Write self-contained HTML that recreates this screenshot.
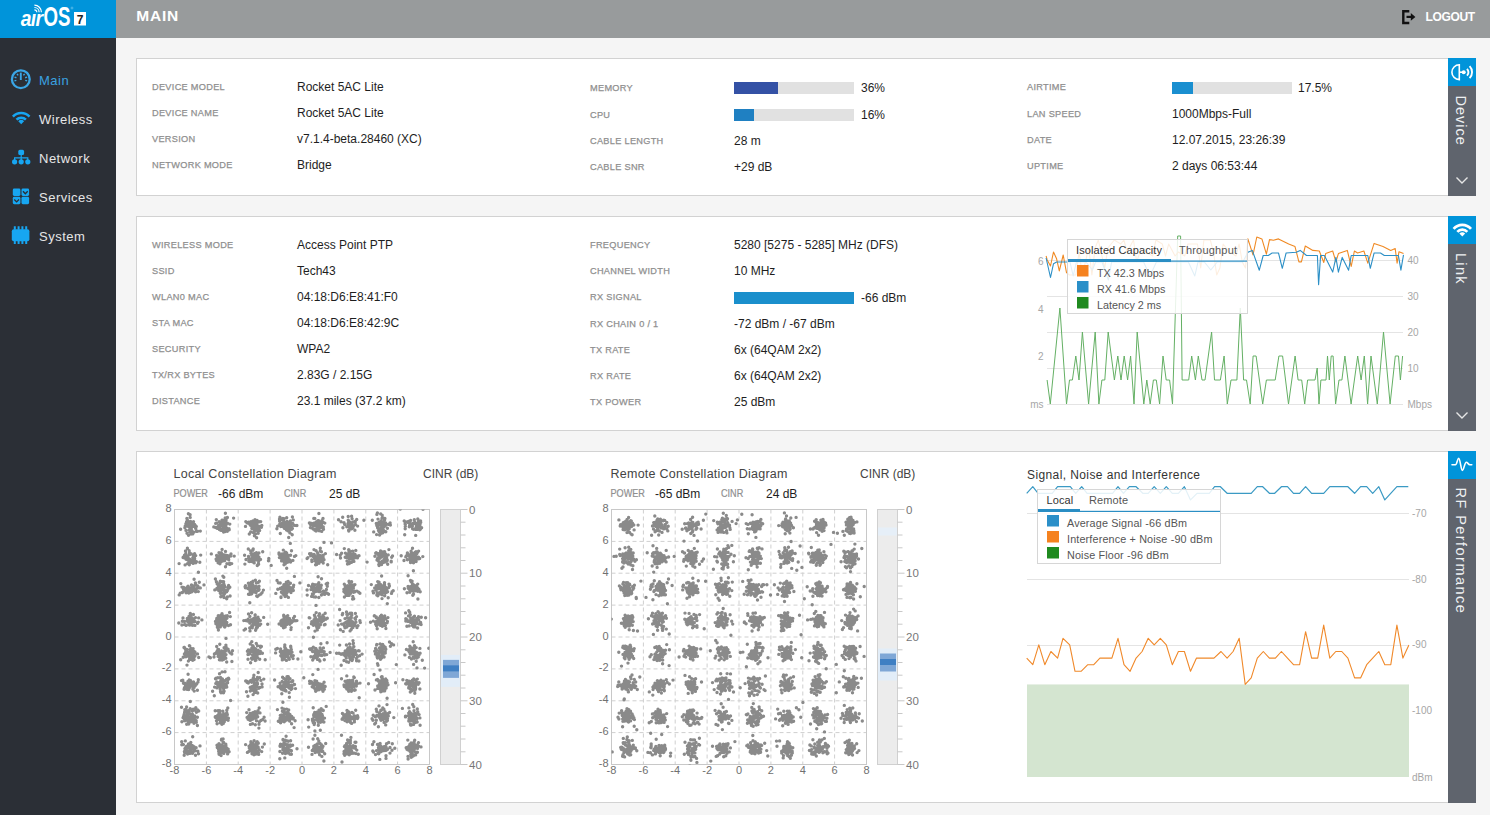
<!DOCTYPE html>
<html><head><meta charset="utf-8"><title>airOS 7 - Main</title>
<style>
html,body{margin:0;padding:0;width:1490px;height:815px;overflow:hidden;background:#f5f5f5;font-family:"Liberation Sans",sans-serif}
svg{position:absolute;left:0;top:0;font-family:"Liberation Sans",sans-serif}
</style></head><body>
<svg width="1490" height="815" viewBox="0 0 1490 815">
<rect x="136.5" y="58.5" width="1339" height="137" fill="#fff" stroke="#d2d2d2" stroke-width="1"/>
<rect x="1448" y="58" width="28" height="138" fill="#5f646d"/>
<rect x="1448" y="58" width="28" height="28" fill="#0094da"/>
<rect x="136.5" y="216.5" width="1339" height="214" fill="#fff" stroke="#d2d2d2" stroke-width="1"/>
<rect x="1448" y="216" width="28" height="215" fill="#5f646d"/>
<rect x="1448" y="216" width="28" height="28" fill="#0094da"/>
<rect x="136.5" y="451.5" width="1339" height="351" fill="#fff" stroke="#d2d2d2" stroke-width="1"/>
<rect x="1448" y="451" width="28" height="352" fill="#5f646d"/>
<rect x="1448" y="451" width="28" height="28" fill="#0094da"/>
<rect x="0" y="0" width="116" height="815" fill="#2b2f36"/>
<rect x="0" y="0" width="116" height="38" fill="#0094da"/>
<rect x="116" y="0" width="1374" height="38" fill="#989b9c"/>
<text x="136.3" y="20.8" font-size="15.5" fill="#fff" font-weight="bold" letter-spacing="0.8">MAIN</text>
<text x="1425.6" y="20.9" font-size="12" fill="#fff" font-weight="bold" letter-spacing="-0.35">LOGOUT</text>
<text x="39" y="85" font-size="13" fill="#3aa2e0" letter-spacing="0.5">Main</text>
<text x="39" y="124" font-size="13" fill="#e6e6e6" letter-spacing="0.5">Wireless</text>
<text x="39" y="163" font-size="13" fill="#e6e6e6" letter-spacing="0.5">Network</text>
<text x="39" y="202" font-size="13" fill="#e6e6e6" letter-spacing="0.5">Services</text>
<text x="39" y="241" font-size="13" fill="#e6e6e6" letter-spacing="0.5">System</text>
<text x="152" y="90" font-size="9.2" fill="#8f8f8f" letter-spacing="0.3" stroke="#8f8f8f" stroke-width="0.25">DEVICE MODEL</text>
<text x="297" y="91" font-size="12" fill="#1e1e1e">Rocket 5AC Lite</text>
<text x="152" y="116" font-size="9.2" fill="#8f8f8f" letter-spacing="0.3" stroke="#8f8f8f" stroke-width="0.25">DEVICE NAME</text>
<text x="297" y="117" font-size="12" fill="#1e1e1e">Rocket 5AC Lite</text>
<text x="152" y="142" font-size="9.2" fill="#8f8f8f" letter-spacing="0.3" stroke="#8f8f8f" stroke-width="0.25">VERSION</text>
<text x="297" y="143" font-size="12" fill="#1e1e1e">v7.1.4-beta.28460 (XC)</text>
<text x="152" y="168" font-size="9.2" fill="#8f8f8f" letter-spacing="0.3" stroke="#8f8f8f" stroke-width="0.25">NETWORK MODE</text>
<text x="297" y="169" font-size="12" fill="#1e1e1e">Bridge</text>
<text x="590" y="91" font-size="9.2" fill="#8f8f8f" letter-spacing="0.3" stroke="#8f8f8f" stroke-width="0.25">MEMORY</text>
<text x="590" y="118" font-size="9.2" fill="#8f8f8f" letter-spacing="0.3" stroke="#8f8f8f" stroke-width="0.25">CPU</text>
<text x="590" y="144" font-size="9.2" fill="#8f8f8f" letter-spacing="0.3" stroke="#8f8f8f" stroke-width="0.25">CABLE LENGTH</text>
<text x="590" y="170" font-size="9.2" fill="#8f8f8f" letter-spacing="0.3" stroke="#8f8f8f" stroke-width="0.25">CABLE SNR</text>
<rect x="734" y="82" width="120" height="12" fill="#e1e1e1"/>
<rect x="734" y="82" width="44" height="12" fill="#3451a5"/>
<text x="861" y="92" font-size="12" fill="#1e1e1e">36%</text>
<rect x="734" y="109" width="120" height="12" fill="#e1e1e1"/>
<rect x="734" y="109" width="20" height="12" fill="#1f80c2"/>
<text x="861" y="119" font-size="12" fill="#1e1e1e">16%</text>
<text x="734" y="145" font-size="12" fill="#1e1e1e">28 m</text>
<text x="734" y="171" font-size="12" fill="#1e1e1e">+29 dB</text>
<text x="1027" y="90" font-size="9.2" fill="#8f8f8f" letter-spacing="0.3" stroke="#8f8f8f" stroke-width="0.25">AIRTIME</text>
<text x="1027" y="117" font-size="9.2" fill="#8f8f8f" letter-spacing="0.3" stroke="#8f8f8f" stroke-width="0.25">LAN SPEED</text>
<text x="1027" y="143" font-size="9.2" fill="#8f8f8f" letter-spacing="0.3" stroke="#8f8f8f" stroke-width="0.25">DATE</text>
<text x="1027" y="169" font-size="9.2" fill="#8f8f8f" letter-spacing="0.3" stroke="#8f8f8f" stroke-width="0.25">UPTIME</text>
<rect x="1172" y="82" width="120" height="12" fill="#e1e1e1"/>
<rect x="1172" y="82" width="21" height="12" fill="#1a8fd0"/>
<text x="1298" y="92" font-size="12" fill="#1e1e1e">17.5%</text>
<text x="1172" y="118" font-size="12" fill="#1e1e1e">1000Mbps-Full</text>
<text x="1172" y="144" font-size="12" fill="#1e1e1e">12.07.2015, 23:26:39</text>
<text x="1172" y="170" font-size="12" fill="#1e1e1e">2 days 06:53:44</text>
<text x="152" y="248" font-size="9.2" fill="#8f8f8f" letter-spacing="0.3" stroke="#8f8f8f" stroke-width="0.25">WIRELESS MODE</text>
<text x="297" y="249" font-size="12" fill="#1e1e1e">Access Point PTP</text>
<text x="152" y="274" font-size="9.2" fill="#8f8f8f" letter-spacing="0.3" stroke="#8f8f8f" stroke-width="0.25">SSID</text>
<text x="297" y="275" font-size="12" fill="#1e1e1e">Tech43</text>
<text x="152" y="300" font-size="9.2" fill="#8f8f8f" letter-spacing="0.3" stroke="#8f8f8f" stroke-width="0.25">WLAN0 MAC</text>
<text x="297" y="301" font-size="12" fill="#1e1e1e">04:18:D6:E8:41:F0</text>
<text x="152" y="326" font-size="9.2" fill="#8f8f8f" letter-spacing="0.3" stroke="#8f8f8f" stroke-width="0.25">STA MAC</text>
<text x="297" y="327" font-size="12" fill="#1e1e1e">04:18:D6:E8:42:9C</text>
<text x="152" y="352" font-size="9.2" fill="#8f8f8f" letter-spacing="0.3" stroke="#8f8f8f" stroke-width="0.25">SECURITY</text>
<text x="297" y="353" font-size="12" fill="#1e1e1e">WPA2</text>
<text x="152" y="378" font-size="9.2" fill="#8f8f8f" letter-spacing="0.3" stroke="#8f8f8f" stroke-width="0.25">TX/RX BYTES</text>
<text x="297" y="379" font-size="12" fill="#1e1e1e">2.83G / 2.15G</text>
<text x="152" y="404" font-size="9.2" fill="#8f8f8f" letter-spacing="0.3" stroke="#8f8f8f" stroke-width="0.25">DISTANCE</text>
<text x="297" y="405" font-size="12" fill="#1e1e1e">23.1 miles (37.2 km)</text>
<text x="590" y="248" font-size="9.2" fill="#8f8f8f" letter-spacing="0.3" stroke="#8f8f8f" stroke-width="0.25">FREQUENCY</text>
<text x="734" y="249" font-size="12" fill="#1e1e1e">5280 [5275 - 5285] MHz (DFS)</text>
<text x="590" y="274" font-size="9.2" fill="#8f8f8f" letter-spacing="0.3" stroke="#8f8f8f" stroke-width="0.25">CHANNEL WIDTH</text>
<text x="734" y="275" font-size="12" fill="#1e1e1e">10 MHz</text>
<text x="590" y="300" font-size="9.2" fill="#8f8f8f" letter-spacing="0.3" stroke="#8f8f8f" stroke-width="0.25">RX SIGNAL</text>
<text x="590" y="327" font-size="9.2" fill="#8f8f8f" letter-spacing="0.3" stroke="#8f8f8f" stroke-width="0.25">RX CHAIN 0 / 1</text>
<text x="734" y="328" font-size="12" fill="#1e1e1e">-72 dBm / -67 dBm</text>
<text x="590" y="353" font-size="9.2" fill="#8f8f8f" letter-spacing="0.3" stroke="#8f8f8f" stroke-width="0.25">TX RATE</text>
<text x="734" y="354" font-size="12" fill="#1e1e1e">6x (64QAM 2x2)</text>
<text x="590" y="379" font-size="9.2" fill="#8f8f8f" letter-spacing="0.3" stroke="#8f8f8f" stroke-width="0.25">RX RATE</text>
<text x="734" y="380" font-size="12" fill="#1e1e1e">6x (64QAM 2x2)</text>
<text x="590" y="405" font-size="9.2" fill="#8f8f8f" letter-spacing="0.3" stroke="#8f8f8f" stroke-width="0.25">TX POWER</text>
<text x="734" y="406" font-size="12" fill="#1e1e1e">25 dBm</text>
<rect x="734" y="292" width="120" height="12" fill="#1a8fcc"/>
<text x="861" y="302" font-size="12" fill="#1e1e1e">-66 dBm</text>
<text transform="translate(1455.8,95.5) rotate(90)" font-size="14.5" fill="#eef0f2" letter-spacing="1.0">Device</text>
<text transform="translate(1455.8,253) rotate(90)" font-size="14.5" fill="#eef0f2" letter-spacing="1.3">Link</text>
<text transform="translate(1455.8,487.5) rotate(90)" font-size="14.5" fill="#eef0f2" letter-spacing="1.45">RF Performance</text>
<path d="M1456.5 177.5 L1462 183.0 L1467.5 177.5" fill="none" stroke="#e6e6e6" stroke-width="1.4"/>
<path d="M1456.5 412.5 L1462 418.0 L1467.5 412.5" fill="none" stroke="#e6e6e6" stroke-width="1.4"/>
<g fill="none" stroke="#fff" stroke-width="1.6"><path d="M1459.3 64.8 A7.4 7.4 0 0 0 1459.3 79.6 Z"/><path d="M1459.3 72.2 H1463"/><path d="M1467 68.8 A5.2 5.2 0 0 1 1467 75.6" stroke-width="1.9"/><path d="M1469.6 66.2 A8.6 8.6 0 0 1 1469.6 78.2" stroke-width="1.9"/></g><circle cx="1463.7" cy="72.2" r="2" fill="#fff"/>
<g fill="none" stroke="#fff" stroke-width="2.7"><path d="M1453.6 228.9 A11.4 11.4 0 0 1 1471 228.9"/><path d="M1457.3 231.9 A6.8 6.8 0 0 1 1467.3 231.9"/></g><path d="M1462.3 236.6 L1459.4 233.6 A4.1 4.1 0 0 1 1465.2 233.6 Z" fill="#fff"/>
<path d="M1452 464.7 H1455.5 C1456.9 464.7 1457.4 458.4 1458.7 458.4 C1460.2 458.4 1461 470.4 1462.4 470.4 C1463.7 470.4 1464.7 462.2 1466.3 462.2 C1467.6 462.2 1468.3 464.7 1469.8 464.7 H1471.8" fill="none" stroke="#fff" stroke-width="1.6" stroke-linecap="round"/>
<path d="M1047 260.5 H1403" stroke="#e4e4e4" stroke-width="1"/>
<path d="M1047 296.5 H1403" stroke="#e4e4e4" stroke-width="1"/>
<path d="M1047 332.5 H1403" stroke="#e4e4e4" stroke-width="1"/>
<path d="M1047 368.5 H1403" stroke="#e4e4e4" stroke-width="1"/>
<path d="M1047 404.5 H1403" stroke="#e4e4e4" stroke-width="1"/>
<text x="1407.5" y="264" font-size="10" fill="#a6a6a6">40</text>
<text x="1407.5" y="300" font-size="10" fill="#a6a6a6">30</text>
<text x="1407.5" y="336" font-size="10" fill="#a6a6a6">20</text>
<text x="1407.5" y="372" font-size="10" fill="#a6a6a6">10</text>
<text x="1407.5" y="407.5" font-size="10" fill="#a6a6a6">Mbps</text>
<text x="1043.5" y="264.5" font-size="10" fill="#a6a6a6" text-anchor="end">6</text>
<text x="1043.5" y="312.5" font-size="10" fill="#a6a6a6" text-anchor="end">4</text>
<text x="1043.5" y="360" font-size="10" fill="#a6a6a6" text-anchor="end">2</text>
<text x="1043.5" y="407.5" font-size="10" fill="#a6a6a6" text-anchor="end">ms</text>
<polyline points="1047.1,380.0 1050.3,404.0 1059.9,308.0 1066.5,404.0 1069.5,380.0 1072.4,380.0 1075.8,356.0 1079.0,380.0 1082.4,332.0 1088.6,404.0 1095.2,332.0 1098.9,404.0 1101.9,380.0 1104.8,380.0 1108.2,332.0 1114.4,380.0 1117.8,356.0 1121.0,380.0 1124.2,356.0 1127.6,380.0 1130.6,356.0 1134.0,404.0 1137.2,332.0 1143.8,404.0 1146.8,380.0 1150.2,404.0 1153.4,380.0 1156.3,380.0 1159.6,404.0 1163.0,356.0 1166.2,380.0 1169.6,380.0 1172.5,404.0 1177.7,236.0 1180.6,236.0 1182.1,380.0 1188.7,380.0 1191.7,356.0 1195.4,380.0 1198.3,356.0 1202.0,380.0 1205.0,380.0 1211.6,332.0 1214.5,380.0 1220.4,380.0 1224.1,356.0 1227.3,404.0 1231.0,380.0 1236.9,380.0 1240.3,308.0 1243.6,380.0 1246.5,380.0 1250.2,404.0 1253.1,356.0 1256.1,356.0 1262.7,404.0 1266.4,380.0 1275.2,380.0 1278.9,356.0 1282.6,356.0 1288.5,404.0 1295.1,356.0 1298.1,380.0 1301.7,380.0 1304.7,404.0 1307.6,380.0 1315.0,380.0 1317.2,368.0 1319.0,404.0 1320.9,380.0 1326.0,380.0 1327.5,356.0 1329.3,380.0 1331.2,356.0 1333.1,356.0 1335.6,404.0 1339.0,380.0 1341.9,380.0 1344.9,356.0 1351.1,404.0 1357.7,356.0 1361.1,380.0 1364.3,356.0 1367.6,404.0 1371.0,356.0 1377.3,404.0 1383.5,332.0 1390.1,404.0 1395.3,356.0 1398.5,356.0 1400.4,380.0 1402.6,356.0" fill="none" stroke="#64b064" stroke-width="1" stroke-linejoin="round"/>
<polyline points="1046.1,256.0 1047.2,259.9 1050.5,266.0 1053.5,252.0 1056.6,258.8 1059.3,270.9 1063.2,255.0 1066.5,272.6 1069.5,275.0 1075.9,275.0 1079.1,252.0 1082.3,275.0 1088.7,248.0 1091.9,275.0 1095.1,248.0 1098.3,240.0 1104.7,268.0 1107.9,248.0 1114.3,240.0 1120.7,244.0 1123.9,240.0 1127.1,252.0 1133.5,240.0 1136.7,262.0 1139.9,252.0 1146.3,252.0 1152.7,256.0 1155.9,240.0 1162.3,244.0 1165.5,256.0 1168.7,244.0 1175.1,256.0 1178.3,252.0 1184.7,256.0 1187.9,244.0 1194.3,244.0 1197.5,244.0 1200.7,268.0 1203.9,240.0 1210.3,240.0 1213.5,252.0 1216.7,275.0 1219.9,268.0 1223.1,244.0 1229.5,252.0 1235.9,256.0 1239.1,244.0 1242.3,262.0 1245.5,268.0 1247.9,238.9 1253.0,254.9 1256.8,237.0 1261.9,238.9 1266.4,254.2 1269.5,239.6 1273.4,240.2 1278.5,238.9 1283.6,241.5 1288.7,244.0 1295.0,246.6 1298.9,261.9 1301.4,261.9 1305.3,246.0 1312.9,250.4 1319.3,251.0 1323.8,262.5 1325.7,253.6 1332.7,251.0 1335.9,261.9 1338.4,253.6 1347.3,250.4 1351.2,266.4 1354.4,251.0 1357.6,253.0 1363.9,251.0 1367.8,263.2 1374.1,243.4 1383.0,246.6 1390.7,250.4 1395.2,248.5 1397.1,263.2 1399.0,251.7 1403.5,253.6" fill="none" stroke="#f08a24" stroke-width="1.1" stroke-linejoin="round"/>
<polyline points="1046.1,258.0 1050.5,277.5 1053.5,263.7 1056.6,262.0 1067.0,262.0 1070.0,262.0 1073.2,276.0 1076.4,262.0 1079.6,262.0 1086.0,262.0 1092.4,270.0 1095.6,262.0 1102.0,262.0 1108.4,280.0 1111.6,262.0 1118.0,262.0 1121.2,262.0 1127.6,262.0 1130.8,262.0 1137.2,262.0 1140.4,262.0 1143.6,262.0 1150.0,276.0 1156.4,262.0 1159.6,262.0 1162.8,262.0 1169.2,262.0 1175.6,262.0 1182.0,262.0 1185.2,262.0 1188.4,262.0 1194.8,276.0 1198.0,262.0 1204.4,262.0 1210.8,270.0 1217.2,262.0 1223.6,262.0 1230.0,262.0 1236.4,262.0 1242.8,262.0 1247.9,252.3 1252.3,250.4 1259.3,270.2 1263.2,255.5 1268.3,255.5 1272.1,253.0 1278.5,253.0 1282.3,268.3 1286.1,253.0 1296.3,252.3 1300.2,250.4 1306.5,255.5 1317.4,255.5 1318.6,284.8 1320.6,255.5 1324.4,255.5 1332.7,272.1 1335.9,257.4 1338.4,272.1 1342.2,257.4 1348.6,270.2 1351.2,255.5 1367.8,255.5 1370.3,268.3 1374.1,253.0 1380.5,253.0 1384.3,255.5 1398.4,255.5 1400.9,270.2 1403.5,254.9" fill="none" stroke="#2b8fc6" stroke-width="1.1" stroke-linejoin="round"/>
<rect x="1067.5" y="239.5" width="180" height="74" fill="#fff" fill-opacity="0.86" stroke="#d6d6d6"/>
<text x="1076" y="254" font-size="11" fill="#333" letter-spacing="0.1">Isolated Capacity</text>
<text x="1179" y="254" font-size="11" fill="#555" letter-spacing="0.2">Throughput</text>
<rect x="1068" y="259" width="103" height="3" fill="#2a8ec4"/>
<rect x="1068" y="260.5" width="179" height="1.2" fill="#2a8ec4"/>
<rect x="1077" y="265" width="11.5" height="11.5" fill="#f5821f"/>
<text x="1097" y="277" font-size="10.8" fill="#555">TX 42.3 Mbps</text>
<rect x="1077" y="281" width="11.5" height="11.5" fill="#2a8fc8"/>
<text x="1097" y="293" font-size="10.8" fill="#555">RX 41.6 Mbps</text>
<rect x="1077" y="297" width="11.5" height="11.5" fill="#1f8a1f"/>
<text x="1097" y="309" font-size="10.8" fill="#555">Latency 2 ms</text>
<text x="1027" y="479" font-size="12" fill="#333" letter-spacing="0.4">Signal, Noise and Interference</text>
<path d="M1027 513.5 H1409" stroke="#e4e4e4" stroke-width="1"/>
<text x="1412" y="516.6" font-size="10" fill="#a6a6a6">-70</text>
<path d="M1027 579.5 H1409" stroke="#e4e4e4" stroke-width="1"/>
<text x="1412" y="582.5" font-size="10" fill="#a6a6a6">-80</text>
<path d="M1027 645.5 H1409" stroke="#e4e4e4" stroke-width="1"/>
<text x="1412" y="648.4000000000001" font-size="10" fill="#a6a6a6">-90</text>
<path d="M1027 711.5 H1409" stroke="#e4e4e4" stroke-width="1"/>
<text x="1412" y="714.3" font-size="10" fill="#a6a6a6">-100</text>
<text x="1412" y="780.5" font-size="10" fill="#a6a6a6">dBm</text>
<rect x="1027" y="684.44" width="382" height="92.55999999999995" fill="#d4e5d0"/>
<polyline points="1026.7,493.3 1032.8,486.7 1038.1,493.3 1052.2,493.3 1057.6,486.7 1070.3,486.7 1075.7,493.3 1081.7,486.7 1087.1,493.3 1112.6,493.3 1118.0,486.7 1123.4,493.3 1129.4,486.7 1136.1,486.7 1142.8,493.3 1148.2,493.3 1154.2,486.7 1160.3,493.3 1166.3,486.7 1172.3,493.3 1178.4,493.3 1184.4,486.7 1190.5,499.9 1197.0,493.3 1209.3,493.3 1214.6,486.7 1220.4,486.7 1227.1,493.3 1251.2,493.3 1257.3,486.7 1262.7,486.7 1269.4,493.3 1274.7,493.3 1281.4,486.7 1287.5,486.7 1293.5,493.3 1299.6,493.3 1305.6,486.7 1311.6,493.3 1323.7,493.3 1329.8,486.7 1347.9,486.7 1354.6,493.3 1360.6,486.7 1366.7,486.7 1372.7,493.3 1378.8,486.7 1384.8,499.9 1396.9,486.7 1408.3,486.7" fill="none" stroke="#3b9ac4" stroke-width="1.2" stroke-linejoin="round"/>
<polyline points="1026.7,658.1 1032.8,664.7 1038.8,644.9 1044.8,664.7 1050.9,651.5 1057.6,658.1 1063.0,638.3 1069.7,644.9 1075.0,671.3 1081.1,671.3 1087.8,664.7 1093.8,664.7 1099.9,658.1 1111.9,658.1 1118.0,638.3 1124.0,664.7 1130.1,671.3 1136.1,658.1 1142.1,651.5 1148.2,638.3 1154.2,644.9 1160.3,638.3 1166.3,644.9 1172.3,664.7 1178.4,651.5 1184.4,651.5 1190.5,671.3 1196.5,658.1 1214.0,658.1 1221.0,651.5 1227.1,658.1 1233.1,651.5 1239.2,638.3 1245.2,684.4 1251.2,677.9 1257.3,658.1 1263.3,651.5 1269.4,658.1 1275.4,658.1 1281.4,651.5 1287.5,658.1 1293.5,664.7 1299.6,664.7 1305.6,631.7 1311.6,658.1 1317.7,658.1 1323.7,625.1 1329.8,658.1 1335.8,651.5 1341.8,651.5 1347.9,658.1 1354.6,677.9 1360.6,677.9 1366.7,664.7 1372.7,658.1 1378.8,651.5 1384.8,664.7 1390.8,664.7 1396.9,625.1 1402.9,658.1 1408.9,644.9" fill="none" stroke="#f0892a" stroke-width="1.1" stroke-linejoin="round"/>
<rect x="1037.5" y="489.5" width="183" height="74" fill="#fff" fill-opacity="0.86" stroke="#d6d6d6"/>
<text x="1046.5" y="504" font-size="11" fill="#333" letter-spacing="0.1">Local</text>
<text x="1089" y="504" font-size="11" fill="#555" letter-spacing="0.1">Remote</text>
<rect x="1038" y="509" width="42" height="3" fill="#2a8ec4"/>
<rect x="1038" y="510.8" width="182" height="1.2" fill="#2a8ec4"/>
<rect x="1047" y="515" width="12" height="11.5" fill="#2b8fc8"/>
<text x="1067" y="526.5" font-size="10.8" fill="#555" letter-spacing="0.15">Average Signal -66 dBm</text>
<rect x="1047" y="531" width="12" height="11.5" fill="#f5821f"/>
<text x="1067" y="542.5" font-size="10.8" fill="#555" letter-spacing="0.15">Interference + Noise -90 dBm</text>
<rect x="1047" y="547" width="12" height="11.5" fill="#1f8a1f"/>
<text x="1067" y="558.5" font-size="10.8" fill="#555" letter-spacing="0.15">Noise Floor -96 dBm</text>
<text x="173.5" y="478.3" font-size="12.5" fill="#444" letter-spacing="0.25">Local Constellation Diagram</text>
<text x="423.0" y="478.3" font-size="12" fill="#444">CINR (dB)</text>
<text transform="translate(173.5,497) scale(0.91,1)" font-size="10" fill="#8f8f8f" stroke="#8f8f8f" stroke-width="0.2">POWER</text>
<text x="218.0" y="497.5" font-size="12" fill="#1e1e1e">-66 dBm</text>
<text transform="translate(284.0,497) scale(0.91,1)" font-size="10" fill="#8f8f8f" stroke="#8f8f8f" stroke-width="0.2">CINR</text>
<text x="329.0" y="497.5" font-size="12" fill="#1e1e1e">25 dB</text>
<path d="M206.4 509.5 V764.5" stroke="#cfcfcf" stroke-dasharray="4,3"/>
<path d="M174.5 732.6 H429.5" stroke="#cfcfcf" stroke-dasharray="4,3"/>
<path d="M238.2 509.5 V764.5" stroke="#cfcfcf" stroke-dasharray="4,3"/>
<path d="M174.5 700.8 H429.5" stroke="#cfcfcf" stroke-dasharray="4,3"/>
<path d="M270.1 509.5 V764.5" stroke="#cfcfcf" stroke-dasharray="4,3"/>
<path d="M174.5 668.9 H429.5" stroke="#cfcfcf" stroke-dasharray="4,3"/>
<path d="M302.0 509.5 V764.5" stroke="#cfcfcf" stroke-dasharray="4,3"/>
<path d="M174.5 637.0 H429.5" stroke="#cfcfcf" stroke-dasharray="4,3"/>
<path d="M333.9 509.5 V764.5" stroke="#cfcfcf" stroke-dasharray="4,3"/>
<path d="M174.5 605.1 H429.5" stroke="#cfcfcf" stroke-dasharray="4,3"/>
<path d="M365.8 509.5 V764.5" stroke="#cfcfcf" stroke-dasharray="4,3"/>
<path d="M174.5 573.2 H429.5" stroke="#cfcfcf" stroke-dasharray="4,3"/>
<path d="M397.6 509.5 V764.5" stroke="#cfcfcf" stroke-dasharray="4,3"/>
<path d="M174.5 541.4 H429.5" stroke="#cfcfcf" stroke-dasharray="4,3"/>
<rect x="174.5" y="509.5" width="255.0" height="255.0" fill="none" stroke="#c8c8c8"/>
<text x="171.5" y="767.0" font-size="11" fill="#707070" text-anchor="end">-8</text>
<text x="174.5" y="774" font-size="11" fill="#707070" text-anchor="middle">-8</text>
<text x="171.5" y="735.125" font-size="11" fill="#707070" text-anchor="end">-6</text>
<text x="206.375" y="774" font-size="11" fill="#707070" text-anchor="middle">-6</text>
<text x="171.5" y="703.25" font-size="11" fill="#707070" text-anchor="end">-4</text>
<text x="238.25" y="774" font-size="11" fill="#707070" text-anchor="middle">-4</text>
<text x="171.5" y="671.375" font-size="11" fill="#707070" text-anchor="end">-2</text>
<text x="270.125" y="774" font-size="11" fill="#707070" text-anchor="middle">-2</text>
<text x="171.5" y="639.5" font-size="11" fill="#707070" text-anchor="end">0</text>
<text x="302.0" y="774" font-size="11" fill="#707070" text-anchor="middle">0</text>
<text x="171.5" y="607.625" font-size="11" fill="#707070" text-anchor="end">2</text>
<text x="333.875" y="774" font-size="11" fill="#707070" text-anchor="middle">2</text>
<text x="171.5" y="575.75" font-size="11" fill="#707070" text-anchor="end">4</text>
<text x="365.75" y="774" font-size="11" fill="#707070" text-anchor="middle">4</text>
<text x="171.5" y="543.875" font-size="11" fill="#707070" text-anchor="end">6</text>
<text x="397.625" y="774" font-size="11" fill="#707070" text-anchor="middle">6</text>
<text x="171.5" y="512.0" font-size="11" fill="#707070" text-anchor="end">8</text>
<text x="429.5" y="774" font-size="11" fill="#707070" text-anchor="middle">8</text>
<clipPath id="clip3"><rect x="174.5" y="509.5" width="255.0" height="255.0"/></clipPath>
<path clip-path="url(#clip3)" d="M185.5 749.2h0M194.0 746.6h0M192.6 753.3h0M186.8 747.6h0M190.7 750.4h0M189.9 748.9h0M195.5 755.3h0M192.7 736.7h0M183.4 744.6h0M191.4 745.3h0M181.8 744.8h0M189.8 749.2h0M190.2 753.3h0M192.9 745.9h0M186.3 746.8h0M190.8 751.4h0M193.4 749.0h0M188.5 743.9h0M185.7 747.5h0M185.3 740.9h0M190.2 750.2h0M187.6 745.8h0M197.8 751.3h0M184.4 751.5h0M181.7 741.8h0M186.4 746.5h0M189.9 750.8h0M193.5 748.7h0M200.0 745.9h0M190.0 753.4h0M188.5 751.1h0M192.8 746.2h0M184.7 752.7h0M198.5 753.7h0M189.7 753.0h0M194.2 747.2h0M189.3 751.3h0M193.7 748.3h0M188.7 747.7h0M188.7 751.1h0M188.1 746.9h0M182.5 744.4h0M184.2 755.3h0M188.5 747.4h0M190.8 742.5h0M190.8 747.1h0M196.1 747.7h0M184.9 748.6h0M187.8 752.8h0M194.6 751.0h0M189.2 746.5h0M191.9 748.2h0M191.4 752.6h0M190.7 747.8h0M187.6 754.1h0M192.7 746.4h0M194.9 750.8h0M186.4 750.4h0M185.2 749.6h0M189.5 748.2h0M191.8 752.0h0M187.2 745.9h0M190.2 708.7h0M187.0 716.3h0M190.7 718.3h0M188.7 724.1h0M198.7 711.0h0M197.7 711.2h0M197.4 717.3h0M188.5 722.6h0M181.9 721.8h0M188.7 719.4h0M183.1 717.7h0M192.1 721.6h0M194.0 723.2h0M193.2 709.3h0M181.5 707.3h0M189.7 721.8h0M186.2 718.9h0M191.9 716.7h0M191.6 717.8h0M191.5 715.3h0M189.0 720.0h0M187.0 712.2h0M191.8 720.2h0M184.1 714.4h0M192.8 718.0h0M184.6 712.2h0M192.3 711.1h0M187.0 720.2h0M184.7 719.8h0M190.6 721.9h0M194.4 718.6h0M197.7 709.9h0M196.4 712.2h0M188.3 717.2h0M185.8 709.2h0M187.0 710.7h0M194.9 720.1h0M197.4 725.5h0M192.9 718.3h0M190.8 717.5h0M196.3 722.3h0M195.8 707.8h0M190.8 715.6h0M183.7 716.2h0M190.3 701.5h0M186.7 724.2h0M190.6 719.3h0M185.1 712.0h0M187.6 719.8h0M188.9 717.5h0M194.7 716.0h0M193.9 722.1h0M188.1 712.2h0M184.8 709.7h0M196.2 720.6h0M185.9 716.2h0M191.7 719.7h0M187.3 714.8h0M186.6 707.0h0M189.2 712.5h0M187.6 715.0h0M195.2 717.4h0M192.3 720.2h0M190.8 714.4h0M184.8 717.4h0M194.4 710.0h0M183.7 717.5h0M184.9 720.7h0M187.4 717.3h0M189.2 710.5h0M192.4 714.2h0M190.3 719.4h0M188.7 688.0h0M192.0 685.6h0M189.4 687.8h0M190.2 684.5h0M186.0 686.3h0M181.5 680.6h0M188.4 684.4h0M189.4 683.4h0M192.0 684.0h0M185.4 688.9h0M188.7 689.6h0M191.6 682.4h0M196.5 683.6h0M194.1 687.4h0M189.2 679.9h0M192.9 689.2h0M194.2 691.1h0M197.4 690.2h0M187.2 689.4h0M184.8 683.2h0M189.4 686.7h0M188.1 674.2h0M190.2 681.7h0M184.1 689.3h0M185.5 684.7h0M188.2 687.2h0M183.5 683.3h0M191.6 683.5h0M192.1 685.8h0M190.1 682.7h0M184.5 687.6h0M190.4 680.4h0M188.2 686.1h0M187.9 683.9h0M190.6 684.0h0M198.3 679.7h0M185.2 683.4h0M196.7 684.1h0M193.5 681.9h0M190.4 684.6h0M187.9 681.5h0M187.8 685.3h0M195.2 685.7h0M185.4 686.3h0M192.2 683.7h0M189.5 684.1h0M190.6 686.1h0M193.8 683.6h0M189.7 683.1h0M182.8 680.3h0M190.2 681.8h0M198.0 682.1h0M190.6 681.0h0M193.0 685.5h0M193.0 688.1h0M186.2 684.0h0M188.7 654.3h0M189.8 649.6h0M185.9 652.0h0M192.8 653.0h0M192.8 656.1h0M191.0 655.1h0M190.8 653.7h0M194.1 659.5h0M197.5 653.9h0M190.1 651.8h0M189.8 653.4h0M190.7 654.5h0M192.9 657.3h0M191.2 653.8h0M189.5 659.2h0M193.1 651.7h0M189.8 659.5h0M189.6 654.3h0M194.9 652.0h0M193.2 653.5h0M191.5 653.2h0M192.3 651.5h0M184.4 653.9h0M191.3 652.6h0M184.0 647.5h0M187.0 665.1h0M185.9 656.7h0M192.3 652.0h0M189.8 646.1h0M193.3 651.4h0M191.2 659.2h0M190.2 655.1h0M186.2 649.4h0M188.5 653.1h0M194.2 653.5h0M189.8 651.5h0M193.1 648.6h0M193.0 650.1h0M190.1 649.7h0M193.5 654.5h0M193.9 655.8h0M198.7 657.5h0M192.3 653.6h0M190.0 652.7h0M192.8 652.4h0M185.3 656.0h0M191.4 648.6h0M191.0 654.3h0M191.0 653.5h0M192.7 660.2h0M185.9 653.9h0M186.8 649.5h0M192.6 650.5h0M188.9 653.5h0M185.3 649.2h0M186.8 652.0h0M193.2 654.5h0M194.3 654.9h0M186.1 655.4h0M191.1 656.2h0M188.6 656.2h0M191.2 656.8h0M189.4 645.7h0M184.4 647.5h0M183.2 657.2h0M194.2 651.6h0M180.7 659.8h0M188.4 661.1h0M194.9 656.2h0M185.6 652.3h0M194.0 621.9h0M190.8 619.3h0M193.4 619.1h0M184.5 621.5h0M186.3 625.2h0M193.7 619.8h0M178.8 623.0h0M193.0 620.3h0M186.1 625.4h0M190.3 613.5h0M195.0 621.5h0M198.3 622.1h0M201.9 619.9h0M193.5 620.4h0M188.0 621.2h0M195.5 617.6h0M191.8 617.7h0M188.6 617.7h0M190.0 621.7h0M194.3 621.0h0M183.0 617.9h0M192.3 618.2h0M189.5 622.6h0M197.6 623.2h0M193.4 614.5h0M190.6 614.6h0M187.3 620.8h0M190.1 622.3h0M191.2 619.7h0M188.0 622.0h0M189.6 625.0h0M191.0 621.8h0M190.9 624.7h0M190.0 623.9h0M191.7 622.2h0M190.5 618.5h0M191.2 621.5h0M190.5 614.9h0M189.3 623.9h0M193.5 619.9h0M190.8 622.8h0M187.3 618.4h0M184.6 624.4h0M182.3 621.3h0M189.9 619.5h0M194.9 625.4h0M198.7 617.9h0M181.9 625.0h0M189.4 625.1h0M188.5 621.2h0M189.1 616.3h0M190.1 621.3h0M192.4 625.2h0M189.4 619.7h0M188.6 620.8h0M191.1 617.6h0M191.8 590.6h0M191.9 588.5h0M204.0 584.9h0M190.5 592.3h0M183.8 589.7h0M194.3 589.6h0M191.5 584.9h0M185.9 588.3h0M191.9 587.2h0M198.0 586.5h0M198.4 587.7h0M190.2 591.4h0M197.0 588.3h0M191.0 589.6h0M194.1 579.2h0M183.2 588.3h0M183.6 587.4h0M187.4 587.4h0M187.8 591.3h0M180.8 583.6h0M195.7 584.3h0M193.8 588.8h0M183.5 589.2h0M188.3 587.0h0M185.8 590.3h0M199.3 582.2h0M184.9 590.9h0M179.2 594.9h0M198.3 591.6h0M194.5 588.8h0M182.0 587.1h0M195.0 585.3h0M188.8 593.0h0M186.1 592.7h0M188.4 588.2h0M186.4 592.6h0M193.7 590.6h0M195.7 590.0h0M183.6 588.0h0M195.4 582.9h0M189.5 587.6h0M186.9 591.8h0M189.8 591.3h0M189.0 588.4h0M190.0 589.8h0M191.8 591.7h0M185.9 588.9h0M188.0 586.1h0M200.3 587.9h0M180.3 593.1h0M191.0 589.4h0M182.4 592.5h0M188.2 592.2h0M192.6 587.7h0M195.6 591.7h0M197.7 586.0h0M193.1 590.4h0M193.8 585.9h0M196.7 588.6h0M191.5 591.9h0M187.5 563.6h0M189.6 553.1h0M189.1 550.6h0M183.1 557.6h0M193.7 559.6h0M183.2 557.3h0M190.5 554.2h0M194.6 553.7h0M190.7 560.6h0M189.7 560.4h0M200.7 555.1h0M189.7 559.3h0M187.9 557.6h0M188.6 559.2h0M185.5 556.4h0M191.8 560.0h0M194.5 559.4h0M192.8 557.6h0M186.6 559.3h0M186.1 557.3h0M185.8 553.3h0M179.1 563.6h0M188.9 560.2h0M188.9 562.0h0M193.6 555.7h0M185.1 564.9h0M187.4 548.3h0M185.6 554.7h0M188.7 560.5h0M185.5 550.9h0M184.5 555.2h0M188.8 558.9h0M193.1 563.4h0M189.4 559.2h0M185.8 557.7h0M194.4 554.9h0M189.6 552.6h0M193.2 561.8h0M187.4 556.3h0M187.4 556.3h0M184.8 558.0h0M190.3 559.7h0M187.9 560.0h0M189.2 554.8h0M195.7 555.6h0M190.3 560.5h0M196.4 561.7h0M199.8 562.3h0M195.7 561.6h0M194.6 558.4h0M195.8 562.8h0M186.1 559.3h0M194.4 556.8h0M189.3 564.7h0M194.4 558.0h0M191.3 554.0h0M192.0 562.5h0M190.2 562.2h0M193.9 556.6h0M185.2 526.1h0M185.9 523.7h0M191.4 527.4h0M191.7 523.9h0M200.3 531.1h0M180.6 529.2h0M190.0 532.1h0M188.5 535.3h0M194.2 526.5h0M191.9 525.1h0M186.0 530.4h0M189.0 522.1h0M184.9 527.7h0M190.9 529.8h0M187.0 533.2h0M188.3 523.4h0M196.3 526.4h0M188.2 524.0h0M186.6 521.7h0M187.1 524.8h0M195.7 528.4h0M196.4 531.2h0M188.0 522.2h0M192.4 525.4h0M192.1 525.4h0M188.0 525.8h0M190.0 525.8h0M195.5 525.6h0M191.3 524.7h0M189.2 530.0h0M189.9 527.6h0M197.5 531.3h0M194.6 524.5h0M190.2 517.4h0M185.9 525.1h0M186.9 518.5h0M191.6 525.5h0M193.4 523.4h0M187.5 523.9h0M189.8 524.8h0M190.3 522.1h0M190.3 529.5h0M190.1 514.7h0M191.3 529.1h0M191.0 534.0h0M190.5 528.1h0M193.8 532.3h0M193.5 521.8h0M189.6 526.0h0M190.5 521.4h0M190.1 528.4h0M191.9 530.9h0M190.2 523.5h0M187.3 526.0h0M188.5 526.6h0M187.4 520.1h0M192.7 533.9h0M188.4 513.8h0M225.9 751.3h0M220.6 748.0h0M224.4 748.5h0M219.4 745.5h0M221.5 748.5h0M219.6 746.7h0M222.7 750.4h0M223.2 752.1h0M224.5 746.2h0M226.1 751.1h0M223.5 746.4h0M227.4 748.6h0M222.4 750.6h0M217.0 745.2h0M221.5 751.8h0M223.8 753.4h0M219.7 749.4h0M218.7 751.5h0M218.5 747.9h0M221.4 749.8h0M223.1 742.8h0M222.8 745.9h0M220.9 747.4h0M220.3 753.1h0M228.2 750.4h0M229.1 751.8h0M226.1 749.1h0M224.4 748.5h0M223.6 742.5h0M221.1 755.6h0M218.5 749.6h0M221.4 740.1h0M218.3 746.8h0M227.3 751.1h0M217.3 747.5h0M221.6 739.2h0M222.1 748.8h0M222.0 749.1h0M224.4 748.3h0M219.1 748.5h0M226.2 748.8h0M219.0 743.6h0M223.1 739.0h0M223.5 749.5h0M222.7 747.5h0M227.6 753.9h0M220.6 752.1h0M221.3 751.6h0M225.8 744.2h0M228.2 749.1h0M221.3 745.3h0M219.0 750.8h0M224.9 747.0h0M227.5 751.5h0M219.1 754.3h0M226.0 746.1h0M219.0 753.6h0M220.7 750.2h0M221.0 752.4h0M217.1 723.8h0M227.2 715.1h0M219.7 712.9h0M218.0 716.8h0M223.4 714.8h0M220.2 722.8h0M215.3 717.3h0M223.1 719.1h0M218.0 715.1h0M224.2 720.6h0M217.9 717.9h0M218.8 711.6h0M226.1 716.7h0M228.4 718.3h0M221.0 721.1h0M215.3 716.8h0M221.6 717.7h0M219.4 719.8h0M223.3 716.7h0M228.1 720.3h0M222.7 721.8h0M227.8 718.8h0M224.3 716.7h0M222.4 723.2h0M220.5 715.8h0M221.9 715.6h0M226.8 710.3h0M215.2 710.7h0M221.7 718.3h0M222.8 715.3h0M216.5 720.8h0M219.7 710.8h0M221.7 722.9h0M218.8 710.8h0M227.3 714.5h0M216.4 716.4h0M220.0 718.9h0M223.3 723.4h0M217.9 710.7h0M218.7 715.1h0M225.9 713.8h0M223.9 715.4h0M227.8 708.0h0M220.4 718.1h0M223.8 722.0h0M223.8 713.9h0M226.6 714.0h0M218.8 715.4h0M219.4 716.4h0M226.8 713.0h0M224.3 721.7h0M220.9 714.8h0M218.9 716.2h0M217.4 718.2h0M224.0 716.5h0M227.2 715.1h0M222.9 716.0h0M218.9 713.6h0M221.0 715.5h0M221.9 724.3h0M216.4 717.6h0M220.2 716.4h0M222.8 711.2h0M222.7 715.8h0M221.1 716.8h0M226.1 713.7h0M223.6 713.9h0M221.2 717.5h0M224.8 717.8h0M225.7 719.4h0M219.5 715.1h0M212.6 691.3h0M224.8 684.8h0M223.0 682.4h0M222.5 682.5h0M214.6 687.1h0M224.1 691.3h0M222.5 686.0h0M219.4 683.6h0M223.6 688.7h0M214.3 695.7h0M223.9 687.1h0M221.0 692.7h0M228.5 678.2h0M221.4 686.0h0M221.7 684.2h0M225.0 671.8h0M224.8 680.7h0M220.8 680.2h0M223.9 685.1h0M220.5 685.3h0M216.8 681.9h0M223.5 692.7h0M222.1 686.8h0M227.5 680.5h0M220.8 683.7h0M216.9 687.9h0M223.8 684.1h0M222.9 691.8h0M226.4 683.6h0M220.5 691.8h0M228.8 679.0h0M227.6 682.8h0M222.2 686.3h0M219.5 673.8h0M226.6 679.2h0M220.2 686.7h0M219.9 684.1h0M220.2 689.3h0M220.8 683.2h0M221.3 682.4h0M225.9 684.0h0M215.5 678.8h0M222.4 679.0h0M217.4 684.2h0M217.9 677.8h0M223.1 682.8h0M216.1 678.3h0M230.6 700.5h0M220.9 679.9h0M217.8 686.7h0M215.8 683.4h0M221.1 679.8h0M223.4 683.7h0M220.1 682.9h0M224.5 686.4h0M220.5 677.4h0M225.2 687.2h0M221.5 681.7h0M219.6 683.2h0M226.8 687.1h0M226.4 686.0h0M219.5 682.4h0M228.8 651.3h0M226.7 662.0h0M218.1 656.4h0M216.7 646.5h0M218.4 649.7h0M218.6 649.4h0M215.6 653.2h0M219.8 644.3h0M222.1 671.9h0M225.9 645.1h0M221.8 652.4h0M219.4 659.8h0M225.0 655.4h0M222.4 651.5h0M231.9 661.5h0M220.4 656.1h0M214.0 657.0h0M214.4 653.9h0M225.8 658.3h0M228.1 649.2h0M221.4 654.2h0M218.9 654.0h0M223.5 659.4h0M217.0 651.4h0M218.3 652.9h0M226.0 646.8h0M222.2 660.0h0M225.0 656.9h0M220.6 652.3h0M224.4 655.4h0M224.1 647.8h0M226.2 647.7h0M226.0 638.4h0M208.9 656.9h0M220.0 658.2h0M230.2 652.9h0M221.6 650.9h0M218.2 651.2h0M221.4 654.9h0M221.0 654.1h0M216.3 652.6h0M224.5 655.3h0M221.0 659.9h0M224.3 651.7h0M223.9 654.3h0M219.0 655.9h0M221.0 655.6h0M226.0 654.6h0M219.5 651.9h0M224.0 654.0h0M210.4 657.7h0M220.7 658.5h0M231.8 654.0h0M218.7 652.3h0M224.9 650.1h0M217.9 649.5h0M222.7 659.2h0M221.4 657.6h0M225.4 651.3h0M224.2 653.7h0M225.4 650.7h0M232.5 650.8h0M222.5 655.8h0M222.1 655.9h0M222.7 658.3h0M218.0 654.2h0M222.0 652.3h0M218.7 653.6h0M215.9 623.8h0M226.6 623.7h0M222.7 616.8h0M224.3 617.7h0M221.9 623.2h0M230.3 616.6h0M224.0 623.2h0M218.4 624.6h0M215.5 621.5h0M224.2 618.0h0M221.7 624.8h0M226.8 622.4h0M223.5 623.5h0M220.8 622.9h0M218.3 620.6h0M221.1 623.2h0M220.9 620.2h0M218.4 630.0h0M226.5 625.0h0M228.5 625.6h0M223.6 616.3h0M216.7 619.3h0M227.3 615.8h0M223.6 625.3h0M217.5 626.5h0M220.4 617.1h0M224.8 627.0h0M226.9 618.3h0M224.3 625.4h0M221.7 619.6h0M218.4 622.7h0M218.9 618.7h0M221.3 621.2h0M223.2 619.5h0M225.9 615.9h0M216.9 618.2h0M222.3 620.9h0M220.3 625.6h0M222.3 617.7h0M219.1 627.0h0M224.3 626.6h0M222.5 623.3h0M224.4 620.6h0M225.1 619.9h0M220.3 626.9h0M220.3 621.4h0M221.3 618.3h0M226.6 623.8h0M222.0 613.7h0M224.9 623.6h0M229.6 612.5h0M220.7 615.4h0M221.4 621.4h0M225.5 621.3h0M221.8 623.6h0M217.4 627.2h0M223.7 620.6h0M230.5 624.8h0M218.3 615.8h0M227.1 617.7h0M216.9 624.3h0M221.8 623.6h0M220.1 621.6h0M218.8 619.7h0M225.5 616.9h0M221.6 589.0h0M222.9 576.1h0M218.1 588.9h0M198.4 572.2h0M217.2 584.0h0M220.8 591.6h0M228.6 585.5h0M222.1 581.6h0M222.4 585.1h0M227.8 589.2h0M223.5 589.6h0M223.7 595.7h0M218.6 586.5h0M224.5 585.7h0M220.6 585.6h0M227.7 587.2h0M217.6 589.3h0M226.1 591.5h0M230.1 596.0h0M228.1 589.1h0M224.0 597.6h0M223.8 584.0h0M223.6 581.7h0M220.8 596.7h0M221.9 588.9h0M220.2 585.7h0M219.0 584.2h0M217.0 588.2h0M224.5 587.3h0M223.8 589.0h0M226.7 598.8h0M220.6 581.7h0M227.3 590.8h0M220.3 581.3h0M217.2 583.8h0M224.5 591.3h0M220.3 593.2h0M219.9 582.5h0M221.0 589.1h0M224.6 593.5h0M226.6 591.8h0M221.2 590.2h0M227.3 596.9h0M224.1 585.3h0M223.8 586.4h0M215.4 579.0h0M225.9 590.6h0M224.3 586.1h0M221.6 596.1h0M224.4 587.1h0M221.4 586.3h0M220.5 586.8h0M216.4 581.7h0M224.2 593.5h0M214.8 589.9h0M218.5 588.9h0M218.7 590.5h0M223.8 577.2h0M223.0 593.1h0M223.6 590.1h0M229.8 587.3h0M220.4 555.9h0M223.1 558.4h0M226.8 556.4h0M225.0 557.1h0M227.7 555.7h0M218.1 562.8h0M221.5 557.9h0M228.5 558.0h0M223.0 556.1h0M224.8 559.7h0M226.1 555.8h0M224.3 557.2h0M225.1 557.9h0M216.1 559.1h0M221.3 556.7h0M219.0 552.8h0M222.6 555.3h0M223.5 559.2h0M216.3 559.6h0M218.8 556.8h0M222.4 555.0h0M231.0 553.9h0M220.0 556.2h0M220.6 559.7h0M225.5 566.8h0M217.2 557.0h0M217.7 559.2h0M222.9 560.9h0M218.2 561.3h0M225.7 558.2h0M226.4 555.5h0M231.7 563.6h0M219.7 555.2h0M221.3 552.7h0M223.1 555.2h0M220.8 558.6h0M224.1 554.9h0M222.1 549.4h0M221.1 555.2h0M229.7 563.1h0M216.6 555.4h0M220.1 554.2h0M219.4 559.5h0M226.9 558.2h0M225.4 555.2h0M226.9 563.8h0M220.8 553.3h0M228.7 559.8h0M221.7 559.1h0M221.4 559.3h0M221.1 561.8h0M223.8 557.1h0M225.5 551.4h0M223.9 555.0h0M234.2 556.1h0M219.9 563.8h0M229.0 555.9h0M224.8 560.5h0M216.5 560.4h0M229.7 564.4h0M219.1 561.3h0M230.8 556.0h0M221.1 557.1h0M221.1 561.0h0M211.3 553.9h0M220.1 556.9h0M221.3 557.7h0M221.1 554.8h0M227.3 531.2h0M215.7 523.4h0M219.4 529.6h0M222.2 520.2h0M219.1 521.7h0M221.5 523.2h0M223.6 527.6h0M223.8 526.6h0M224.5 523.1h0M223.6 529.8h0M222.0 524.3h0M218.0 528.3h0M224.0 526.2h0M217.2 527.2h0M225.0 525.4h0M220.5 524.6h0M222.3 526.3h0M225.8 522.5h0M229.8 524.1h0M225.8 522.8h0M222.4 530.6h0M223.5 520.4h0M225.5 527.6h0M222.0 520.3h0M225.9 525.2h0M223.8 520.5h0M222.3 521.2h0M213.8 526.9h0M216.3 519.6h0M220.8 530.3h0M223.7 527.1h0M227.4 523.2h0M219.5 526.7h0M224.4 525.8h0M220.9 524.2h0M224.7 529.6h0M225.4 513.3h0M226.1 520.1h0M224.1 523.7h0M233.6 518.1h0M220.7 524.3h0M227.4 517.5h0M225.2 517.9h0M224.6 527.0h0M219.6 525.3h0M218.8 525.1h0M218.7 528.4h0M223.6 532.1h0M229.0 528.7h0M220.8 525.4h0M226.6 528.2h0M226.0 527.2h0M225.2 531.5h0M221.9 524.1h0M226.1 527.7h0M219.5 524.8h0M217.0 528.2h0M223.1 527.3h0M221.3 523.9h0M216.5 523.1h0M215.4 527.4h0M221.1 529.5h0M222.2 522.6h0M229.2 529.8h0M254.0 754.8h0M253.6 749.0h0M254.1 750.2h0M256.1 747.0h0M257.0 745.8h0M254.6 749.3h0M254.9 746.5h0M256.0 754.1h0M253.0 744.4h0M245.6 744.6h0M259.2 749.7h0M257.4 748.0h0M253.6 745.8h0M256.1 745.2h0M253.9 746.6h0M250.3 748.0h0M253.7 752.5h0M258.4 752.3h0M251.3 747.2h0M251.4 749.5h0M256.9 747.5h0M254.0 748.3h0M249.0 746.1h0M261.7 751.6h0M247.4 752.4h0M252.8 750.6h0M253.0 750.0h0M249.3 748.1h0M250.9 741.8h0M256.6 747.8h0M257.3 747.1h0M251.6 750.9h0M253.4 747.9h0M251.5 747.9h0M256.5 743.3h0M252.9 750.2h0M257.2 741.7h0M254.1 752.9h0M254.0 748.9h0M264.3 744.0h0M253.5 747.9h0M250.5 744.9h0M249.1 751.2h0M255.5 749.4h0M254.0 749.8h0M256.4 751.3h0M254.5 752.3h0M258.3 743.3h0M262.4 747.1h0M255.7 748.4h0M255.4 748.8h0M251.1 745.6h0M258.0 752.2h0M258.2 747.2h0M258.7 754.4h0M255.0 752.1h0M252.7 752.2h0M254.2 750.3h0M253.1 743.4h0M251.0 742.9h0M254.5 749.5h0M253.6 745.8h0M250.5 746.1h0M252.7 745.5h0M252.0 753.7h0M253.9 749.9h0M254.3 745.2h0M258.0 742.8h0M254.1 740.8h0M248.2 716.8h0M253.0 715.7h0M256.5 720.8h0M258.0 710.6h0M265.1 721.0h0M257.0 714.0h0M249.2 715.5h0M252.0 715.6h0M260.9 720.5h0M250.5 720.2h0M260.0 712.9h0M248.1 719.2h0M251.7 714.3h0M246.7 712.6h0M255.1 714.4h0M255.3 724.7h0M252.5 723.8h0M253.1 715.2h0M253.8 714.8h0M254.2 716.6h0M258.9 728.1h0M249.5 718.6h0M256.8 717.3h0M252.8 715.2h0M252.8 716.1h0M262.6 719.6h0M259.0 724.2h0M250.8 715.2h0M250.7 715.3h0M247.1 717.4h0M252.8 712.6h0M250.0 719.3h0M255.4 712.8h0M254.6 713.8h0M254.4 713.3h0M252.6 716.4h0M257.3 716.5h0M257.7 716.8h0M250.4 724.4h0M253.5 718.5h0M255.6 712.6h0M264.1 717.3h0M250.5 717.4h0M251.2 719.3h0M251.0 718.3h0M249.0 709.7h0M255.0 711.7h0M259.4 721.7h0M255.5 717.7h0M254.0 716.8h0M249.5 716.2h0M257.9 712.3h0M252.9 719.1h0M250.2 713.4h0M256.1 714.1h0M251.1 719.7h0M249.9 720.3h0M259.2 708.0h0M250.6 687.9h0M255.8 687.1h0M254.9 688.9h0M252.4 681.6h0M257.7 693.0h0M258.2 672.5h0M250.3 691.1h0M254.5 683.1h0M251.8 682.0h0M255.6 683.2h0M254.7 684.3h0M252.8 689.2h0M250.8 688.8h0M253.5 680.5h0M254.6 692.1h0M250.5 680.8h0M251.7 682.2h0M255.3 690.4h0M259.6 677.6h0M254.2 687.9h0M255.6 685.3h0M255.4 688.7h0M247.7 681.7h0M246.5 691.8h0M252.0 679.9h0M246.6 681.3h0M251.6 688.9h0M256.9 684.9h0M256.1 679.4h0M255.6 691.6h0M256.2 685.3h0M253.3 687.1h0M251.4 687.5h0M253.4 677.8h0M256.1 689.9h0M253.4 680.5h0M259.9 687.5h0M256.5 685.3h0M258.8 688.3h0M253.7 686.0h0M251.1 690.4h0M253.8 681.5h0M257.4 677.5h0M250.8 681.6h0M257.5 683.7h0M257.3 692.8h0M245.7 681.0h0M253.1 694.6h0M253.2 688.1h0M253.5 689.7h0M248.3 683.0h0M252.4 686.4h0M253.9 691.1h0M260.9 680.4h0M262.1 686.9h0M247.2 682.4h0M250.2 687.4h0M251.5 682.0h0M254.7 692.5h0M257.0 686.4h0M253.9 675.3h0M257.2 682.5h0M254.0 680.8h0M257.4 679.5h0M257.5 684.1h0M262.0 683.9h0M247.9 696.2h0M250.6 687.1h0M263.8 679.1h0M254.4 682.4h0M258.8 653.1h0M256.3 643.4h0M248.9 651.1h0M255.4 648.6h0M256.5 651.8h0M256.2 658.5h0M251.7 649.8h0M248.0 659.2h0M248.3 650.0h0M260.3 651.2h0M253.5 648.7h0M251.9 648.0h0M251.1 650.5h0M257.7 654.2h0M261.4 646.4h0M252.5 654.7h0M251.3 651.4h0M253.3 646.5h0M255.8 656.3h0M251.8 641.7h0M252.9 648.7h0M257.1 652.7h0M257.4 657.4h0M250.6 662.7h0M254.0 658.2h0M250.3 649.9h0M256.2 654.1h0M251.5 658.3h0M256.0 660.0h0M257.1 653.8h0M252.0 659.2h0M255.3 660.6h0M252.7 645.7h0M260.0 653.5h0M247.4 651.3h0M265.2 659.8h0M255.4 653.8h0M253.7 650.4h0M262.4 653.2h0M255.7 649.5h0M259.7 659.3h0M253.4 651.8h0M255.1 650.9h0M249.5 654.0h0M258.2 651.7h0M250.2 644.0h0M260.2 646.1h0M255.1 653.1h0M248.0 654.5h0M253.2 656.3h0M260.5 647.3h0M253.0 651.6h0M250.1 652.1h0M257.4 645.7h0M255.3 656.9h0M258.0 650.2h0M249.9 616.4h0M255.1 619.0h0M252.0 620.6h0M258.7 619.2h0M247.6 621.0h0M255.6 630.3h0M255.2 614.9h0M250.0 630.9h0M257.4 627.3h0M260.7 624.1h0M252.9 621.9h0M248.1 619.3h0M258.0 617.2h0M256.4 620.0h0M251.2 619.6h0M256.1 623.1h0M249.8 623.1h0M254.1 623.7h0M256.4 628.2h0M257.4 625.9h0M252.7 625.8h0M263.7 617.4h0M245.5 629.0h0M249.8 620.8h0M267.7 624.3h0M250.1 622.8h0M255.3 620.0h0M258.4 621.2h0M251.0 621.6h0M251.6 612.8h0M252.3 626.8h0M256.0 621.1h0M253.7 620.2h0M254.2 619.8h0M256.0 625.3h0M251.1 621.3h0M248.5 613.9h0M260.3 620.6h0M249.7 628.0h0M252.3 627.7h0M257.8 622.6h0M248.1 619.5h0M255.0 617.9h0M257.6 623.5h0M244.1 630.1h0M258.5 620.8h0M256.2 625.0h0M250.6 627.7h0M254.9 618.6h0M255.2 622.2h0M255.1 614.9h0M253.7 618.4h0M253.6 623.8h0M256.0 629.0h0M251.8 625.8h0M254.4 620.5h0M257.8 618.0h0M256.1 620.8h0M243.8 620.6h0M250.6 621.5h0M255.1 620.0h0M259.6 625.3h0M255.1 617.7h0M245.8 620.5h0M250.2 620.7h0M258.7 587.0h0M253.7 591.1h0M259.1 595.1h0M248.5 594.2h0M251.0 584.8h0M249.1 588.5h0M247.9 588.5h0M252.3 583.0h0M253.4 591.8h0M254.6 592.0h0M262.1 592.6h0M256.4 583.0h0M251.7 586.6h0M259.4 581.2h0M253.0 581.2h0M259.0 586.3h0M249.4 594.4h0M254.6 586.8h0M256.0 590.7h0M250.3 589.7h0M252.2 585.9h0M252.8 586.1h0M249.0 586.2h0M252.5 592.2h0M257.3 587.3h0M248.7 588.8h0M245.1 586.8h0M255.5 587.4h0M249.8 602.7h0M257.8 595.9h0M259.1 589.5h0M255.4 580.3h0M252.9 589.6h0M251.1 582.4h0M263.4 590.1h0M245.5 585.7h0M249.8 590.0h0M257.4 587.6h0M255.8 586.4h0M254.1 591.0h0M257.6 590.4h0M251.8 591.4h0M251.9 583.1h0M245.4 587.7h0M253.0 585.3h0M255.1 590.8h0M257.4 596.6h0M251.3 594.0h0M261.0 594.0h0M250.2 591.5h0M254.0 589.3h0M258.2 582.4h0M248.4 583.3h0M258.4 590.4h0M255.6 587.3h0M252.2 588.7h0M250.7 593.0h0M254.2 587.4h0M255.6 590.6h0M256.1 592.5h0M250.6 587.9h0M251.7 593.7h0M256.7 595.9h0M253.8 556.7h0M256.7 556.5h0M256.5 557.7h0M253.2 549.0h0M256.4 552.7h0M252.6 557.8h0M251.4 559.8h0M259.0 557.1h0M258.9 553.0h0M246.0 559.5h0M257.7 555.5h0M256.0 556.0h0M248.9 561.2h0M249.3 561.5h0M256.0 557.3h0M252.3 554.0h0M253.1 557.5h0M254.2 562.9h0M255.3 556.2h0M257.3 565.5h0M250.9 553.3h0M252.6 556.5h0M253.6 559.9h0M250.7 550.9h0M248.8 558.0h0M252.9 560.1h0M250.3 561.4h0M253.1 559.7h0M256.1 559.9h0M248.3 549.0h0M253.3 559.5h0M258.7 561.3h0M258.2 558.3h0M255.2 559.8h0M259.0 557.3h0M257.3 557.9h0M250.8 558.9h0M258.4 563.5h0M252.9 550.2h0M254.0 553.9h0M257.4 553.3h0M251.7 555.4h0M256.2 555.9h0M256.8 557.4h0M254.8 559.1h0M258.6 564.3h0M268.8 558.5h0M254.2 554.6h0M268.5 560.8h0M249.4 559.0h0M249.6 561.3h0M244.6 555.2h0M255.3 557.0h0M244.9 564.1h0M254.0 562.7h0M248.5 556.4h0M260.5 559.4h0M254.4 553.8h0M256.4 555.0h0M262.7 551.7h0M255.9 557.1h0M251.9 556.1h0M252.0 561.6h0M249.5 559.3h0M257.8 559.1h0M255.5 533.9h0M255.0 519.7h0M248.6 522.2h0M257.1 520.4h0M259.1 529.7h0M257.2 522.2h0M261.8 525.5h0M256.4 525.8h0M254.4 535.7h0M254.1 529.6h0M257.6 529.0h0M250.9 521.6h0M252.0 524.6h0M247.4 523.1h0M256.7 525.3h0M249.3 534.0h0M254.2 526.8h0M247.0 522.8h0M245.5 526.4h0M245.8 521.6h0M255.1 527.8h0M257.1 524.0h0M258.2 533.2h0M253.3 522.2h0M254.8 526.9h0M255.5 529.5h0M259.4 526.4h0M254.5 531.1h0M258.6 527.4h0M250.9 525.1h0M255.6 524.9h0M258.0 530.8h0M258.1 527.6h0M252.2 521.4h0M255.0 529.9h0M251.8 523.4h0M256.6 537.7h0M254.1 531.5h0M253.4 523.9h0M255.5 522.7h0M255.2 526.1h0M249.6 524.1h0M254.6 531.0h0M259.6 530.5h0M255.4 527.0h0M256.6 525.8h0M257.6 530.9h0M253.3 532.5h0M250.7 532.0h0M254.5 528.1h0M252.9 528.6h0M252.9 521.0h0M260.7 521.6h0M256.2 524.8h0M250.0 523.7h0M251.6 526.3h0M255.5 528.5h0M250.5 525.3h0M261.4 527.3h0M251.9 528.5h0M259.5 521.7h0M250.3 522.0h0M283.8 749.3h0M283.1 740.1h0M283.0 739.4h0M287.7 747.1h0M287.8 750.3h0M297.0 748.8h0M282.6 753.3h0M287.4 746.6h0M288.7 745.3h0M290.6 740.7h0M283.7 750.2h0M280.0 746.0h0M283.6 747.5h0M289.9 750.1h0M280.5 744.3h0M284.8 757.9h0M287.4 752.9h0M285.8 751.4h0M280.2 746.4h0M288.5 753.1h0M286.6 750.4h0M285.7 744.4h0M288.2 741.2h0M282.9 749.8h0M285.4 751.3h0M290.4 746.3h0M291.4 750.8h0M285.3 751.6h0M290.7 745.2h0M281.0 745.6h0M290.1 750.3h0M284.1 752.5h0M285.4 753.6h0M286.2 741.0h0M286.9 747.4h0M285.4 740.3h0M283.9 743.1h0M286.1 736.2h0M284.6 752.3h0M288.1 747.9h0M286.8 749.5h0M292.6 745.3h0M282.7 744.7h0M286.9 747.2h0M291.4 754.2h0M284.7 749.1h0M287.3 740.9h0M284.1 744.7h0M290.1 754.2h0M279.9 751.5h0M279.8 758.7h0M290.3 745.0h0M283.0 748.7h0M285.2 744.1h0M288.7 745.4h0M287.7 744.7h0M283.2 747.7h0M286.6 750.9h0M289.3 718.1h0M280.3 715.4h0M282.6 718.3h0M292.2 718.7h0M282.0 718.9h0M284.0 710.6h0M283.8 714.6h0M294.1 727.6h0M283.4 719.0h0M287.2 719.4h0M284.7 717.0h0M293.3 717.9h0M289.0 714.2h0M287.2 712.4h0M289.6 721.0h0M284.2 721.7h0M288.8 718.7h0M283.8 718.4h0M285.1 713.9h0M282.9 702.3h0M282.0 708.1h0M289.3 719.5h0M284.0 715.7h0M285.2 714.0h0M282.7 721.1h0M290.4 715.7h0M295.1 720.8h0M286.7 709.1h0M279.6 720.4h0M282.2 718.7h0M280.1 718.3h0M285.6 718.5h0M287.2 718.8h0M280.6 722.8h0M285.3 720.7h0M292.9 718.8h0M291.7 716.4h0M288.0 716.5h0M287.5 718.3h0M287.9 715.5h0M288.2 719.1h0M282.5 720.6h0M288.6 716.5h0M277.4 709.6h0M282.4 711.2h0M284.2 711.4h0M288.1 712.4h0M287.0 718.9h0M287.6 715.1h0M287.3 717.3h0M282.1 715.4h0M282.4 717.7h0M287.5 716.1h0M287.7 719.7h0M291.6 723.7h0M278.3 721.2h0M289.4 718.9h0M288.7 709.9h0M286.9 713.1h0M284.3 709.3h0M284.0 711.7h0M288.3 715.1h0M281.8 715.0h0M289.9 714.5h0M289.4 697.3h0M291.1 689.6h0M287.8 682.6h0M288.7 679.5h0M286.6 678.6h0M281.8 693.8h0M278.1 686.8h0M283.7 687.5h0M280.1 683.2h0M289.2 692.6h0M283.9 684.8h0M288.0 682.3h0M283.8 678.4h0M281.2 689.0h0M291.6 686.8h0M288.5 682.2h0M286.6 684.0h0M285.5 685.9h0M288.1 687.1h0M283.8 683.8h0M287.2 686.4h0M293.8 684.8h0M291.3 685.4h0M289.2 688.0h0M290.1 687.2h0M283.6 688.8h0M282.2 681.4h0M283.2 685.6h0M292.6 681.4h0M285.4 681.4h0M288.3 684.0h0M294.5 684.5h0M290.0 678.6h0M286.0 691.1h0M285.8 681.9h0M288.3 676.6h0M284.5 687.6h0M289.8 685.2h0M295.5 688.6h0M291.5 681.8h0M283.4 687.6h0M284.2 683.8h0M283.6 684.9h0M284.8 690.5h0M285.7 679.3h0M280.5 687.9h0M274.6 680.0h0M280.3 685.5h0M283.7 689.9h0M284.1 682.9h0M283.0 689.9h0M282.6 677.3h0M286.2 685.7h0M280.9 687.5h0M287.0 676.7h0M288.4 684.6h0M292.0 688.5h0M285.5 690.2h0M286.4 681.6h0M292.7 680.6h0M284.8 684.0h0M286.4 683.7h0M285.4 684.5h0M281.3 651.8h0M283.4 651.8h0M284.5 654.8h0M284.8 654.2h0M287.5 655.2h0M280.6 649.0h0M292.0 652.2h0M286.0 651.8h0M286.0 652.5h0M289.2 651.3h0M287.8 654.1h0M288.3 657.6h0M282.3 659.9h0M281.9 652.0h0M293.3 655.6h0M290.8 647.2h0M283.0 656.0h0M284.5 654.1h0M286.3 653.7h0M300.8 651.7h0M293.1 658.6h0M286.4 660.4h0M291.3 649.5h0M290.2 653.7h0M285.3 647.9h0M289.3 659.3h0M290.7 646.3h0M285.6 649.0h0M281.7 653.8h0M284.9 649.7h0M280.8 655.7h0M275.8 649.3h0M280.3 651.8h0M284.8 653.0h0M291.2 656.3h0M281.9 657.2h0M284.1 653.9h0M287.4 652.9h0M297.9 659.0h0M284.3 659.0h0M287.6 655.6h0M290.9 653.7h0M283.6 656.8h0M287.5 652.5h0M287.2 650.1h0M284.8 645.0h0M285.8 649.6h0M280.6 651.0h0M290.7 652.8h0M284.7 647.0h0M285.2 649.5h0M277.4 648.5h0M282.3 651.5h0M275.6 652.9h0M282.6 653.8h0M288.4 650.8h0M283.6 656.5h0M283.9 653.8h0M285.5 656.7h0M287.6 654.1h0M284.8 622.5h0M289.1 622.3h0M283.1 622.7h0M283.7 621.0h0M285.6 621.6h0M288.6 619.7h0M283.0 623.5h0M281.6 622.4h0M290.1 622.5h0M280.9 621.2h0M283.5 627.8h0M287.0 616.9h0M291.5 622.5h0M283.2 625.2h0M287.6 620.2h0M283.8 621.3h0M283.8 616.5h0M283.7 615.3h0M283.7 619.3h0M287.7 615.6h0M286.7 624.5h0M284.4 619.9h0M283.9 620.5h0M281.8 620.2h0M291.3 620.6h0M281.1 623.0h0M289.4 618.4h0M279.1 624.0h0M296.9 620.6h0M285.5 623.4h0M285.2 616.8h0M282.9 623.2h0M281.6 624.4h0M287.2 620.6h0M284.7 624.7h0M285.1 620.5h0M293.4 618.1h0M289.8 624.3h0M287.4 617.8h0M285.7 621.8h0M289.7 620.9h0M291.2 627.6h0M284.8 621.5h0M292.9 621.2h0M285.6 621.5h0M289.2 618.7h0M287.5 623.6h0M290.9 629.6h0M291.9 621.1h0M281.5 625.6h0M285.2 627.1h0M287.1 620.8h0M295.1 620.7h0M287.0 618.6h0M284.5 627.1h0M294.5 616.4h0M288.9 623.7h0M283.4 621.8h0M285.2 594.5h0M286.7 584.8h0M285.4 588.9h0M288.8 587.6h0M283.8 592.6h0M286.1 586.6h0M292.6 588.7h0M289.1 586.8h0M288.7 588.4h0M283.9 584.8h0M283.8 594.7h0M284.4 587.3h0M288.3 584.7h0M282.9 589.5h0M293.3 590.5h0M288.2 591.2h0M281.4 592.3h0M286.1 587.0h0M290.2 589.9h0M291.0 592.6h0M285.1 590.9h0M288.1 591.3h0M287.0 592.5h0M278.3 582.7h0M282.3 593.0h0M290.4 583.2h0M286.7 590.8h0M286.9 585.6h0M278.3 582.6h0M286.5 593.0h0M283.4 589.8h0M291.2 589.6h0M286.7 587.4h0M281.0 597.6h0M290.9 589.7h0M275.8 593.4h0M286.0 590.1h0M282.1 588.3h0M287.2 588.3h0M286.5 595.8h0M285.1 596.5h0M293.1 590.1h0M293.7 585.1h0M293.4 586.8h0M288.9 589.4h0M284.4 592.5h0M299.9 582.9h0M288.1 588.4h0M286.6 586.8h0M285.3 584.8h0M277.8 589.3h0M288.4 597.4h0M280.4 588.1h0M286.3 582.2h0M280.2 583.0h0M281.0 597.0h0M291.3 587.9h0M285.5 590.1h0M290.2 587.6h0M283.9 588.3h0M277.0 580.4h0M291.1 591.3h0M286.6 588.3h0M286.9 588.9h0M288.1 581.5h0M280.4 588.7h0M282.4 587.1h0M294.4 576.4h0M283.1 589.3h0M283.4 560.7h0M285.0 559.7h0M288.0 562.1h0M285.6 552.1h0M286.5 561.1h0M290.3 543.4h0M283.0 557.2h0M286.6 553.0h0M288.3 558.5h0M288.1 555.2h0M285.2 558.9h0M284.7 554.1h0M281.3 556.5h0M283.3 550.1h0M279.0 554.1h0M284.6 557.0h0M279.0 553.0h0M286.7 568.3h0M284.8 554.9h0M279.6 554.9h0M283.9 553.6h0M290.3 561.6h0M282.1 553.9h0M285.1 555.6h0M286.7 554.7h0M288.2 559.0h0M279.9 557.6h0M286.2 554.1h0M289.8 559.9h0M282.7 555.8h0M286.3 553.5h0M285.0 555.1h0M288.4 559.3h0M282.5 557.4h0M285.2 563.9h0M286.8 560.2h0M281.7 555.2h0M287.3 559.2h0M284.3 562.0h0M290.6 562.1h0M285.7 558.9h0M285.1 563.5h0M288.0 557.2h0M286.9 562.4h0M289.2 560.6h0M281.6 560.9h0M284.0 564.7h0M283.7 557.9h0M291.5 550.8h0M285.6 557.6h0M292.9 560.4h0M281.8 559.9h0M295.8 555.6h0M290.6 555.3h0M286.3 556.3h0M287.1 556.2h0M294.5 556.4h0M287.5 556.9h0M286.7 556.4h0M288.9 561.2h0M279.4 557.6h0M271.2 565.4h0M286.1 559.5h0M287.7 556.6h0M290.5 524.6h0M279.8 524.0h0M284.8 525.2h0M286.3 524.6h0M291.1 525.6h0M283.3 524.3h0M282.4 518.9h0M290.4 521.0h0M276.9 528.8h0M289.7 521.9h0M286.7 523.4h0M289.6 523.6h0M287.8 530.7h0M286.7 517.7h0M284.0 518.8h0M289.4 524.6h0M287.1 522.5h0M281.6 523.9h0M280.3 533.5h0M290.2 524.6h0M282.9 518.5h0M292.7 523.4h0M291.8 526.5h0M279.9 517.3h0M289.9 532.9h0M287.1 521.5h0M284.2 522.7h0M285.9 525.9h0M280.8 526.6h0M289.5 528.5h0M284.3 528.3h0M292.4 528.4h0M282.8 522.9h0M288.7 537.5h0M286.3 525.3h0M287.6 524.8h0M283.4 526.7h0M289.2 527.6h0M289.4 524.0h0M288.0 527.0h0M281.3 519.7h0M286.5 529.9h0M287.4 526.1h0M289.2 531.3h0M284.2 524.9h0M292.2 534.7h0M279.6 520.9h0M279.5 519.1h0M284.2 524.8h0M281.3 523.9h0M283.9 521.3h0M291.6 529.2h0M292.4 516.9h0M286.7 528.7h0M285.9 522.4h0M289.9 524.3h0M284.0 525.6h0M294.7 525.4h0M296.9 525.5h0M277.7 526.1h0M290.4 523.8h0M286.8 523.4h0M293.3 519.9h0M318.5 747.3h0M315.3 746.3h0M317.7 749.5h0M314.7 750.7h0M323.0 746.3h0M316.9 749.8h0M320.1 751.0h0M313.6 749.1h0M313.8 746.2h0M321.0 748.2h0M320.6 747.8h0M318.0 751.5h0M325.7 743.5h0M315.6 750.6h0M317.8 749.8h0M314.2 749.7h0M314.6 747.2h0M315.1 748.1h0M321.5 750.9h0M315.9 748.4h0M315.1 752.5h0M321.4 751.2h0M317.3 744.0h0M316.9 747.9h0M314.2 746.7h0M320.5 749.4h0M321.9 756.4h0M315.6 748.4h0M324.7 753.8h0M317.8 752.0h0M322.8 751.5h0M317.7 749.6h0M312.0 754.4h0M312.3 750.5h0M322.2 747.9h0M321.8 749.6h0M321.4 744.8h0M321.9 747.0h0M317.0 746.4h0M319.6 754.7h0M316.7 746.7h0M308.5 747.2h0M317.7 738.7h0M315.1 745.6h0M316.7 751.3h0M322.6 746.8h0M316.3 750.9h0M313.5 748.7h0M318.8 741.0h0M314.9 735.2h0M320.1 743.5h0M320.0 749.2h0M315.1 750.9h0M315.9 750.0h0M321.1 746.9h0M316.7 745.9h0M314.1 748.5h0M318.8 751.9h0M317.4 751.9h0M315.5 745.1h0M313.1 739.0h0M323.9 761.0h0M318.3 747.4h0M316.0 747.3h0M315.6 748.2h0M320.7 749.1h0M319.4 747.2h0M320.4 750.3h0M319.8 750.9h0M314.8 748.4h0M314.6 749.5h0M314.2 724.6h0M323.1 710.1h0M312.5 720.5h0M317.4 714.2h0M315.3 715.7h0M321.2 708.8h0M320.2 722.3h0M314.5 722.9h0M319.1 715.3h0M319.8 711.7h0M323.3 710.6h0M319.6 716.4h0M318.2 717.9h0M314.0 720.4h0M319.3 721.6h0M316.6 719.0h0M319.4 716.4h0M324.5 718.1h0M320.5 718.3h0M318.3 725.3h0M318.5 714.7h0M319.9 718.4h0M313.8 714.5h0M320.3 730.3h0M317.4 714.0h0M313.2 707.8h0M318.4 722.3h0M316.9 712.3h0M313.9 717.1h0M314.7 712.5h0M317.6 716.5h0M308.1 719.8h0M318.3 714.5h0M317.1 717.2h0M322.6 720.8h0M321.6 721.7h0M314.4 714.7h0M312.4 719.1h0M321.9 714.3h0M320.5 713.2h0M318.7 712.8h0M314.9 730.9h0M317.3 720.2h0M319.0 710.2h0M315.5 713.9h0M314.3 715.6h0M322.1 718.0h0M319.5 718.2h0M320.7 719.5h0M320.8 722.1h0M323.9 722.0h0M316.1 717.4h0M313.2 722.6h0M326.2 706.4h0M322.4 715.8h0M322.6 710.3h0M313.7 715.2h0M308.7 727.1h0M318.9 688.1h0M319.5 684.8h0M322.5 684.5h0M320.7 685.5h0M315.7 691.3h0M324.3 689.2h0M325.2 686.5h0M321.0 686.8h0M318.9 689.7h0M316.7 682.8h0M316.4 683.4h0M324.1 682.3h0M316.7 684.6h0M312.8 674.6h0M317.1 683.4h0M321.1 686.7h0M319.5 687.5h0M321.1 689.1h0M323.0 691.2h0M322.8 685.0h0M309.6 681.3h0M311.9 682.4h0M315.7 682.8h0M320.2 685.5h0M322.3 687.6h0M314.9 680.7h0M319.9 683.9h0M317.2 686.7h0M320.4 684.5h0M323.4 686.1h0M309.8 683.4h0M316.1 682.9h0M321.3 684.5h0M318.4 685.7h0M317.0 687.0h0M318.5 688.0h0M318.6 689.4h0M316.3 684.7h0M320.0 686.9h0M316.6 681.1h0M303.8 677.8h0M313.7 683.4h0M319.2 684.4h0M319.4 684.2h0M314.3 683.4h0M319.9 684.4h0M320.9 686.0h0M315.0 689.0h0M324.8 686.2h0M313.6 687.4h0M319.3 685.2h0M318.1 669.4h0M312.2 686.7h0M319.2 685.5h0M312.9 684.2h0M317.5 687.3h0M313.6 685.8h0M317.8 683.3h0M319.2 688.3h0M319.2 684.9h0M314.4 684.8h0M311.4 681.7h0M316.7 690.2h0M313.4 637.2h0M319.7 655.0h0M312.7 651.4h0M317.6 650.7h0M319.9 661.0h0M323.4 651.6h0M317.7 653.9h0M312.6 651.5h0M315.5 652.8h0M320.1 651.4h0M315.0 657.5h0M315.4 650.5h0M315.1 655.4h0M316.5 650.1h0M321.6 651.7h0M318.1 652.6h0M320.7 650.7h0M311.1 648.7h0M315.6 655.5h0M309.6 648.9h0M313.3 647.2h0M320.7 655.2h0M321.7 650.4h0M323.4 647.9h0M324.3 659.7h0M320.1 647.9h0M315.7 650.6h0M324.2 651.6h0M313.5 656.6h0M310.9 656.7h0M324.2 653.6h0M318.7 652.8h0M320.9 643.7h0M318.3 651.1h0M315.3 653.9h0M327.1 642.8h0M312.7 660.1h0M319.1 659.8h0M320.6 650.1h0M317.6 656.5h0M317.4 659.4h0M321.9 655.5h0M313.6 658.3h0M318.9 654.3h0M316.6 651.5h0M326.7 654.6h0M314.0 657.1h0M324.7 655.0h0M320.1 651.0h0M310.4 649.6h0M312.8 650.8h0M315.7 648.5h0M316.0 648.8h0M330.1 652.4h0M322.3 651.6h0M323.4 620.6h0M315.1 616.7h0M320.6 617.8h0M318.0 621.7h0M311.8 621.7h0M311.4 623.8h0M315.2 617.5h0M321.0 620.2h0M321.5 619.2h0M315.2 621.1h0M315.5 623.7h0M320.5 621.2h0M315.0 621.1h0M318.8 627.4h0M314.2 619.9h0M317.1 620.2h0M321.7 616.9h0M316.8 627.5h0M313.4 625.2h0M319.0 625.1h0M318.7 615.6h0M319.5 613.8h0M316.8 623.7h0M314.7 623.4h0M309.8 617.9h0M317.3 629.9h0M320.0 616.6h0M315.0 631.1h0M320.4 624.7h0M318.9 619.8h0M309.2 617.7h0M316.0 605.4h0M318.3 624.3h0M314.1 619.6h0M316.4 621.2h0M323.9 617.3h0M314.4 615.1h0M315.6 624.5h0M314.8 616.4h0M325.2 613.3h0M317.1 619.7h0M321.5 622.0h0M315.7 618.5h0M319.7 617.4h0M321.7 617.2h0M312.2 623.2h0M318.7 625.5h0M317.8 621.5h0M318.0 620.1h0M314.9 623.0h0M327.3 618.2h0M319.6 617.6h0M321.3 620.4h0M316.4 625.8h0M323.0 615.1h0M317.4 620.3h0M324.3 624.9h0M325.1 624.4h0M319.5 625.3h0M313.8 621.8h0M319.6 620.1h0M325.8 619.3h0M323.5 620.1h0M308.5 627.8h0M318.7 624.8h0M316.2 612.6h0M318.7 590.2h0M317.8 584.2h0M318.8 587.7h0M324.6 594.4h0M314.3 587.2h0M327.3 586.2h0M327.5 593.4h0M314.9 591.8h0M316.1 591.4h0M313.7 596.7h0M311.5 586.8h0M326.4 589.4h0M317.4 587.0h0M318.4 588.5h0M318.7 587.1h0M326.2 584.0h0M311.0 589.5h0M318.7 591.6h0M312.7 584.3h0M327.1 584.8h0M316.3 588.5h0M318.1 576.8h0M313.3 593.9h0M311.6 596.4h0M327.6 583.2h0M318.9 590.3h0M317.8 587.2h0M319.0 588.3h0M318.8 582.8h0M320.8 586.8h0M317.2 588.7h0M313.8 588.9h0M322.6 594.1h0M307.1 590.0h0M323.6 591.1h0M312.5 585.0h0M321.3 585.3h0M319.8 586.1h0M319.7 586.2h0M328.6 594.2h0M308.5 585.5h0M314.0 589.0h0M312.4 594.0h0M326.0 592.7h0M318.8 597.5h0M307.2 595.1h0M317.9 586.9h0M321.4 595.1h0M320.1 588.8h0M323.3 591.3h0M315.6 597.0h0M323.3 593.9h0M319.5 585.4h0M313.6 591.0h0M314.9 584.6h0M316.2 587.9h0M319.2 586.5h0M317.5 590.3h0M320.3 591.8h0M324.2 593.2h0M321.5 578.8h0M318.0 585.3h0M320.9 588.3h0M319.2 586.3h0M315.4 559.7h0M318.1 559.3h0M320.3 548.3h0M317.9 559.2h0M310.7 555.7h0M316.5 563.7h0M325.4 553.6h0M319.5 560.8h0M315.3 557.3h0M317.7 552.9h0M320.6 558.4h0M307.9 557.6h0M318.5 556.5h0M322.9 559.0h0M316.2 559.3h0M319.0 563.2h0M314.8 555.8h0M316.1 550.7h0M319.9 555.4h0M323.2 563.0h0M331.5 542.9h0M313.5 555.5h0M316.9 561.9h0M323.1 557.8h0M314.6 558.3h0M322.7 556.6h0M318.0 556.7h0M322.8 556.8h0M309.6 553.8h0M316.6 564.6h0M315.8 559.7h0M327.7 564.8h0M314.0 549.6h0M323.1 555.9h0M307.1 558.5h0M315.6 564.8h0M315.3 560.3h0M315.1 561.1h0M320.5 560.5h0M316.4 557.7h0M319.2 558.0h0M316.3 559.1h0M320.4 557.5h0M321.4 556.8h0M317.1 556.5h0M320.3 550.9h0M313.2 556.6h0M321.4 551.8h0M311.9 561.6h0M322.7 555.5h0M317.8 553.9h0M319.9 556.6h0M314.1 554.5h0M317.1 558.1h0M323.2 555.2h0M311.2 553.8h0M312.7 555.3h0M319.0 558.8h0M317.2 560.2h0M318.3 556.3h0M315.4 557.2h0M321.5 561.4h0M311.8 560.0h0M324.0 559.7h0M315.8 559.7h0M318.7 558.5h0M318.1 556.8h0M321.7 556.4h0M316.4 530.5h0M319.1 521.5h0M316.2 530.9h0M323.3 526.9h0M316.9 523.2h0M313.8 518.4h0M316.5 523.4h0M316.8 524.0h0M318.6 520.7h0M318.0 523.3h0M311.7 523.7h0M310.8 523.2h0M317.3 526.4h0M309.4 523.0h0M323.0 518.4h0M323.1 522.2h0M314.5 524.6h0M313.2 529.1h0M320.3 522.4h0M316.9 527.8h0M313.8 523.3h0M314.8 518.4h0M310.7 524.7h0M316.0 529.1h0M320.9 522.7h0M314.9 530.2h0M323.5 529.2h0M320.2 527.9h0M321.4 525.5h0M313.6 525.7h0M314.6 529.3h0M316.1 531.1h0M318.4 527.4h0M320.1 523.3h0M317.8 527.9h0M319.7 521.9h0M319.2 530.7h0M321.0 525.6h0M321.9 520.6h0M311.5 527.9h0M317.7 527.3h0M319.1 524.6h0M314.7 525.4h0M316.1 522.0h0M324.8 523.1h0M315.6 522.7h0M310.3 524.0h0M322.1 527.4h0M324.0 542.4h0M317.4 524.5h0M313.4 523.7h0M321.7 531.4h0M318.9 513.5h0M316.1 522.5h0M321.0 524.0h0M321.5 524.9h0M317.9 520.8h0M318.3 526.1h0M322.9 518.8h0M310.4 527.6h0M347.6 739.9h0M354.2 746.7h0M350.7 746.8h0M347.4 746.1h0M348.6 750.5h0M344.0 753.8h0M348.1 747.8h0M349.4 748.2h0M347.5 749.1h0M355.3 748.3h0M348.1 741.6h0M358.3 754.3h0M351.1 747.3h0M347.4 751.8h0M349.3 751.3h0M349.8 743.0h0M352.2 746.8h0M350.4 740.1h0M344.1 751.5h0M350.4 743.3h0M345.9 748.4h0M356.8 750.1h0M346.6 743.5h0M352.9 753.2h0M351.6 751.2h0M355.4 746.5h0M349.5 747.4h0M348.1 752.3h0M349.2 754.8h0M346.9 749.8h0M344.4 746.6h0M347.6 753.9h0M355.0 742.3h0M356.0 753.6h0M350.9 737.4h0M350.3 741.8h0M345.5 747.0h0M353.6 747.7h0M344.5 751.3h0M349.5 750.4h0M346.2 753.3h0M349.9 753.3h0M351.0 747.2h0M345.0 745.6h0M348.6 749.3h0M351.1 750.3h0M354.2 753.1h0M348.4 747.2h0M348.0 748.8h0M347.8 748.9h0M350.9 753.5h0M355.9 742.3h0M344.7 755.3h0M353.2 745.7h0M342.0 762.0h0M349.0 745.9h0M350.0 750.4h0M348.2 746.7h0M341.5 735.2h0M353.0 718.2h0M355.3 717.2h0M345.5 714.7h0M354.6 716.0h0M344.9 717.5h0M350.2 720.6h0M352.0 712.4h0M352.2 718.2h0M342.4 713.5h0M357.4 718.5h0M347.2 716.2h0M354.2 716.3h0M349.8 721.2h0M350.6 722.5h0M349.4 715.5h0M346.4 720.6h0M347.4 715.4h0M354.5 719.3h0M353.1 713.1h0M343.7 715.2h0M357.7 718.0h0M347.4 711.9h0M348.8 712.0h0M347.0 717.7h0M349.3 716.8h0M351.1 717.3h0M349.8 720.8h0M347.7 717.8h0M357.5 715.6h0M345.7 715.4h0M350.1 717.3h0M346.8 714.8h0M351.6 723.4h0M351.5 716.9h0M348.5 714.3h0M344.9 720.5h0M342.1 719.2h0M348.4 719.1h0M349.1 715.1h0M347.0 710.4h0M349.3 714.4h0M350.0 718.7h0M354.4 721.9h0M347.6 714.6h0M350.5 718.2h0M355.7 710.3h0M342.8 713.6h0M342.9 718.0h0M348.2 720.5h0M352.6 718.0h0M350.2 719.0h0M357.9 717.3h0M346.8 715.9h0M347.1 721.8h0M354.3 720.7h0M347.1 715.3h0M344.3 686.6h0M347.4 682.8h0M346.8 675.9h0M352.6 680.1h0M351.4 687.3h0M352.0 683.6h0M359.2 697.8h0M351.0 682.6h0M350.1 682.2h0M346.4 685.1h0M348.2 685.4h0M351.5 681.9h0M347.5 680.6h0M344.0 684.9h0M353.9 686.7h0M353.8 676.9h0M356.3 686.0h0M353.6 686.0h0M351.3 681.7h0M345.1 681.3h0M346.8 689.1h0M353.2 683.8h0M341.5 678.8h0M350.6 686.5h0M349.6 686.8h0M345.3 687.0h0M348.4 686.7h0M348.9 683.1h0M351.4 691.2h0M351.4 683.0h0M346.9 682.4h0M357.4 683.6h0M354.4 690.2h0M352.7 681.9h0M350.3 682.9h0M353.0 683.7h0M360.0 683.1h0M351.3 685.9h0M350.9 684.2h0M349.5 683.5h0M346.8 683.2h0M352.4 681.6h0M346.4 686.3h0M354.5 684.3h0M347.2 686.0h0M352.8 681.0h0M350.8 686.5h0M354.3 677.6h0M347.1 682.4h0M355.2 690.0h0M347.8 688.6h0M347.6 688.2h0M352.2 687.1h0M349.4 680.4h0M350.6 684.0h0M356.4 682.8h0M348.9 689.9h0M351.7 689.3h0M354.3 685.4h0M347.5 681.6h0M346.0 686.3h0M348.7 691.3h0M352.0 685.5h0M351.5 680.8h0M356.5 681.2h0M345.0 653.6h0M352.5 659.5h0M358.5 650.6h0M346.0 653.7h0M345.3 656.1h0M353.5 650.3h0M351.6 657.2h0M350.5 659.5h0M354.6 654.5h0M352.1 652.1h0M349.0 654.3h0M347.5 649.5h0M352.0 660.6h0M339.0 653.2h0M345.2 651.0h0M346.3 658.1h0M353.7 646.9h0M345.4 652.2h0M344.0 654.9h0M342.7 653.6h0M352.3 653.7h0M362.1 654.1h0M355.2 650.4h0M351.5 653.7h0M352.2 648.9h0M350.1 647.1h0M346.9 651.9h0M355.3 652.7h0M352.3 652.1h0M353.4 656.8h0M346.4 645.0h0M353.4 643.2h0M348.0 655.2h0M351.5 658.3h0M356.6 660.8h0M350.5 656.7h0M348.2 647.9h0M357.3 656.9h0M359.2 650.9h0M341.2 653.9h0M344.0 660.5h0M349.9 650.1h0M348.1 648.2h0M353.1 643.9h0M349.7 658.0h0M359.6 655.8h0M358.9 661.0h0M344.6 652.9h0M348.8 648.6h0M352.5 657.6h0M336.6 653.2h0M353.9 646.6h0M349.5 644.0h0M341.2 665.2h0M339.7 645.1h0M356.3 658.4h0M356.3 654.6h0M345.9 655.0h0M349.5 656.2h0M345.7 653.9h0M350.8 650.8h0M349.5 652.6h0M348.4 650.7h0M346.6 661.8h0M349.2 648.0h0M349.8 651.8h0M348.6 662.2h0M351.7 649.5h0M341.1 654.2h0M348.8 652.8h0M355.8 652.1h0M347.6 625.8h0M350.1 630.9h0M339.6 609.5h0M345.8 622.4h0M351.4 621.0h0M351.2 629.5h0M355.5 619.3h0M347.0 617.9h0M352.9 627.5h0M347.9 614.4h0M350.4 624.8h0M351.8 614.9h0M353.6 623.1h0M352.2 625.0h0M349.0 625.4h0M356.5 616.6h0M354.9 618.2h0M342.3 614.8h0M344.4 626.0h0M345.0 627.7h0M354.7 623.0h0M340.4 629.7h0M338.2 625.0h0M341.6 624.1h0M346.9 614.4h0M349.2 620.1h0M350.0 613.2h0M351.6 625.7h0M358.0 625.6h0M360.3 622.6h0M346.1 622.3h0M340.1 620.6h0M353.4 622.7h0M346.5 612.0h0M352.7 622.0h0M351.6 613.1h0M355.9 622.3h0M350.7 625.8h0M346.9 627.1h0M351.2 616.8h0M344.6 623.2h0M350.4 624.2h0M359.9 620.8h0M347.8 621.1h0M350.5 624.2h0M353.0 640.6h0M348.7 618.1h0M355.4 613.4h0M353.9 623.8h0M349.9 613.4h0M357.0 627.5h0M345.0 618.6h0M342.5 624.1h0M350.0 624.2h0M343.2 631.4h0M347.9 625.1h0M347.5 624.2h0M347.3 615.0h0M347.4 623.0h0M354.9 625.2h0M349.6 619.1h0M348.7 622.5h0M348.4 622.0h0M342.7 613.4h0M351.3 617.8h0M354.8 625.1h0M350.1 618.2h0M352.8 587.8h0M352.2 591.8h0M349.1 595.4h0M350.3 585.8h0M349.4 586.4h0M349.1 593.9h0M347.9 591.9h0M346.6 588.2h0M350.9 590.9h0M349.3 582.5h0M350.6 585.6h0M345.7 591.0h0M347.2 593.1h0M352.8 596.5h0M346.6 594.7h0M351.1 587.0h0M350.2 589.5h0M352.5 591.6h0M353.2 584.9h0M354.9 584.6h0M349.2 588.8h0M343.9 591.5h0M358.7 592.2h0M352.6 599.1h0M345.6 593.0h0M350.4 593.6h0M344.3 584.3h0M351.6 581.7h0M351.4 585.0h0M352.1 588.7h0M351.8 589.2h0M345.3 586.2h0M348.7 589.1h0M348.4 590.9h0M348.5 590.9h0M353.7 598.8h0M349.2 587.1h0M347.0 590.1h0M346.2 593.3h0M348.9 593.1h0M350.8 590.8h0M345.2 593.1h0M349.9 587.9h0M353.4 588.1h0M349.4 592.2h0M346.0 589.6h0M348.6 587.6h0M348.9 585.6h0M347.9 585.7h0M349.2 594.0h0M348.0 587.5h0M349.5 593.7h0M343.9 589.2h0M353.9 585.5h0M344.4 597.0h0M354.6 591.9h0M348.3 590.7h0M353.7 592.3h0M359.9 593.2h0M349.0 581.2h0M349.1 589.0h0M354.6 591.3h0M345.9 589.0h0M346.4 594.7h0M346.0 586.0h0M356.9 591.1h0M351.7 591.0h0M346.6 595.4h0M352.1 591.1h0M349.5 591.6h0M348.6 556.8h0M348.7 549.7h0M340.5 558.0h0M350.3 556.4h0M349.0 562.2h0M355.0 557.2h0M353.9 561.4h0M346.8 556.7h0M347.5 564.1h0M350.0 558.2h0M345.2 557.2h0M347.2 554.6h0M350.6 551.6h0M356.5 555.9h0M351.0 562.3h0M351.6 556.3h0M350.2 554.5h0M351.8 557.1h0M353.4 555.1h0M349.3 563.6h0M357.4 557.9h0M351.7 557.2h0M353.0 556.1h0M348.9 550.0h0M352.0 558.8h0M348.8 552.3h0M349.4 552.1h0M347.0 561.0h0M349.1 555.7h0M348.6 562.7h0M354.5 558.0h0M353.4 557.3h0M349.6 559.1h0M354.9 554.3h0M347.1 557.5h0M346.9 554.4h0M350.4 557.4h0M347.8 555.1h0M355.8 550.4h0M352.8 559.5h0M341.6 553.2h0M351.0 556.9h0M336.6 554.5h0M353.7 553.6h0M354.1 555.8h0M347.1 555.3h0M359.0 555.8h0M348.7 557.4h0M351.5 556.8h0M351.6 562.3h0M340.2 555.2h0M349.2 550.4h0M344.3 548.6h0M352.7 551.1h0M350.9 554.1h0M348.5 555.1h0M345.4 553.1h0M348.6 522.3h0M351.7 528.7h0M351.4 526.5h0M351.8 524.0h0M348.2 516.5h0M350.3 522.1h0M351.8 524.6h0M357.6 526.1h0M352.9 527.7h0M348.3 526.0h0M353.4 526.1h0M352.1 518.7h0M347.5 526.6h0M351.2 527.1h0M344.7 524.5h0M355.3 521.2h0M350.2 527.6h0M355.1 522.4h0M341.0 521.7h0M350.3 528.9h0M342.7 517.3h0M363.9 520.3h0M351.6 516.2h0M351.6 526.5h0M349.6 527.4h0M348.8 524.8h0M351.9 523.3h0M348.0 523.6h0M348.9 526.9h0M348.1 524.1h0M348.2 520.1h0M348.8 531.0h0M344.0 522.8h0M350.2 523.2h0M350.5 524.1h0M350.7 522.6h0M348.7 521.5h0M353.3 525.7h0M350.1 527.4h0M350.1 524.1h0M352.2 525.2h0M348.6 530.2h0M348.7 525.7h0M342.9 527.8h0M356.7 519.5h0M338.5 519.8h0M350.6 528.9h0M350.8 523.0h0M353.5 521.9h0M355.4 524.5h0M351.2 522.7h0M354.9 530.2h0M351.2 527.7h0M346.8 526.7h0M351.7 522.9h0M378.7 749.6h0M385.1 746.5h0M384.0 746.7h0M373.4 752.0h0M380.7 751.7h0M383.9 747.5h0M390.0 747.5h0M385.4 748.4h0M378.7 753.7h0M382.1 750.4h0M372.8 750.9h0M380.3 751.1h0M387.6 749.3h0M378.1 753.4h0M382.7 749.8h0M378.7 745.6h0M379.0 747.5h0M385.7 748.0h0M386.0 755.7h0M379.8 749.3h0M386.0 746.9h0M382.8 750.8h0M380.8 745.9h0M384.7 767.2h0M379.7 748.4h0M385.4 748.6h0M373.9 741.7h0M380.0 750.7h0M383.5 747.9h0M392.3 743.7h0M386.2 750.3h0M372.5 744.5h0M385.9 747.7h0M382.0 750.6h0M386.9 749.6h0M378.1 744.5h0M386.0 758.4h0M392.0 750.2h0M379.8 759.4h0M380.1 743.5h0M386.5 743.8h0M376.5 750.6h0M388.7 742.5h0M384.9 750.5h0M384.5 747.2h0M379.6 750.8h0M382.5 749.3h0M384.5 747.7h0M378.5 747.8h0M390.0 753.1h0M380.4 751.2h0M383.9 748.1h0M375.5 754.6h0M377.5 744.4h0M382.5 747.6h0M386.1 749.1h0M383.6 748.7h0M385.6 749.7h0M381.9 749.3h0M376.8 715.4h0M386.6 713.9h0M376.8 711.4h0M383.6 714.1h0M381.8 716.5h0M385.0 711.8h0M381.6 717.9h0M382.0 714.4h0M383.0 716.5h0M383.2 717.0h0M385.1 714.1h0M381.0 720.3h0M387.5 718.6h0M386.5 721.3h0M379.6 717.6h0M372.9 720.3h0M380.5 719.3h0M385.7 724.9h0M378.4 726.8h0M382.2 716.6h0M380.8 710.3h0M382.8 718.5h0M393.8 717.6h0M387.0 704.6h0M376.6 716.0h0M375.6 723.1h0M383.7 716.1h0M389.6 712.4h0M375.3 716.7h0M387.4 720.4h0M383.4 719.5h0M376.7 715.9h0M383.9 709.3h0M377.9 716.0h0M372.1 718.7h0M383.8 715.9h0M384.1 722.4h0M379.4 713.0h0M388.3 713.5h0M373.2 715.3h0M385.3 714.0h0M385.2 713.8h0M381.7 717.3h0M376.3 720.2h0M378.7 715.6h0M380.6 717.0h0M384.0 718.2h0M374.7 724.0h0M381.9 716.4h0M383.5 713.7h0M376.3 720.1h0M385.5 716.0h0M382.7 714.0h0M383.6 715.8h0M377.0 715.1h0M381.3 710.3h0M380.2 717.7h0M376.3 709.2h0M379.6 717.4h0M379.5 715.0h0M386.2 718.6h0M379.0 705.9h0M382.8 708.0h0M380.8 719.1h0M388.3 716.1h0M375.0 690.0h0M383.2 680.5h0M383.4 681.9h0M382.0 688.7h0M386.5 684.1h0M378.9 680.7h0M380.2 683.5h0M380.9 680.6h0M382.7 681.7h0M376.4 679.9h0M384.6 690.9h0M382.7 685.6h0M382.1 676.8h0M385.7 679.0h0M385.4 681.3h0M384.7 686.7h0M382.4 680.3h0M382.7 682.3h0M380.1 689.0h0M374.1 674.5h0M378.3 681.0h0M384.4 685.0h0M379.4 686.7h0M380.8 691.8h0M384.2 687.4h0M381.8 690.6h0M380.0 687.5h0M379.3 684.5h0M382.5 678.7h0M377.7 686.0h0M385.9 682.6h0M381.2 686.5h0M377.5 679.4h0M383.4 685.3h0M379.9 682.3h0M380.4 684.7h0M395.6 682.7h0M386.2 686.2h0M382.0 687.4h0M382.2 691.0h0M382.1 689.8h0M380.0 670.1h0M380.9 685.3h0M381.4 676.9h0M386.5 685.2h0M379.7 683.8h0M380.8 682.9h0M386.8 680.4h0M384.3 687.4h0M383.3 683.9h0M384.8 689.9h0M386.2 688.1h0M387.2 682.6h0M383.5 680.9h0M383.8 685.8h0M383.9 679.9h0M377.8 688.4h0M384.6 681.2h0M382.2 683.2h0M380.3 684.0h0M382.4 680.3h0M380.8 690.5h0M388.0 684.8h0M381.8 677.8h0M368.5 683.7h0M384.5 681.9h0M384.2 687.8h0M386.8 682.9h0M379.7 682.0h0M387.1 698.2h0M380.6 682.3h0M393.6 644.9h0M375.8 651.3h0M377.5 663.6h0M376.2 649.4h0M379.0 650.7h0M374.8 651.2h0M382.7 644.4h0M383.2 646.8h0M380.9 652.1h0M384.1 657.0h0M382.1 651.5h0M389.5 642.0h0M376.8 644.5h0M385.3 653.1h0M378.8 654.4h0M378.6 654.6h0M382.5 649.6h0M381.9 655.8h0M377.0 653.4h0M384.5 647.7h0M379.8 650.6h0M379.0 654.6h0M376.6 645.1h0M383.0 647.3h0M382.4 653.8h0M379.7 647.9h0M378.9 654.3h0M385.8 649.2h0M383.8 653.4h0M381.4 649.4h0M382.9 648.8h0M380.7 657.3h0M377.1 656.8h0M381.5 648.2h0M382.0 650.3h0M378.0 665.2h0M380.0 656.3h0M377.5 658.1h0M378.9 655.2h0M381.8 655.9h0M381.8 645.5h0M375.6 648.4h0M383.6 646.0h0M383.2 653.0h0M379.2 656.9h0M377.3 655.2h0M375.4 654.1h0M377.9 655.0h0M378.9 653.4h0M381.6 657.9h0M383.3 652.9h0M382.1 657.0h0M391.6 643.7h0M383.3 653.5h0M382.6 655.3h0M390.4 646.3h0M385.2 651.4h0M379.5 647.9h0M375.8 651.6h0M380.5 659.2h0M382.7 657.0h0M377.3 653.6h0M379.8 652.2h0M383.5 653.9h0M376.0 648.9h0M382.2 652.7h0M381.2 647.4h0M382.8 651.8h0M380.1 644.0h0M385.2 647.2h0M380.2 650.0h0M383.3 619.1h0M376.8 624.3h0M382.2 616.8h0M382.7 623.2h0M383.4 621.3h0M382.1 623.4h0M376.6 623.9h0M384.7 623.4h0M385.9 628.5h0M380.5 622.0h0M381.5 620.1h0M374.3 615.9h0M380.3 618.2h0M381.3 616.9h0M383.2 617.3h0M379.8 621.0h0M376.4 621.5h0M381.0 623.6h0M382.2 623.4h0M380.0 624.1h0M382.3 626.2h0M384.7 616.0h0M383.4 624.8h0M385.4 625.6h0M384.1 616.5h0M387.4 621.4h0M383.2 618.1h0M380.1 620.3h0M379.3 618.9h0M380.2 625.3h0M379.8 619.9h0M380.3 620.3h0M380.2 619.2h0M382.8 620.8h0M380.8 616.4h0M381.4 621.2h0M381.4 615.2h0M379.5 618.0h0M375.7 622.4h0M383.9 625.3h0M379.4 624.2h0M376.3 617.0h0M378.7 618.8h0M380.3 616.5h0M379.7 624.9h0M376.5 625.8h0M381.4 623.8h0M374.4 615.6h0M373.3 621.1h0M375.7 624.2h0M376.3 617.8h0M382.1 623.9h0M381.2 624.2h0M385.7 618.7h0M378.3 620.2h0M377.6 623.6h0M380.8 624.8h0M383.8 617.4h0M370.5 622.3h0M380.3 622.4h0M377.2 628.8h0M380.8 621.6h0M387.9 617.6h0M383.8 619.4h0M377.2 622.2h0M383.3 623.4h0M379.6 619.2h0M383.6 620.4h0M387.1 622.8h0M380.9 584.8h0M384.2 587.1h0M377.7 581.6h0M377.8 587.9h0M373.0 591.3h0M382.7 591.4h0M382.0 598.6h0M378.8 592.9h0M382.1 589.5h0M382.0 586.2h0M382.2 593.3h0M376.8 595.1h0M386.7 592.2h0M389.0 584.1h0M373.5 592.9h0M384.2 592.3h0M379.4 592.6h0M389.4 585.9h0M384.5 584.2h0M385.3 593.1h0M387.6 591.7h0M392.1 591.6h0M376.1 590.3h0M384.3 592.5h0M383.6 589.9h0M380.3 584.6h0M388.2 597.7h0M381.3 590.0h0M382.9 586.0h0M381.9 588.6h0M382.6 586.6h0M388.7 587.5h0M384.1 591.8h0M379.6 593.8h0M375.9 589.8h0M393.2 590.8h0M378.3 588.7h0M385.5 587.3h0M379.7 586.9h0M383.4 587.9h0M382.1 594.8h0M377.1 592.7h0M380.4 589.1h0M381.2 594.2h0M371.3 584.6h0M381.6 576.0h0M382.1 590.3h0M377.4 595.2h0M384.4 585.8h0M378.3 584.8h0M385.8 590.8h0M391.5 593.4h0M377.6 588.9h0M379.5 588.5h0M376.2 585.8h0M385.3 587.2h0M379.1 585.4h0M384.5 582.6h0M382.2 592.2h0M377.8 595.7h0M379.1 582.2h0M386.7 589.4h0M387.3 603.6h0M380.1 592.8h0M384.7 595.7h0M386.1 589.0h0M385.4 589.7h0M381.3 592.0h0M374.7 587.9h0M379.7 593.6h0M387.3 560.1h0M384.4 552.1h0M386.6 557.6h0M384.7 556.2h0M388.2 554.9h0M382.3 561.1h0M375.7 553.1h0M381.2 556.3h0M379.3 558.4h0M384.2 559.4h0M387.7 564.3h0M382.0 556.8h0M385.9 558.7h0M379.1 564.4h0M380.6 551.0h0M385.3 556.5h0M383.5 562.4h0M367.1 562.1h0M384.5 560.7h0M377.0 560.1h0M383.9 554.9h0M388.9 549.6h0M379.7 555.9h0M385.5 554.0h0M379.1 565.5h0M382.1 562.8h0M385.2 557.1h0M386.9 555.5h0M391.7 557.2h0M381.4 556.1h0M379.4 561.9h0M392.5 555.9h0M380.2 556.3h0M381.9 552.7h0M378.8 564.5h0M374.9 556.3h0M387.0 560.9h0M382.2 551.9h0M379.9 558.3h0M378.5 554.6h0M380.3 552.9h0M378.3 561.0h0M383.3 551.9h0M383.0 555.5h0M386.0 558.8h0M377.5 558.7h0M377.9 554.0h0M391.2 561.9h0M380.3 555.1h0M378.1 557.6h0M376.2 552.8h0M385.3 561.9h0M381.6 564.6h0M387.2 559.7h0M381.9 555.9h0M378.8 553.7h0M386.5 560.7h0M377.0 560.1h0M380.4 557.1h0M380.7 551.9h0M380.4 555.6h0M377.9 554.4h0M384.6 551.7h0M391.2 561.3h0M381.3 562.7h0M379.6 553.9h0M382.9 562.1h0M380.5 557.5h0M379.2 555.5h0M385.6 525.3h0M377.5 525.9h0M373.7 531.9h0M378.0 519.1h0M379.6 535.0h0M382.0 518.3h0M386.0 523.9h0M372.3 520.3h0M389.2 524.3h0M376.8 525.6h0M378.5 530.6h0M383.5 523.4h0M379.3 531.9h0M381.8 529.5h0M380.4 522.7h0M376.6 534.6h0M384.9 518.4h0M383.4 526.0h0M382.9 529.2h0M383.8 530.4h0M376.3 523.5h0M388.7 524.1h0M381.9 525.4h0M390.1 523.0h0M381.1 526.1h0M383.0 518.0h0M380.9 527.6h0M383.8 526.4h0M383.2 525.2h0M379.0 522.5h0M381.2 533.3h0M390.4 525.1h0M377.9 523.3h0M377.4 513.0h0M381.6 525.0h0M376.9 514.4h0M388.5 524.4h0M385.6 523.0h0M384.2 526.7h0M382.8 532.8h0M381.6 526.4h0M382.3 526.4h0M379.5 530.4h0M381.0 521.0h0M385.8 531.8h0M377.8 526.1h0M379.8 529.0h0M384.6 520.0h0M381.5 524.0h0M380.7 529.8h0M377.4 526.4h0M382.5 525.6h0M377.7 527.9h0M379.0 523.5h0M380.7 525.4h0M381.8 526.7h0M383.0 521.6h0M387.4 528.3h0M382.2 515.2h0M382.8 528.6h0M381.7 532.7h0M380.7 513.9h0M380.7 528.6h0M384.0 521.7h0M381.0 527.5h0M381.3 523.8h0M383.5 525.8h0M380.5 523.1h0M414.8 744.4h0M416.0 752.5h0M415.9 753.3h0M394.8 748.2h0M415.3 752.0h0M413.1 749.8h0M421.0 746.9h0M413.4 755.8h0M417.5 747.8h0M411.5 756.0h0M413.5 750.5h0M418.5 742.6h0M414.1 742.0h0M408.1 759.1h0M412.7 747.4h0M417.1 747.9h0M412.3 753.8h0M409.8 750.9h0M413.5 743.9h0M417.4 752.3h0M411.1 742.9h0M412.0 752.3h0M413.2 749.9h0M411.5 748.9h0M410.2 749.9h0M415.0 745.0h0M410.8 754.5h0M410.8 748.2h0M413.4 747.6h0M407.7 749.7h0M414.6 747.0h0M411.8 748.1h0M414.1 745.9h0M414.9 747.0h0M407.7 747.3h0M410.6 747.2h0M406.2 747.7h0M413.9 749.6h0M410.5 751.1h0M415.8 744.9h0M416.8 747.3h0M417.1 745.6h0M413.1 748.2h0M415.3 745.4h0M413.5 745.9h0M417.5 748.4h0M414.4 748.9h0M413.8 749.6h0M409.8 746.4h0M412.5 744.0h0M413.1 744.5h0M418.4 742.7h0M412.0 756.7h0M407.8 740.1h0M411.9 744.4h0M412.4 749.6h0M409.0 746.2h0M413.1 749.8h0M414.7 740.2h0M407.0 749.3h0M415.6 754.9h0M411.2 757.2h0M409.8 744.5h0M412.1 751.0h0M410.2 751.5h0M415.9 745.7h0M409.6 747.2h0M418.6 746.2h0M408.0 756.4h0M417.2 713.7h0M414.1 722.7h0M410.8 714.2h0M411.6 719.9h0M410.0 716.2h0M414.0 722.6h0M416.1 714.2h0M410.6 725.1h0M416.7 718.0h0M414.2 718.2h0M417.7 711.8h0M413.3 714.2h0M410.8 719.6h0M414.0 717.8h0M413.7 717.7h0M417.3 708.9h0M419.1 714.6h0M414.9 717.7h0M412.1 720.2h0M414.0 710.7h0M408.7 713.1h0M411.2 720.6h0M408.9 707.9h0M409.1 718.4h0M415.9 715.4h0M412.0 718.4h0M409.4 716.7h0M415.4 722.4h0M411.4 716.9h0M418.0 713.5h0M408.1 715.6h0M412.5 720.8h0M414.6 713.6h0M411.8 715.0h0M411.6 717.1h0M405.5 716.9h0M410.4 717.8h0M415.2 718.4h0M413.8 706.8h0M414.0 717.6h0M413.3 714.5h0M411.3 725.0h0M412.1 719.5h0M408.8 721.0h0M410.8 716.4h0M409.6 711.8h0M409.8 717.1h0M417.2 722.1h0M413.6 724.4h0M412.7 704.5h0M409.1 718.9h0M411.4 718.1h0M411.0 713.2h0M410.6 717.0h0M412.6 720.8h0M416.8 719.3h0M410.4 723.9h0M411.1 716.0h0M402.4 708.4h0M405.5 716.2h0M414.5 720.2h0M414.7 713.2h0M420.1 725.3h0M419.9 717.9h0M408.7 687.9h0M415.4 688.4h0M407.7 683.8h0M415.0 687.1h0M414.3 684.3h0M412.1 685.3h0M410.1 682.3h0M411.1 682.9h0M413.6 680.4h0M406.8 680.4h0M415.6 685.2h0M411.6 690.9h0M407.5 682.9h0M412.4 680.2h0M408.9 687.1h0M409.8 688.6h0M417.3 679.1h0M414.8 693.3h0M411.1 689.5h0M409.4 683.4h0M419.1 682.8h0M415.7 683.5h0M418.1 683.8h0M416.0 680.2h0M411.6 684.3h0M417.9 682.6h0M415.1 684.3h0M414.6 686.3h0M410.3 692.0h0M410.2 683.8h0M410.1 685.9h0M413.3 686.7h0M415.6 688.8h0M414.6 686.7h0M406.2 684.0h0M409.2 683.7h0M408.9 681.3h0M413.7 679.0h0M419.9 689.0h0M412.3 684.8h0M416.5 682.6h0M410.3 683.0h0M405.7 683.7h0M409.6 685.6h0M412.4 689.8h0M402.9 679.8h0M418.2 684.2h0M413.6 686.5h0M410.3 685.7h0M414.0 687.1h0M416.0 683.6h0M415.1 689.3h0M415.1 690.3h0M413.2 682.3h0M409.9 681.4h0M396.3 664.6h0M413.4 690.1h0M411.4 686.1h0M414.3 679.5h0M415.6 687.0h0M409.3 652.1h0M417.1 657.9h0M410.8 653.7h0M412.7 652.6h0M414.0 651.0h0M411.1 653.3h0M428.8 648.2h0M417.9 653.3h0M414.3 650.1h0M414.7 646.3h0M408.1 650.3h0M410.3 654.1h0M411.9 651.5h0M409.8 650.5h0M419.9 648.4h0M404.9 654.9h0M414.5 645.7h0M420.1 653.2h0M416.4 655.5h0M422.3 660.2h0M415.6 655.0h0M412.4 651.7h0M412.0 653.7h0M415.0 655.4h0M411.0 652.0h0M409.8 646.1h0M409.4 657.4h0M413.2 641.7h0M416.0 657.0h0M413.8 654.1h0M418.3 656.9h0M424.6 668.1h0M416.3 652.1h0M417.0 667.9h0M413.6 664.4h0M414.0 653.4h0M410.5 652.0h0M406.4 649.4h0M413.1 657.8h0M409.8 651.2h0M413.0 648.7h0M415.6 654.7h0M417.4 655.2h0M416.6 656.8h0M411.2 649.7h0M413.9 648.3h0M418.1 656.7h0M413.2 657.1h0M415.9 654.6h0M414.7 653.9h0M412.8 650.2h0M410.0 648.5h0M414.1 658.2h0M416.2 647.6h0M419.0 654.9h0M411.8 651.5h0M416.2 661.2h0M414.7 654.3h0M411.4 659.1h0M411.8 648.0h0M421.1 624.5h0M412.0 618.4h0M409.2 625.9h0M419.0 623.9h0M410.8 619.8h0M406.0 620.1h0M418.7 617.4h0M420.6 622.4h0M412.6 625.0h0M414.6 623.9h0M411.5 620.7h0M410.9 619.9h0M407.0 619.8h0M413.3 621.7h0M414.5 616.2h0M417.2 623.3h0M418.5 616.7h0M415.7 622.5h0M411.5 618.8h0M411.5 619.5h0M413.1 620.1h0M407.8 621.4h0M405.6 612.9h0M415.7 624.0h0M410.4 622.2h0M408.5 615.9h0M412.4 621.8h0M405.8 621.1h0M417.0 618.4h0M414.8 620.2h0M415.5 620.8h0M417.6 628.0h0M414.2 620.1h0M412.5 625.5h0M415.7 619.7h0M413.1 620.0h0M412.6 622.1h0M413.5 626.8h0M408.8 610.6h0M415.2 621.6h0M412.1 623.1h0M413.7 617.0h0M410.3 614.7h0M414.2 620.1h0M409.7 612.2h0M418.7 620.1h0M421.3 617.3h0M425.6 617.8h0M416.3 622.9h0M406.9 626.3h0M413.8 623.9h0M405.8 618.7h0M410.1 620.6h0M414.0 620.7h0M416.5 621.2h0M412.9 621.0h0M409.1 621.2h0M415.0 626.9h0M410.7 618.0h0M417.8 588.0h0M410.2 590.9h0M415.1 590.8h0M412.1 581.1h0M410.7 588.4h0M410.3 586.7h0M416.5 590.7h0M413.4 570.8h0M418.9 590.2h0M407.0 592.7h0M413.5 589.3h0M404.4 588.7h0M409.8 590.3h0M408.1 586.5h0M416.3 588.8h0M413.7 585.4h0M413.5 594.2h0M411.6 586.8h0M414.7 590.7h0M419.0 589.5h0M408.2 588.2h0M415.1 590.1h0M412.4 583.8h0M416.3 585.9h0M412.3 590.4h0M416.1 587.4h0M409.4 588.8h0M412.1 586.2h0M413.4 585.2h0M413.9 590.7h0M412.8 595.2h0M416.2 587.4h0M414.6 587.2h0M410.5 580.4h0M409.5 589.2h0M412.4 584.0h0M410.0 588.2h0M416.0 587.5h0M415.9 585.7h0M412.1 588.0h0M409.9 587.4h0M409.9 592.3h0M411.2 581.8h0M412.3 589.6h0M417.8 591.2h0M416.6 586.7h0M413.4 584.8h0M416.2 590.3h0M415.1 587.2h0M414.0 588.4h0M415.2 587.4h0M410.8 588.9h0M412.7 590.1h0M417.7 584.1h0M417.9 599.0h0M413.3 591.3h0M416.6 587.8h0M420.2 591.7h0M409.5 588.1h0M414.5 560.6h0M407.4 552.9h0M414.8 555.2h0M413.1 562.3h0M416.3 553.6h0M417.4 552.4h0M411.2 553.0h0M413.7 558.1h0M416.2 557.2h0M410.1 557.0h0M412.8 554.7h0M422.8 556.6h0M410.0 558.6h0M415.3 552.4h0M411.2 555.6h0M416.1 561.6h0M415.6 560.5h0M410.6 561.6h0M415.0 552.4h0M409.0 556.3h0M414.6 561.2h0M415.1 555.4h0M412.4 554.1h0M418.1 558.9h0M411.1 551.3h0M408.5 554.8h0M416.0 551.7h0M406.2 556.1h0M413.5 562.7h0M415.4 558.9h0M411.3 553.0h0M414.7 557.5h0M410.3 558.7h0M416.5 557.7h0M408.1 575.7h0M405.8 556.9h0M419.7 558.5h0M410.4 560.1h0M412.8 555.6h0M412.4 557.7h0M410.5 558.5h0M410.5 562.6h0M418.5 557.3h0M407.3 554.4h0M401.2 555.7h0M414.9 555.0h0M416.7 554.1h0M411.7 556.6h0M412.1 553.3h0M404.0 560.5h0M413.6 559.1h0M413.0 560.0h0M419.0 558.5h0M407.4 559.7h0M418.6 551.1h0M415.9 557.1h0M415.1 560.5h0M411.4 559.9h0M412.5 548.3h0M412.4 525.9h0M413.0 523.6h0M420.6 520.9h0M404.7 534.7h0M411.0 524.5h0M409.7 526.3h0M420.5 529.1h0M417.0 525.6h0M410.1 521.0h0M418.6 525.7h0M417.2 525.6h0M405.3 524.5h0M417.2 528.7h0M409.3 526.8h0M415.6 529.4h0M416.9 523.4h0M417.6 529.3h0M416.6 529.3h0M416.1 524.3h0M416.4 526.6h0M417.8 526.5h0M412.7 523.5h0M413.4 529.2h0M423.0 509.3h0M409.4 522.0h0M418.3 525.8h0M415.7 535.4h0M405.3 526.4h0M420.7 522.4h0M419.6 526.8h0M409.6 525.7h0M420.0 524.8h0M414.3 519.8h0M404.2 521.0h0M409.9 524.7h0M415.3 528.8h0M418.6 523.9h0M414.3 523.3h0M417.2 524.1h0M417.8 518.9h0M406.1 522.0h0M408.4 521.4h0M414.7 522.0h0M412.0 526.3h0M410.6 520.4h0M405.1 523.9h0M412.6 528.8h0M419.7 529.8h0M418.5 520.8h0M405.2 528.8h0M420.5 528.5h0M409.2 523.1h0M413.1 523.9h0M400.3 509.0h0M421.6 527.7h0M408.2 522.6h0" stroke="#8a8a8a" stroke-width="3.4" stroke-linecap="round"/>
<rect x="440.5" y="509.5" width="20" height="255.0" fill="#ececec" stroke="#d0d0d0"/>
<rect x="441.0" y="654.875" width="19" height="32" fill="#e2edf8"/>
<rect x="443.0" y="659.875" width="16" height="18" fill="#7fa7d6"/>
<rect x="443.0" y="665.375" width="16" height="6" fill="#3f7fc3"/>
<path d="M460.5 509.5h7M460.5 522.2h5M460.5 535.0h5M460.5 547.8h5M460.5 560.5h5M460.5 573.2h7M460.5 586.0h5M460.5 598.8h5M460.5 611.5h5M460.5 624.2h5M460.5 637.0h7M460.5 649.8h5M460.5 662.5h5M460.5 675.2h5M460.5 688.0h5M460.5 700.8h7M460.5 713.5h5M460.5 726.2h5M460.5 739.0h5M460.5 751.8h5M460.5 764.5h7" stroke="#c8c8c8"/>
<text x="469.0" y="513.5" font-size="11.5" fill="#777">0</text>
<text x="469.0" y="577.25" font-size="11.5" fill="#777">10</text>
<text x="469.0" y="641.0" font-size="11.5" fill="#777">20</text>
<text x="469.0" y="704.75" font-size="11.5" fill="#777">30</text>
<text x="469.0" y="768.5" font-size="11.5" fill="#777">40</text>
<text x="610.5" y="478.3" font-size="12.5" fill="#444" letter-spacing="0.25">Remote Constellation Diagram</text>
<text x="860.0" y="478.3" font-size="12" fill="#444">CINR (dB)</text>
<text transform="translate(610.5,497) scale(0.91,1)" font-size="10" fill="#8f8f8f" stroke="#8f8f8f" stroke-width="0.2">POWER</text>
<text x="655.0" y="497.5" font-size="12" fill="#1e1e1e">-65 dBm</text>
<text transform="translate(721.0,497) scale(0.91,1)" font-size="10" fill="#8f8f8f" stroke="#8f8f8f" stroke-width="0.2">CINR</text>
<text x="766.0" y="497.5" font-size="12" fill="#1e1e1e">24 dB</text>
<path d="M643.4 509.5 V764.5" stroke="#cfcfcf" stroke-dasharray="4,3"/>
<path d="M611.5 732.6 H866.5" stroke="#cfcfcf" stroke-dasharray="4,3"/>
<path d="M675.2 509.5 V764.5" stroke="#cfcfcf" stroke-dasharray="4,3"/>
<path d="M611.5 700.8 H866.5" stroke="#cfcfcf" stroke-dasharray="4,3"/>
<path d="M707.1 509.5 V764.5" stroke="#cfcfcf" stroke-dasharray="4,3"/>
<path d="M611.5 668.9 H866.5" stroke="#cfcfcf" stroke-dasharray="4,3"/>
<path d="M739.0 509.5 V764.5" stroke="#cfcfcf" stroke-dasharray="4,3"/>
<path d="M611.5 637.0 H866.5" stroke="#cfcfcf" stroke-dasharray="4,3"/>
<path d="M770.9 509.5 V764.5" stroke="#cfcfcf" stroke-dasharray="4,3"/>
<path d="M611.5 605.1 H866.5" stroke="#cfcfcf" stroke-dasharray="4,3"/>
<path d="M802.8 509.5 V764.5" stroke="#cfcfcf" stroke-dasharray="4,3"/>
<path d="M611.5 573.2 H866.5" stroke="#cfcfcf" stroke-dasharray="4,3"/>
<path d="M834.6 509.5 V764.5" stroke="#cfcfcf" stroke-dasharray="4,3"/>
<path d="M611.5 541.4 H866.5" stroke="#cfcfcf" stroke-dasharray="4,3"/>
<rect x="611.5" y="509.5" width="255.0" height="255.0" fill="none" stroke="#c8c8c8"/>
<text x="608.5" y="767.0" font-size="11" fill="#707070" text-anchor="end">-8</text>
<text x="611.5" y="774" font-size="11" fill="#707070" text-anchor="middle">-8</text>
<text x="608.5" y="735.125" font-size="11" fill="#707070" text-anchor="end">-6</text>
<text x="643.375" y="774" font-size="11" fill="#707070" text-anchor="middle">-6</text>
<text x="608.5" y="703.25" font-size="11" fill="#707070" text-anchor="end">-4</text>
<text x="675.25" y="774" font-size="11" fill="#707070" text-anchor="middle">-4</text>
<text x="608.5" y="671.375" font-size="11" fill="#707070" text-anchor="end">-2</text>
<text x="707.125" y="774" font-size="11" fill="#707070" text-anchor="middle">-2</text>
<text x="608.5" y="639.5" font-size="11" fill="#707070" text-anchor="end">0</text>
<text x="739.0" y="774" font-size="11" fill="#707070" text-anchor="middle">0</text>
<text x="608.5" y="607.625" font-size="11" fill="#707070" text-anchor="end">2</text>
<text x="770.875" y="774" font-size="11" fill="#707070" text-anchor="middle">2</text>
<text x="608.5" y="575.75" font-size="11" fill="#707070" text-anchor="end">4</text>
<text x="802.75" y="774" font-size="11" fill="#707070" text-anchor="middle">4</text>
<text x="608.5" y="543.875" font-size="11" fill="#707070" text-anchor="end">6</text>
<text x="834.625" y="774" font-size="11" fill="#707070" text-anchor="middle">6</text>
<text x="608.5" y="512.0" font-size="11" fill="#707070" text-anchor="end">8</text>
<text x="866.5" y="774" font-size="11" fill="#707070" text-anchor="middle">8</text>
<clipPath id="clip5"><rect x="611.5" y="509.5" width="255.0" height="255.0"/></clipPath>
<path clip-path="url(#clip5)" d="M626.9 739.5h0M612.2 751.9h0M629.0 747.4h0M627.5 753.6h0M630.2 748.8h0M633.3 745.1h0M628.1 746.5h0M627.6 748.7h0M628.1 751.3h0M629.7 746.2h0M621.7 747.1h0M633.1 746.3h0M630.1 746.5h0M628.6 750.5h0M624.6 756.9h0M624.9 743.3h0M629.3 744.4h0M621.3 749.3h0M628.8 748.3h0M627.9 747.9h0M624.0 752.5h0M631.4 749.8h0M629.6 755.0h0M630.8 747.2h0M620.7 747.5h0M627.3 737.0h0M636.8 750.8h0M622.6 756.1h0M622.6 756.3h0M626.1 751.8h0M629.4 749.6h0M629.8 748.5h0M635.4 747.9h0M627.9 754.0h0M623.4 749.7h0M628.9 747.7h0M628.5 746.7h0M632.8 746.8h0M630.8 751.2h0M629.3 745.8h0M635.2 748.5h0M623.0 749.9h0M624.2 749.0h0M629.8 751.7h0M632.8 747.1h0M626.5 750.0h0M629.0 740.6h0M629.0 741.8h0M624.0 742.7h0M626.5 745.4h0M628.2 742.4h0M632.8 746.6h0M632.4 748.9h0M625.3 744.6h0M623.2 742.8h0M623.4 743.4h0M623.0 754.8h0M623.3 738.4h0M622.6 748.0h0M632.3 740.4h0M625.2 742.6h0M630.7 754.8h0M625.3 744.9h0M629.8 717.1h0M625.8 714.5h0M626.6 715.9h0M627.6 718.0h0M626.4 718.9h0M631.8 717.6h0M623.4 713.4h0M627.6 716.6h0M626.7 720.6h0M630.5 711.2h0M625.2 714.8h0M624.6 721.0h0M629.2 713.1h0M625.0 713.8h0M623.2 713.9h0M632.8 715.6h0M627.6 716.6h0M619.2 713.1h0M621.6 710.8h0M624.8 717.8h0M631.3 716.0h0M632.1 714.0h0M632.1 716.2h0M622.6 726.7h0M626.4 720.9h0M624.3 713.8h0M628.9 709.7h0M622.3 715.6h0M628.0 713.9h0M634.2 726.2h0M623.9 714.0h0M622.2 712.9h0M627.8 711.2h0M625.7 719.4h0M623.7 717.5h0M626.5 716.1h0M618.9 719.0h0M626.8 716.5h0M622.7 718.9h0M624.3 713.4h0M624.4 719.2h0M628.5 719.7h0M634.4 719.6h0M624.4 718.0h0M629.3 715.6h0M623.0 715.3h0M630.5 720.9h0M630.1 717.8h0M629.0 711.2h0M624.3 698.9h0M627.1 715.5h0M628.5 722.1h0M626.9 714.7h0M629.4 715.6h0M625.4 717.9h0M629.3 717.2h0M628.7 717.3h0M627.0 708.8h0M624.3 718.1h0M618.0 717.3h0M633.3 718.7h0M624.2 713.3h0M622.2 714.9h0M624.5 715.8h0M625.3 716.5h0M622.9 721.2h0M626.1 711.3h0M626.0 714.2h0M625.0 715.1h0M623.9 717.1h0M633.8 717.8h0M636.8 729.7h0M624.7 684.9h0M622.1 689.0h0M633.1 682.8h0M622.8 688.3h0M625.8 689.0h0M626.7 685.5h0M628.0 686.7h0M631.5 685.8h0M618.1 685.3h0M625.0 687.5h0M635.7 682.0h0M624.9 685.3h0M634.7 687.5h0M622.5 685.6h0M632.0 675.0h0M635.7 686.2h0M627.5 682.1h0M634.6 685.8h0M631.3 689.3h0M624.6 685.5h0M633.6 685.8h0M624.4 681.2h0M625.8 680.3h0M626.5 685.7h0M620.7 685.9h0M627.7 685.7h0M627.0 682.4h0M621.7 686.2h0M634.8 686.0h0M618.8 681.9h0M628.0 690.4h0M617.7 686.6h0M620.5 684.9h0M631.0 678.7h0M634.3 679.4h0M625.5 680.6h0M628.4 691.9h0M637.3 689.5h0M633.2 687.1h0M624.0 685.9h0M628.0 681.1h0M634.1 685.2h0M639.8 677.0h0M630.4 687.5h0M627.1 688.0h0M623.1 684.0h0M630.6 677.0h0M626.7 688.4h0M625.4 679.5h0M628.6 684.0h0M622.5 688.5h0M624.0 699.9h0M629.6 685.1h0M627.6 684.2h0M624.7 686.2h0M624.2 683.8h0M630.5 687.6h0M632.3 685.6h0M629.4 685.1h0M629.4 681.9h0M628.1 684.6h0M629.3 686.3h0M627.2 651.3h0M629.7 658.1h0M632.4 650.4h0M621.5 666.1h0M624.5 654.6h0M630.9 651.1h0M626.3 651.9h0M626.6 653.5h0M631.3 653.9h0M629.7 650.4h0M627.1 655.4h0M624.3 657.8h0M626.1 655.2h0M630.6 646.8h0M626.1 654.2h0M626.6 653.0h0M631.3 656.4h0M629.1 659.3h0M625.0 646.1h0M628.3 649.5h0M618.8 652.3h0M625.4 655.0h0M625.0 658.8h0M626.6 649.3h0M630.2 645.1h0M625.6 648.8h0M624.8 656.8h0M625.0 652.5h0M632.6 656.1h0M627.7 647.0h0M629.6 651.6h0M632.0 655.7h0M633.6 650.8h0M630.0 647.7h0M628.4 657.3h0M628.0 663.1h0M627.3 653.1h0M629.4 657.9h0M631.0 650.2h0M631.0 656.6h0M626.8 649.4h0M628.0 656.1h0M622.8 647.4h0M624.0 648.2h0M631.0 654.8h0M631.0 648.7h0M624.1 655.0h0M626.6 655.8h0M629.3 652.4h0M633.7 658.5h0M628.2 655.2h0M624.6 648.4h0M630.7 654.6h0M630.0 652.1h0M623.2 646.1h0M625.5 646.1h0M629.0 654.4h0M628.9 654.1h0M631.5 656.8h0M629.6 646.7h0M634.2 648.6h0M628.8 652.6h0M631.5 654.7h0M623.0 654.4h0M630.1 654.9h0M626.4 654.3h0M624.6 625.2h0M632.1 619.3h0M636.3 598.5h0M628.4 623.7h0M631.2 618.7h0M628.7 621.8h0M628.5 620.7h0M629.2 629.7h0M627.1 619.4h0M624.2 620.0h0M630.9 616.2h0M625.8 621.5h0M628.9 617.8h0M631.5 621.6h0M628.3 620.2h0M629.4 626.1h0M611.3 619.1h0M629.3 618.2h0M633.4 630.5h0M632.2 615.6h0M624.3 618.4h0M623.0 623.3h0M628.9 618.2h0M633.2 621.6h0M626.0 623.2h0M628.1 620.0h0M625.8 622.3h0M627.3 621.2h0M628.1 616.0h0M626.8 619.4h0M630.1 624.6h0M624.7 621.2h0M626.2 621.3h0M627.0 620.7h0M628.9 621.9h0M626.3 622.9h0M632.8 617.2h0M627.1 622.5h0M625.2 627.2h0M621.4 623.2h0M627.8 621.5h0M623.8 624.2h0M628.0 621.2h0M628.0 625.8h0M625.4 626.1h0M625.1 615.2h0M624.2 619.9h0M637.5 631.0h0M626.8 625.0h0M625.0 622.9h0M623.4 618.6h0M629.5 621.8h0M630.5 623.2h0M625.2 623.3h0M627.7 621.2h0M626.6 620.7h0M632.3 625.3h0M624.3 625.7h0M628.4 622.3h0M629.8 621.4h0M628.6 616.5h0M632.4 616.4h0M624.0 618.9h0M626.4 622.3h0M625.9 617.2h0M627.0 620.5h0M625.7 587.4h0M628.3 590.1h0M628.4 590.0h0M623.5 582.5h0M631.5 591.6h0M631.3 593.7h0M627.4 589.4h0M620.7 588.3h0M628.7 591.5h0M629.5 588.3h0M625.8 591.3h0M624.1 585.2h0M629.8 592.7h0M623.5 590.9h0M629.0 591.6h0M620.8 587.3h0M625.7 585.7h0M628.8 586.4h0M627.1 595.3h0M627.0 594.7h0M628.9 588.7h0M626.7 590.8h0M629.8 584.9h0M633.7 588.1h0M627.0 586.2h0M626.8 590.7h0M626.1 582.6h0M629.9 590.5h0M632.7 586.8h0M626.0 589.1h0M627.5 590.1h0M627.1 591.0h0M634.4 585.3h0M631.7 593.2h0M624.8 588.6h0M624.2 588.1h0M619.4 585.9h0M628.4 593.8h0M624.1 593.0h0M624.8 595.6h0M628.1 590.2h0M624.1 590.1h0M624.1 587.1h0M627.3 586.2h0M627.7 583.8h0M628.9 595.0h0M636.2 597.4h0M628.1 590.7h0M622.9 583.9h0M627.0 587.4h0M627.4 592.9h0M626.8 585.9h0M625.3 593.7h0M621.0 589.8h0M626.9 592.7h0M629.6 592.2h0M629.1 588.9h0M627.7 582.8h0M632.7 587.2h0M625.7 585.7h0M626.1 586.0h0M622.5 589.0h0M628.0 587.0h0M633.0 589.2h0M627.9 588.2h0M625.9 589.5h0M633.5 588.0h0M629.6 584.2h0M629.5 556.0h0M634.9 561.2h0M625.2 555.9h0M619.7 554.4h0M628.7 550.8h0M627.2 557.3h0M625.2 557.9h0M630.9 564.9h0M624.6 558.0h0M628.7 547.3h0M622.6 558.6h0M633.2 552.9h0M625.2 553.7h0M632.8 556.1h0M620.2 555.5h0M626.7 558.0h0M632.5 569.5h0M627.7 555.3h0M628.2 559.3h0M632.9 565.7h0M625.1 556.9h0M628.9 554.6h0M628.2 564.1h0M630.8 549.4h0M630.1 551.3h0M628.8 562.5h0M628.2 556.4h0M629.5 556.9h0M626.5 553.1h0M625.9 555.4h0M625.1 547.7h0M626.2 552.9h0M632.0 553.4h0M624.1 557.6h0M626.9 553.4h0M627.0 562.7h0M623.0 566.9h0M623.9 560.6h0M631.5 557.8h0M616.2 556.3h0M631.9 560.3h0M630.2 559.1h0M623.9 563.0h0M619.7 549.1h0M632.1 552.9h0M626.8 555.7h0M629.2 555.3h0M623.1 559.9h0M631.6 556.4h0M629.8 552.5h0M622.6 562.0h0M624.8 554.2h0M629.7 554.5h0M621.9 568.2h0M636.4 559.7h0M631.8 555.0h0M626.0 561.6h0M623.2 556.5h0M614.0 556.4h0M629.3 563.6h0M628.3 558.4h0M633.5 559.0h0M629.0 556.6h0M630.9 561.7h0M622.8 553.9h0M632.2 554.8h0M625.1 558.6h0M625.9 521.8h0M630.2 521.7h0M629.2 528.7h0M626.2 524.3h0M623.1 529.5h0M630.8 524.3h0M629.3 525.4h0M626.9 521.9h0M629.2 528.4h0M625.2 526.9h0M622.9 527.1h0M627.2 526.3h0M626.0 523.4h0M623.7 523.6h0M628.0 522.7h0M625.8 524.2h0M631.5 526.5h0M626.4 525.3h0M633.8 525.0h0M626.5 525.7h0M631.1 534.1h0M627.5 526.6h0M638.1 525.1h0M630.7 520.6h0M628.8 527.7h0M632.1 534.7h0M630.5 525.6h0M630.9 521.3h0M631.3 523.3h0M624.8 524.3h0M627.0 532.6h0M629.8 526.6h0M631.4 524.4h0M627.3 521.1h0M625.0 527.2h0M631.3 521.0h0M627.7 525.8h0M627.5 525.8h0M627.8 527.6h0M624.9 524.1h0M629.6 532.4h0M618.9 519.9h0M620.2 526.0h0M626.9 524.2h0M623.0 526.3h0M627.1 519.4h0M620.6 524.6h0M622.9 523.8h0M626.3 527.8h0M623.3 522.7h0M623.1 526.8h0M634.1 529.9h0M622.0 525.5h0M627.0 529.3h0M628.7 524.7h0M625.7 521.2h0M628.1 530.7h0M624.8 526.3h0M625.4 525.6h0M626.7 521.8h0M628.6 517.5h0M631.5 526.5h0M624.8 529.7h0M623.7 522.5h0M632.5 523.2h0M626.7 523.2h0M626.5 524.7h0M628.0 529.1h0M654.6 749.0h0M659.5 750.9h0M659.7 750.4h0M655.0 749.8h0M665.5 748.9h0M656.2 739.3h0M660.3 749.2h0M661.7 745.6h0M659.9 749.0h0M647.9 752.4h0M659.4 745.6h0M661.8 751.9h0M662.2 746.8h0M658.8 748.3h0M660.8 752.5h0M662.2 748.2h0M657.9 749.0h0M661.9 747.4h0M660.2 751.9h0M660.1 746.3h0M660.2 755.7h0M661.2 748.5h0M659.2 752.5h0M665.2 749.9h0M662.1 750.2h0M661.9 747.6h0M661.1 751.7h0M657.8 749.6h0M655.3 748.0h0M664.0 751.8h0M663.5 752.5h0M652.4 754.9h0M658.5 752.0h0M664.0 748.7h0M661.2 748.5h0M670.7 753.1h0M651.2 743.9h0M657.3 749.9h0M654.4 749.2h0M659.1 747.9h0M650.4 752.8h0M651.2 746.0h0M659.2 750.9h0M659.2 751.1h0M664.4 747.7h0M653.7 750.5h0M661.7 749.2h0M651.1 747.8h0M655.6 752.5h0M656.7 749.6h0M665.1 747.6h0M662.2 745.9h0M658.0 749.8h0M663.4 750.1h0M655.7 752.0h0M659.5 752.4h0M656.9 750.6h0M659.1 745.5h0M661.7 746.0h0M655.9 746.5h0M659.8 750.6h0M662.6 747.1h0M661.7 734.5h0M650.8 747.5h0M670.4 756.1h0M655.1 751.1h0M658.1 750.7h0M655.4 753.9h0M657.9 750.6h0M664.7 745.2h0M663.4 750.5h0M657.6 711.5h0M660.3 719.7h0M658.7 721.2h0M664.8 717.6h0M663.4 720.0h0M658.2 712.7h0M660.1 710.5h0M652.4 713.9h0M660.5 715.7h0M656.7 712.1h0M662.0 716.4h0M660.2 719.8h0M656.5 714.4h0M656.6 718.8h0M659.0 717.5h0M655.9 719.3h0M659.8 722.3h0M660.6 717.4h0M658.4 715.5h0M663.6 721.6h0M654.7 713.3h0M659.0 722.9h0M660.4 712.3h0M663.9 715.0h0M660.3 716.0h0M656.4 713.6h0M660.7 717.2h0M665.3 720.0h0M663.9 719.1h0M654.9 716.1h0M657.3 713.0h0M655.7 716.6h0M664.1 722.4h0M655.8 711.7h0M667.6 726.6h0M659.9 717.3h0M651.3 721.5h0M655.9 717.6h0M660.1 722.5h0M666.7 713.6h0M658.0 709.2h0M659.1 716.1h0M658.7 713.3h0M656.2 722.7h0M661.5 717.9h0M661.5 717.9h0M658.1 716.6h0M662.2 715.1h0M656.2 719.6h0M660.6 716.7h0M662.0 716.3h0M649.2 722.8h0M661.2 714.7h0M658.9 716.4h0M661.3 722.5h0M660.1 713.0h0M658.1 717.1h0M661.9 721.8h0M661.1 715.1h0M650.7 733.3h0M652.7 717.8h0M657.1 716.1h0M661.6 717.1h0M660.8 717.1h0M663.0 683.3h0M669.3 684.0h0M661.2 689.9h0M653.9 685.6h0M657.3 683.5h0M655.7 683.8h0M664.3 690.7h0M658.4 686.1h0M662.7 684.4h0M664.8 684.0h0M657.3 685.7h0M658.2 686.6h0M656.3 684.4h0M660.4 686.1h0M663.2 686.7h0M659.7 682.2h0M667.1 682.2h0M663.0 683.2h0M654.9 685.7h0M659.5 681.6h0M658.3 681.4h0M658.5 691.5h0M659.0 684.6h0M666.3 679.6h0M657.4 680.6h0M660.3 681.2h0M663.6 683.2h0M657.4 689.4h0M673.0 680.1h0M660.3 684.5h0M652.8 695.1h0M659.2 686.4h0M660.7 686.2h0M660.1 686.7h0M664.0 689.5h0M663.5 681.1h0M658.9 688.3h0M653.1 689.5h0M660.9 680.3h0M661.4 693.1h0M659.6 687.3h0M655.7 685.7h0M657.0 683.1h0M657.2 684.7h0M664.2 686.8h0M663.2 682.1h0M655.0 683.2h0M655.2 683.8h0M652.9 687.1h0M658.0 687.0h0M656.4 683.9h0M655.1 687.4h0M656.2 687.8h0M658.0 682.6h0M661.1 683.9h0M659.0 688.7h0M659.5 686.9h0M661.3 685.3h0M657.7 686.4h0M661.8 684.5h0M649.3 691.9h0M660.1 654.2h0M663.4 650.5h0M653.4 634.4h0M658.6 649.2h0M662.7 651.1h0M669.1 665.6h0M661.0 652.1h0M656.5 646.7h0M659.9 659.0h0M658.8 649.2h0M656.5 655.4h0M651.3 654.7h0M662.4 656.9h0M655.6 659.1h0M663.3 655.1h0M655.4 653.9h0M654.8 647.5h0M660.2 649.5h0M660.7 648.5h0M662.2 650.4h0M662.1 652.6h0M656.8 652.1h0M664.1 651.8h0M657.5 648.4h0M657.8 649.9h0M654.8 657.3h0M660.7 655.8h0M666.7 644.6h0M659.7 660.3h0M659.4 656.0h0M660.8 654.8h0M660.6 654.3h0M657.1 660.5h0M658.1 650.4h0M655.9 659.1h0M657.4 647.4h0M659.4 649.7h0M653.9 659.6h0M658.2 658.4h0M660.7 651.3h0M665.2 653.6h0M654.9 654.4h0M657.2 655.7h0M669.4 649.8h0M662.6 663.8h0M659.3 647.0h0M660.2 650.8h0M659.2 646.4h0M655.4 656.8h0M650.0 656.7h0M665.5 650.3h0M659.4 655.3h0M662.7 660.1h0M661.3 649.5h0M660.9 652.4h0M663.6 626.4h0M660.9 617.8h0M663.5 617.9h0M662.7 629.1h0M656.4 619.1h0M662.4 622.2h0M657.3 626.8h0M662.1 621.2h0M662.7 629.4h0M663.2 627.0h0M658.0 623.4h0M658.0 622.8h0M654.8 616.3h0M656.6 622.6h0M663.6 618.2h0M656.2 621.9h0M659.5 618.7h0M658.4 618.3h0M666.3 629.1h0M652.6 624.0h0M661.3 625.3h0M662.7 621.3h0M657.7 625.3h0M648.4 618.8h0M657.1 624.1h0M669.2 634.0h0M661.9 619.7h0M662.2 628.2h0M659.4 620.2h0M657.1 615.4h0M659.2 621.3h0M656.1 626.0h0M663.3 621.8h0M658.0 611.6h0M656.3 618.5h0M662.4 613.2h0M656.8 622.3h0M656.1 620.8h0M656.1 618.1h0M659.1 624.5h0M653.6 616.8h0M666.4 618.3h0M657.0 618.3h0M655.2 618.6h0M651.5 615.7h0M660.9 614.8h0M654.0 620.8h0M665.6 615.7h0M657.1 617.6h0M657.6 630.2h0M657.8 622.2h0M658.5 623.0h0M653.9 623.5h0M658.7 616.3h0M657.8 617.3h0M661.4 616.1h0M655.8 613.8h0M658.2 617.0h0M662.5 616.6h0M662.6 630.4h0M652.5 613.3h0M659.2 613.0h0M662.6 587.0h0M658.7 588.3h0M660.6 583.4h0M656.0 594.6h0M660.6 592.9h0M658.0 590.3h0M658.5 587.0h0M660.3 591.6h0M652.2 586.7h0M654.2 590.8h0M664.0 587.3h0M654.3 580.7h0M662.2 590.5h0M650.4 589.2h0M656.6 588.8h0M657.5 584.9h0M659.5 587.8h0M650.9 586.8h0M651.3 585.0h0M664.0 592.3h0M664.4 588.5h0M640.9 581.1h0M664.0 587.0h0M658.5 585.1h0M656.9 588.2h0M654.6 590.5h0M664.1 594.8h0M660.4 591.9h0M660.3 583.0h0M660.9 587.8h0M653.7 572.1h0M668.5 579.0h0M652.9 599.8h0M663.6 584.8h0M660.2 584.8h0M661.4 595.0h0M662.7 592.1h0M661.8 594.9h0M662.2 590.0h0M665.5 590.4h0M662.9 594.1h0M653.9 591.5h0M659.8 584.2h0M658.7 584.5h0M653.0 584.0h0M667.4 603.7h0M658.1 587.4h0M659.5 581.6h0M658.6 587.0h0M658.9 595.8h0M655.6 590.1h0M659.1 587.0h0M667.2 582.8h0M658.4 589.0h0M656.0 586.4h0M660.8 589.6h0M672.1 585.5h0M646.0 597.4h0M665.4 594.7h0M662.2 584.1h0M662.9 590.7h0M657.9 583.9h0M657.1 567.4h0M662.8 556.5h0M656.7 548.4h0M656.7 558.5h0M654.2 561.9h0M659.2 558.4h0M657.0 551.6h0M660.9 559.0h0M658.3 559.0h0M657.3 563.9h0M661.1 558.7h0M658.2 560.6h0M655.2 558.1h0M657.1 557.4h0M659.7 563.3h0M660.0 553.6h0M661.1 557.8h0M658.9 556.8h0M659.7 560.1h0M657.2 553.5h0M659.1 558.0h0M654.3 557.0h0M661.4 561.0h0M655.1 563.7h0M653.5 552.7h0M658.5 556.1h0M662.1 561.7h0M655.9 553.1h0M657.9 561.5h0M653.0 555.3h0M655.4 562.7h0M659.9 561.0h0M658.7 557.4h0M658.4 556.8h0M652.6 553.6h0M666.2 550.4h0M654.5 552.7h0M664.1 559.9h0M663.5 557.9h0M665.2 561.0h0M656.8 556.3h0M659.2 555.7h0M652.2 566.0h0M658.0 559.1h0M656.6 552.5h0M656.3 553.1h0M666.0 557.7h0M668.6 557.0h0M664.0 555.6h0M657.6 559.9h0M661.3 555.8h0M658.5 553.4h0M654.4 560.5h0M647.2 552.8h0M662.6 557.9h0M661.6 556.5h0M659.2 556.3h0M658.7 555.8h0M660.3 553.1h0M661.6 554.6h0M653.0 545.7h0M652.2 556.0h0M655.6 558.2h0M661.7 557.4h0M660.1 557.8h0M657.8 552.6h0M655.7 552.1h0M657.3 562.6h0M674.2 556.4h0M666.1 561.9h0M663.4 556.4h0M656.9 520.5h0M656.1 526.6h0M660.3 526.3h0M657.7 518.9h0M660.5 524.0h0M665.1 526.2h0M657.4 519.8h0M656.3 530.8h0M668.2 526.3h0M655.1 525.9h0M665.3 524.4h0M658.7 535.0h0M654.7 522.5h0M656.6 525.0h0M663.1 520.7h0M653.6 525.4h0M663.5 520.1h0M661.8 525.9h0M660.2 523.0h0M657.5 529.5h0M653.7 522.6h0M660.5 523.4h0M653.5 529.1h0M661.2 528.0h0M658.9 530.7h0M651.6 535.3h0M663.7 528.9h0M657.3 529.9h0M658.6 521.4h0M658.2 527.5h0M667.8 530.9h0M660.5 522.5h0M656.6 524.6h0M664.7 520.4h0M666.8 522.4h0M662.6 527.3h0M659.3 526.2h0M658.1 519.4h0M653.7 525.2h0M652.5 526.0h0M661.9 524.7h0M659.3 526.7h0M660.4 519.3h0M659.3 522.2h0M656.1 523.5h0M666.8 529.0h0M664.6 528.2h0M659.0 523.4h0M659.4 519.9h0M662.0 532.4h0M657.8 526.3h0M663.0 520.8h0M660.2 519.9h0M660.3 527.0h0M655.1 531.8h0M662.7 526.4h0M659.4 531.1h0M659.0 524.2h0M654.8 516.0h0M658.4 524.5h0M661.9 524.7h0M657.6 529.7h0M687.6 745.9h0M699.6 745.1h0M693.6 752.6h0M693.9 756.8h0M693.1 751.0h0M699.4 738.3h0M693.3 743.7h0M691.3 750.6h0M688.2 750.0h0M690.4 750.6h0M690.9 760.2h0M688.3 745.0h0M694.5 739.9h0M690.7 739.8h0M689.0 746.2h0M689.8 765.8h0M688.4 754.5h0M691.5 750.7h0M692.2 753.5h0M687.6 749.0h0M695.1 746.3h0M687.3 752.8h0M692.5 752.2h0M693.7 744.7h0M695.3 746.1h0M691.1 757.3h0M687.4 746.1h0M692.0 748.7h0M687.8 752.0h0M694.9 743.7h0M689.8 746.3h0M694.9 756.5h0M696.6 758.4h0M690.1 745.6h0M692.9 739.9h0M689.1 743.1h0M694.0 748.5h0M693.9 749.2h0M688.0 749.3h0M695.7 749.3h0M693.5 751.2h0M691.1 744.1h0M685.0 742.3h0M694.1 747.8h0M692.8 749.0h0M691.9 751.0h0M698.8 744.4h0M688.8 747.2h0M690.9 744.1h0M692.9 748.6h0M694.5 749.5h0M689.4 751.2h0M696.2 746.5h0M695.8 746.6h0M692.3 750.4h0M684.3 754.2h0M693.7 750.5h0M696.0 742.4h0M690.8 756.5h0M687.9 745.9h0M688.8 747.7h0M691.7 756.0h0M694.5 748.8h0M689.6 746.1h0M688.9 754.1h0M696.9 762.4h0M694.9 752.9h0M686.5 715.5h0M690.4 712.1h0M692.4 718.9h0M690.5 716.2h0M689.7 715.5h0M697.1 713.1h0M688.7 715.7h0M689.8 725.4h0M687.1 713.8h0M689.3 718.4h0M699.1 724.1h0M701.8 717.4h0M697.0 717.3h0M688.6 713.7h0M683.8 714.6h0M694.2 717.7h0M693.8 715.7h0M686.0 719.6h0M693.3 718.3h0M689.3 717.6h0M691.1 712.0h0M690.5 715.2h0M701.5 718.3h0M695.1 723.8h0M689.9 714.8h0M691.9 711.9h0M686.4 721.7h0M686.2 716.9h0M691.1 725.1h0M691.8 710.1h0M691.5 717.3h0M697.9 722.4h0M688.0 721.6h0M691.6 715.3h0M687.1 716.5h0M697.6 722.2h0M690.5 717.7h0M686.7 719.9h0M691.2 714.0h0M697.6 718.3h0M688.8 717.5h0M691.4 716.0h0M687.6 711.3h0M687.7 715.1h0M692.5 715.7h0M687.6 719.5h0M692.0 713.6h0M695.1 719.3h0M689.1 714.2h0M690.5 714.9h0M683.8 720.0h0M690.1 725.2h0M693.3 723.0h0M682.3 716.8h0M693.1 710.0h0M687.9 723.6h0M699.5 718.7h0M688.0 715.2h0M693.8 719.8h0M693.7 710.6h0M689.9 710.1h0M689.3 713.6h0M693.7 718.6h0M688.8 717.8h0M694.1 720.4h0M694.7 681.9h0M694.5 683.2h0M701.5 682.0h0M694.7 679.2h0M691.3 686.3h0M696.6 688.8h0M692.8 684.6h0M692.6 685.9h0M694.6 690.2h0M687.8 685.3h0M685.0 675.4h0M690.2 685.2h0M691.2 682.5h0M690.7 689.4h0M694.4 687.2h0M689.6 676.7h0M691.1 681.6h0M691.0 682.7h0M694.6 682.7h0M694.4 683.3h0M692.4 685.6h0M689.4 682.5h0M696.2 688.2h0M697.0 687.5h0M693.3 689.7h0M687.6 684.1h0M690.8 689.9h0M692.0 689.2h0M688.3 686.0h0M692.9 683.8h0M691.3 684.8h0M688.6 688.6h0M691.1 686.4h0M694.8 684.4h0M686.2 684.3h0M691.7 678.6h0M690.6 681.6h0M688.2 681.6h0M689.8 687.5h0M691.9 688.7h0M689.7 684.9h0M691.4 682.5h0M692.2 685.9h0M687.8 686.6h0M695.4 691.4h0M694.3 683.2h0M692.3 692.8h0M690.4 687.4h0M693.6 681.4h0M692.5 683.8h0M688.2 693.4h0M695.6 678.7h0M692.5 690.6h0M686.2 682.2h0M695.2 688.8h0M696.2 650.1h0M695.7 654.3h0M693.9 650.3h0M694.8 651.1h0M691.8 650.9h0M692.9 652.9h0M694.2 652.3h0M696.8 648.7h0M694.5 648.2h0M691.9 650.8h0M690.4 658.8h0M686.5 652.6h0M690.4 648.6h0M686.4 653.2h0M679.1 657.0h0M691.7 653.6h0M692.4 656.5h0M695.3 656.0h0M689.5 652.6h0M692.9 649.4h0M688.3 654.8h0M692.6 654.6h0M697.5 656.2h0M692.9 657.0h0M694.7 649.4h0M689.1 646.1h0M690.5 652.9h0M691.9 656.6h0M683.9 649.5h0M694.5 652.0h0M700.7 648.9h0M683.4 651.0h0M684.0 656.2h0M689.5 653.7h0M693.0 660.0h0M687.4 650.7h0M685.7 657.1h0M692.9 657.1h0M686.5 651.5h0M693.7 651.4h0M695.2 652.9h0M693.6 653.0h0M697.2 656.1h0M696.1 653.3h0M692.8 654.5h0M694.1 656.0h0M691.4 647.7h0M686.2 650.9h0M689.2 651.0h0M686.1 652.0h0M684.9 654.2h0M689.7 649.0h0M690.0 655.6h0M692.5 653.4h0M691.6 649.9h0M693.6 647.5h0M690.3 656.6h0M690.4 653.3h0M694.2 651.1h0M690.7 654.4h0M693.0 648.5h0M695.2 656.5h0M691.2 655.8h0M690.9 617.6h0M694.7 618.6h0M697.0 627.3h0M687.5 624.8h0M691.0 617.6h0M689.2 618.2h0M690.5 617.1h0M684.8 619.2h0M688.2 619.0h0M704.2 628.7h0M691.1 616.8h0M689.7 619.9h0M690.4 617.9h0M685.0 613.1h0M692.6 624.5h0M694.0 626.4h0M694.3 622.7h0M686.8 624.0h0M690.9 621.9h0M690.4 618.8h0M690.1 623.1h0M699.6 614.6h0M695.8 617.3h0M689.1 613.4h0M690.1 623.7h0M690.6 621.4h0M691.6 618.1h0M691.5 623.7h0M694.0 614.4h0M687.9 620.7h0M689.3 623.5h0M687.7 621.8h0M688.5 620.4h0M691.1 619.4h0M692.2 622.0h0M687.8 624.1h0M687.1 620.5h0M688.7 619.3h0M690.8 619.6h0M696.9 620.5h0M691.9 619.8h0M686.5 619.9h0M686.3 622.4h0M692.2 622.3h0M692.1 621.1h0M692.6 627.8h0M691.8 619.3h0M696.2 615.5h0M691.7 620.2h0M691.7 621.5h0M692.5 619.4h0M690.8 623.0h0M689.9 621.0h0M688.4 619.2h0M696.0 617.3h0M696.9 625.6h0M691.8 621.2h0M692.1 618.4h0M696.5 617.7h0M686.3 621.8h0M691.5 587.8h0M692.8 589.9h0M691.8 589.4h0M689.5 596.8h0M691.5 587.1h0M693.9 586.0h0M691.5 590.3h0M688.9 582.8h0M695.4 586.0h0M690.0 587.7h0M690.1 591.7h0M686.7 583.0h0M691.2 590.2h0M694.4 592.0h0M689.3 592.4h0M690.3 585.9h0M696.9 592.6h0M687.0 588.2h0M698.3 580.7h0M694.8 587.4h0M697.6 589.3h0M682.9 586.5h0M705.6 581.3h0M693.2 583.0h0M689.9 589.0h0M687.1 590.8h0M693.0 588.4h0M687.5 592.3h0M692.6 592.1h0M695.3 590.3h0M694.4 592.6h0M695.6 586.7h0M692.8 578.2h0M685.8 587.9h0M694.1 587.4h0M687.0 598.2h0M698.0 592.5h0M692.3 586.6h0M689.4 586.1h0M692.9 594.7h0M687.2 590.3h0M693.6 590.2h0M696.4 586.0h0M692.3 591.5h0M682.7 589.9h0M692.8 588.8h0M692.9 590.9h0M690.2 590.6h0M686.7 588.4h0M693.0 586.0h0M683.4 585.3h0M689.6 585.7h0M687.5 588.3h0M688.9 593.8h0M690.0 593.9h0M691.4 583.9h0M686.3 588.5h0M688.5 588.5h0M687.9 582.5h0M695.6 589.4h0M691.8 589.8h0M696.7 589.7h0M690.2 592.9h0M690.7 589.3h0M691.5 587.3h0M693.9 563.3h0M690.3 558.0h0M690.0 559.9h0M693.5 559.4h0M686.3 556.3h0M690.8 563.5h0M692.0 558.6h0M695.0 557.3h0M684.5 553.0h0M703.5 559.0h0M696.2 561.2h0M694.9 567.3h0M686.1 556.9h0M691.0 560.7h0M691.8 563.6h0M689.6 555.8h0M687.7 555.2h0M694.9 557.7h0M699.5 564.3h0M693.9 556.7h0M690.6 554.6h0M690.3 552.6h0M691.1 560.1h0M687.3 557.3h0M702.0 561.2h0M697.2 552.3h0M692.2 559.7h0M692.8 566.1h0M693.3 561.2h0M690.2 551.9h0M692.9 558.3h0M685.7 559.2h0M692.0 551.7h0M695.7 554.2h0M692.7 554.4h0M682.5 551.7h0M690.8 558.9h0M687.0 557.9h0M687.9 560.8h0M689.1 557.6h0M687.3 557.4h0M692.0 554.8h0M694.7 556.6h0M689.4 553.5h0M693.3 555.6h0M687.1 558.0h0M692.3 560.0h0M688.2 558.5h0M696.1 555.7h0M695.5 560.2h0M690.2 556.8h0M692.6 552.9h0M689.0 560.1h0M691.7 551.4h0M688.1 557.1h0M695.9 558.4h0M694.3 548.4h0M690.7 554.9h0M684.0 559.5h0M686.3 566.1h0M694.5 557.5h0M692.7 555.5h0M695.5 552.8h0M688.5 557.5h0M688.3 556.1h0M691.3 562.3h0M688.2 550.4h0M683.7 561.3h0M696.8 528.3h0M690.6 519.4h0M698.6 524.3h0M691.9 522.1h0M692.8 530.8h0M690.7 523.5h0M696.7 525.1h0M690.4 524.9h0M698.2 522.2h0M697.5 541.0h0M696.0 525.0h0M690.5 527.8h0M705.8 514.1h0M689.9 526.8h0M689.8 528.8h0M689.1 526.8h0M694.0 535.4h0M689.6 528.5h0M687.3 523.6h0M690.8 533.5h0M684.7 523.7h0M692.4 532.1h0M695.6 524.4h0M685.8 528.0h0M694.3 525.2h0M689.3 524.8h0M696.0 526.2h0M689.8 524.5h0M692.0 528.8h0M689.3 524.5h0M690.9 526.1h0M689.4 527.0h0M689.4 526.7h0M689.3 528.2h0M692.6 526.5h0M688.8 523.2h0M696.7 523.0h0M701.1 529.0h0M682.2 529.3h0M696.0 529.2h0M691.7 527.8h0M688.7 529.5h0M695.2 525.8h0M686.9 530.7h0M690.8 525.8h0M692.0 524.4h0M692.6 517.2h0M689.5 526.5h0M689.7 527.8h0M689.1 527.0h0M689.5 526.9h0M692.9 522.5h0M692.4 523.5h0M703.4 520.3h0M687.6 529.8h0M690.6 527.7h0M685.5 528.3h0M688.7 523.0h0M684.0 541.1h0M725.5 750.7h0M726.9 749.3h0M723.3 744.3h0M720.5 749.3h0M724.7 747.0h0M719.4 749.3h0M734.9 741.6h0M725.6 745.8h0M722.6 749.6h0M722.4 749.3h0M719.8 754.1h0M722.8 750.3h0M730.4 747.9h0M721.6 752.4h0M717.2 747.3h0M725.9 744.2h0M725.5 750.3h0M728.0 743.6h0M722.3 746.9h0M729.3 751.9h0M724.6 748.5h0M722.3 750.6h0M724.8 745.1h0M726.6 751.6h0M727.9 744.4h0M725.8 755.8h0M723.7 756.7h0M720.0 744.9h0M722.2 749.1h0M718.2 746.0h0M716.6 746.5h0M719.6 749.0h0M710.8 761.1h0M718.1 749.7h0M720.6 749.4h0M716.9 748.3h0M716.2 756.4h0M721.5 749.9h0M717.6 755.7h0M725.8 751.4h0M723.8 752.5h0M720.2 753.0h0M727.0 753.2h0M719.9 743.9h0M724.9 749.3h0M722.5 747.8h0M727.1 746.2h0M717.3 748.9h0M712.5 746.3h0M726.2 746.9h0M722.4 729.6h0M723.6 748.0h0M725.7 747.2h0M720.2 746.7h0M724.8 749.7h0M723.1 717.9h0M721.5 722.1h0M720.3 715.8h0M724.3 712.4h0M722.0 716.4h0M721.4 719.8h0M728.7 718.5h0M724.4 712.3h0M719.3 719.6h0M721.7 721.1h0M731.9 720.4h0M723.2 716.1h0M728.5 723.2h0M729.1 717.4h0M724.6 713.6h0M724.9 717.3h0M718.6 712.5h0M716.5 713.6h0M726.4 711.5h0M719.0 716.4h0M724.0 714.3h0M724.4 714.0h0M728.5 699.4h0M727.2 717.9h0M720.2 712.0h0M725.8 719.1h0M727.3 716.3h0M720.3 711.9h0M725.1 718.6h0M720.3 718.2h0M724.1 717.5h0M724.1 717.2h0M719.8 719.8h0M723.1 707.3h0M719.7 717.9h0M716.5 713.7h0M723.9 718.2h0M728.2 716.7h0M727.5 715.8h0M715.1 710.4h0M717.9 725.3h0M724.4 713.5h0M721.2 703.7h0M721.9 715.7h0M729.0 723.5h0M724.2 715.2h0M718.9 711.3h0M724.7 718.7h0M730.5 715.9h0M724.7 714.7h0M721.1 713.6h0M719.1 719.7h0M716.0 724.4h0M722.1 721.8h0M723.3 719.1h0M720.0 687.1h0M724.3 690.1h0M725.9 680.8h0M729.6 690.2h0M726.0 678.0h0M728.5 683.1h0M730.0 685.7h0M725.6 686.1h0M714.2 689.6h0M720.4 685.9h0M731.9 687.0h0M715.9 680.8h0M728.5 687.7h0M722.6 678.6h0M721.8 688.1h0M724.8 689.1h0M720.7 673.7h0M721.4 691.3h0M720.5 682.1h0M725.6 679.9h0M719.8 688.2h0M720.4 694.1h0M724.8 680.5h0M719.4 679.0h0M728.8 680.4h0M719.5 688.7h0M716.8 679.3h0M718.0 688.1h0M727.1 673.6h0M724.1 678.5h0M727.1 684.2h0M721.7 687.4h0M720.2 679.0h0M723.7 686.8h0M712.5 682.6h0M730.2 683.3h0M728.5 683.5h0M725.2 686.9h0M720.7 682.5h0M729.9 680.8h0M733.5 692.0h0M717.3 680.8h0M722.1 686.0h0M723.5 689.7h0M725.4 690.5h0M723.9 685.4h0M722.2 681.2h0M730.1 687.3h0M724.6 679.5h0M723.2 685.0h0M722.1 678.0h0M717.0 692.5h0M722.8 685.9h0M725.5 683.4h0M730.5 673.9h0M721.4 688.0h0M720.8 688.8h0M722.0 691.1h0M721.6 690.4h0M724.9 686.8h0M720.7 683.8h0M729.0 689.0h0M722.1 681.6h0M720.7 689.0h0M726.3 684.1h0M720.2 687.6h0M720.8 684.3h0M718.7 686.0h0M719.7 655.8h0M730.3 656.4h0M725.3 651.9h0M726.1 652.4h0M727.0 655.3h0M725.2 649.4h0M725.2 655.4h0M725.8 653.6h0M717.4 648.9h0M718.2 652.7h0M727.4 652.1h0M723.2 650.9h0M720.9 649.0h0M726.7 656.7h0M727.2 653.0h0M720.4 653.8h0M710.3 650.7h0M727.2 653.4h0M727.5 649.5h0M723.0 653.7h0M725.7 657.4h0M721.7 652.9h0M723.7 654.6h0M719.2 660.1h0M719.8 654.7h0M715.1 658.1h0M715.7 640.5h0M725.8 652.4h0M724.0 653.5h0M722.1 653.0h0M725.5 649.4h0M722.6 653.7h0M729.2 652.5h0M723.5 652.4h0M721.7 654.3h0M724.3 647.9h0M718.6 647.6h0M717.1 642.7h0M715.9 656.1h0M725.4 655.4h0M719.1 649.3h0M725.0 652.5h0M718.3 650.4h0M726.4 647.8h0M724.1 656.0h0M718.4 651.8h0M724.7 653.4h0M721.1 655.0h0M724.8 657.0h0M721.2 658.4h0M721.4 647.0h0M724.2 659.8h0M726.9 658.2h0M723.5 649.7h0M727.9 649.8h0M721.7 618.3h0M722.8 623.1h0M725.2 618.3h0M723.9 618.1h0M732.7 624.1h0M721.5 616.1h0M723.2 608.5h0M730.9 635.2h0M717.6 626.3h0M720.5 623.7h0M727.8 619.1h0M724.1 627.7h0M725.4 617.7h0M721.8 619.4h0M716.6 625.8h0M725.9 624.6h0M723.2 626.5h0M722.1 612.4h0M725.3 619.2h0M717.8 612.7h0M721.7 624.9h0M721.0 619.1h0M721.8 615.8h0M724.9 617.3h0M727.0 621.8h0M725.9 623.4h0M718.8 622.0h0M722.3 618.3h0M718.8 621.7h0M730.1 614.7h0M721.0 613.3h0M723.4 625.4h0M717.1 626.0h0M722.1 621.5h0M723.1 625.1h0M722.3 624.6h0M718.6 622.2h0M719.8 621.8h0M721.3 617.9h0M725.2 613.7h0M723.9 626.6h0M717.5 623.4h0M731.7 621.3h0M718.8 626.2h0M720.3 616.5h0M724.1 619.4h0M718.4 618.3h0M721.0 616.9h0M717.9 621.0h0M723.6 617.6h0M721.9 623.0h0M727.6 618.8h0M726.9 624.9h0M725.1 624.0h0M716.9 614.1h0M724.9 625.4h0M725.8 621.0h0M725.6 615.5h0M715.2 622.6h0M721.7 620.6h0M720.3 624.7h0M726.2 619.6h0M725.2 614.1h0M725.6 615.6h0M719.0 621.4h0M728.4 589.8h0M720.5 590.5h0M720.8 587.2h0M723.7 588.1h0M726.0 590.0h0M718.1 590.2h0M722.3 590.5h0M722.6 585.9h0M718.1 584.9h0M721.2 580.5h0M728.4 577.8h0M723.0 584.6h0M721.8 591.2h0M718.1 598.2h0M725.0 589.5h0M721.0 578.1h0M721.5 591.9h0M726.6 591.4h0M715.5 584.3h0M722.6 594.6h0M726.4 589.0h0M718.1 584.3h0M722.0 590.6h0M718.6 586.9h0M721.3 587.5h0M721.4 586.7h0M725.5 584.4h0M721.7 587.6h0M724.8 587.4h0M718.2 587.4h0M727.5 594.1h0M725.2 587.5h0M726.1 592.6h0M725.4 582.1h0M722.8 591.3h0M724.7 588.4h0M728.2 582.7h0M718.7 592.1h0M719.2 586.9h0M729.8 596.2h0M725.8 585.3h0M716.7 587.5h0M721.4 587.7h0M720.2 590.9h0M722.0 589.0h0M724.9 593.5h0M719.3 583.6h0M719.3 589.1h0M721.8 585.2h0M723.9 592.2h0M718.7 588.9h0M725.7 586.3h0M722.0 589.0h0M726.2 585.7h0M715.8 594.7h0M732.3 582.1h0M727.0 593.3h0M723.4 588.9h0M720.7 589.9h0M728.2 591.2h0M724.7 585.0h0M724.7 589.2h0M727.3 592.0h0M726.4 594.2h0M729.5 588.6h0M722.4 586.1h0M718.2 587.1h0M727.2 582.3h0M731.8 590.6h0M721.7 587.9h0M716.8 587.0h0M719.3 600.3h0M719.5 553.0h0M725.0 555.2h0M722.6 553.4h0M724.4 551.1h0M724.0 559.7h0M716.8 556.9h0M726.4 560.3h0M727.9 545.6h0M722.7 560.1h0M727.1 557.9h0M717.4 562.0h0M726.2 552.4h0M725.9 556.2h0M734.3 555.8h0M723.0 565.0h0M727.4 556.6h0M719.9 554.2h0M723.2 564.0h0M723.7 551.4h0M724.2 552.8h0M726.4 548.8h0M727.0 559.0h0M722.3 554.9h0M723.0 555.2h0M720.6 556.1h0M731.8 545.4h0M723.2 568.1h0M723.6 551.3h0M729.0 556.4h0M722.9 553.0h0M733.4 561.7h0M728.0 557.5h0M723.0 555.2h0M714.6 556.6h0M724.9 560.5h0M731.0 554.2h0M720.0 552.0h0M725.9 552.8h0M723.2 569.1h0M727.9 557.2h0M725.3 550.6h0M727.6 564.2h0M713.4 569.2h0M722.0 568.5h0M727.3 559.7h0M724.4 556.3h0M724.0 563.2h0M726.2 564.4h0M722.0 557.8h0M718.8 553.9h0M723.7 566.2h0M727.2 557.9h0M717.4 549.0h0M728.1 552.5h0M721.8 553.9h0M725.1 557.7h0M726.2 563.0h0M725.2 555.7h0M724.2 561.8h0M716.9 561.1h0M723.8 549.2h0M728.7 547.4h0M721.7 563.9h0M725.9 553.1h0M727.9 567.2h0M720.5 524.7h0M719.2 523.0h0M721.3 530.8h0M720.2 531.5h0M723.7 532.4h0M727.1 525.1h0M727.5 518.7h0M713.7 520.6h0M730.2 529.4h0M721.0 524.7h0M717.9 523.7h0M718.1 532.4h0M726.3 526.8h0M720.9 528.1h0M724.5 519.3h0M721.0 532.0h0M722.0 530.0h0M723.9 527.7h0M729.8 527.6h0M726.9 532.9h0M723.8 525.9h0M726.3 515.5h0M726.6 532.2h0M726.2 524.3h0M723.9 526.7h0M732.1 521.4h0M721.5 525.5h0M729.5 525.2h0M719.7 522.3h0M718.8 523.1h0M722.2 519.3h0M723.7 525.1h0M722.2 528.4h0M720.2 527.1h0M726.6 518.5h0M736.1 523.6h0M722.0 525.7h0M737.4 519.9h0M726.6 530.8h0M717.3 522.3h0M722.3 519.6h0M720.6 527.0h0M721.8 519.8h0M727.3 525.4h0M727.7 522.8h0M722.3 525.9h0M724.2 520.6h0M724.4 522.3h0M718.5 528.1h0M727.7 523.5h0M723.3 513.3h0M721.7 522.4h0M718.9 529.0h0M721.1 532.0h0M719.1 531.0h0M717.1 529.9h0M726.7 520.3h0M722.4 518.2h0M725.8 527.3h0M755.3 742.0h0M755.1 741.9h0M758.6 746.0h0M755.3 744.9h0M767.8 756.0h0M761.6 745.4h0M751.8 751.6h0M755.0 753.8h0M753.1 748.8h0M760.9 749.3h0M759.2 749.5h0M753.5 748.8h0M752.8 735.5h0M752.4 747.5h0M758.1 744.3h0M750.2 752.1h0M746.8 745.7h0M753.5 751.2h0M758.4 746.8h0M764.7 743.3h0M753.0 740.7h0M755.5 747.8h0M755.2 750.6h0M750.6 742.7h0M757.2 746.9h0M753.6 753.0h0M760.9 744.9h0M759.4 750.9h0M754.7 747.6h0M750.3 746.6h0M760.3 745.7h0M754.7 744.4h0M751.3 745.2h0M757.4 751.5h0M755.2 747.4h0M758.6 753.0h0M754.2 751.0h0M752.5 745.8h0M751.3 748.2h0M754.5 749.4h0M766.7 750.6h0M752.3 746.4h0M752.4 747.0h0M760.6 752.3h0M753.3 747.3h0M759.1 750.9h0M750.5 750.5h0M754.6 752.7h0M755.1 752.6h0M751.7 753.3h0M748.6 747.4h0M757.7 743.7h0M753.5 749.4h0M759.8 748.3h0M756.6 750.4h0M747.9 745.0h0M757.5 745.9h0M751.1 751.0h0M759.1 746.0h0M758.6 745.3h0M756.4 751.9h0M746.7 714.8h0M758.0 724.5h0M755.8 713.6h0M754.1 716.0h0M758.9 718.6h0M753.4 709.6h0M754.4 716.6h0M755.7 717.9h0M757.4 721.8h0M759.1 714.7h0M758.9 719.2h0M757.6 721.1h0M763.5 716.3h0M755.4 718.1h0M759.4 714.9h0M747.7 720.0h0M751.7 723.4h0M746.3 714.6h0M752.7 712.7h0M754.2 711.1h0M761.8 717.0h0M756.3 725.0h0M757.6 711.7h0M759.1 707.0h0M756.7 722.2h0M756.8 721.5h0M750.0 717.4h0M751.8 707.5h0M755.1 712.1h0M749.5 719.4h0M753.2 726.3h0M754.1 721.6h0M756.0 715.5h0M753.4 719.0h0M759.6 713.8h0M750.3 717.2h0M752.6 720.1h0M753.2 720.6h0M749.4 720.6h0M751.6 719.6h0M755.6 722.9h0M753.8 715.7h0M749.5 721.1h0M750.3 723.0h0M757.6 711.7h0M754.1 709.4h0M761.7 710.8h0M756.3 716.6h0M750.9 716.7h0M757.6 717.4h0M755.1 711.6h0M760.7 715.3h0M760.9 717.8h0M752.8 712.0h0M758.4 713.1h0M759.6 709.4h0M751.3 720.9h0M747.9 714.0h0M757.9 717.6h0M750.3 716.5h0M751.5 725.5h0M753.3 718.2h0M747.4 723.2h0M758.5 721.6h0M759.5 713.7h0M757.5 718.0h0M751.9 711.0h0M757.6 714.7h0M753.3 703.6h0M758.5 719.9h0M754.6 687.0h0M753.3 688.3h0M755.0 690.4h0M755.2 690.4h0M748.4 678.1h0M759.0 683.3h0M757.3 694.6h0M748.6 682.7h0M757.0 685.4h0M751.9 686.5h0M749.5 688.4h0M751.7 693.2h0M758.7 685.5h0M754.1 695.3h0M765.4 676.0h0M752.3 679.1h0M759.1 691.7h0M749.5 695.7h0M757.0 685.8h0M754.4 681.0h0M752.0 686.4h0M755.7 686.8h0M753.8 677.1h0M752.9 686.7h0M754.8 680.9h0M749.3 683.6h0M745.1 683.6h0M752.4 678.8h0M754.4 678.1h0M750.6 679.0h0M740.2 687.8h0M751.4 686.0h0M756.3 685.5h0M757.8 690.9h0M752.1 683.3h0M762.1 684.2h0M749.5 685.3h0M751.9 692.3h0M752.8 685.8h0M760.4 688.0h0M757.2 678.6h0M753.6 684.0h0M753.6 685.5h0M749.9 688.4h0M748.8 693.0h0M752.4 688.1h0M765.1 690.6h0M759.6 678.4h0M758.0 680.3h0M751.1 682.9h0M751.8 687.6h0M748.5 681.7h0M756.3 685.1h0M753.2 684.2h0M759.8 687.2h0M753.4 679.3h0M752.0 691.8h0M751.7 686.7h0M764.0 689.6h0M755.3 651.6h0M751.2 653.3h0M755.5 647.7h0M756.4 653.6h0M750.6 656.1h0M754.9 654.5h0M740.4 652.5h0M754.9 652.0h0M762.3 651.1h0M753.2 657.7h0M756.4 655.4h0M746.4 666.7h0M756.2 644.8h0M752.2 651.8h0M760.6 654.6h0M756.2 657.6h0M757.9 663.7h0M756.0 654.9h0M757.2 652.8h0M753.8 655.1h0M753.4 658.4h0M751.6 650.9h0M756.8 652.4h0M747.8 658.0h0M754.2 654.4h0M747.3 644.2h0M763.1 648.0h0M759.9 655.3h0M742.9 652.1h0M755.3 655.8h0M752.7 650.9h0M750.9 653.0h0M749.2 654.6h0M759.7 647.2h0M756.9 659.4h0M762.2 648.1h0M752.7 657.1h0M756.7 650.2h0M750.8 658.3h0M754.3 653.5h0M760.0 661.8h0M760.8 653.5h0M762.5 647.5h0M752.4 654.2h0M755.7 656.0h0M758.9 643.8h0M754.7 650.1h0M752.3 653.1h0M759.9 653.4h0M750.2 655.7h0M754.6 658.7h0M755.6 660.3h0M755.0 656.1h0M752.3 656.5h0M758.3 657.7h0M768.0 657.7h0M755.9 642.5h0M760.1 643.5h0M758.1 647.3h0M752.3 658.7h0M757.1 624.1h0M752.7 620.3h0M758.0 622.2h0M754.4 619.7h0M757.7 619.8h0M762.2 618.0h0M759.1 622.0h0M750.9 619.9h0M753.6 620.1h0M757.6 623.9h0M747.9 615.4h0M754.2 623.5h0M757.7 619.8h0M754.2 624.7h0M756.8 621.4h0M753.0 613.3h0M757.1 617.7h0M753.7 616.8h0M759.9 619.9h0M764.3 617.5h0M747.7 613.6h0M754.8 621.6h0M751.8 621.6h0M754.3 623.8h0M755.0 619.8h0M758.3 629.8h0M749.6 620.8h0M759.9 616.7h0M755.3 622.4h0M751.7 617.4h0M759.1 626.9h0M744.4 622.0h0M762.4 624.9h0M759.6 619.8h0M758.3 621.9h0M760.9 619.5h0M757.7 625.4h0M751.9 625.4h0M753.8 627.0h0M744.3 622.5h0M753.6 620.9h0M755.4 613.0h0M750.0 620.9h0M752.1 631.0h0M755.4 625.2h0M757.2 621.2h0M753.5 622.0h0M760.5 622.3h0M758.7 623.9h0M753.1 620.0h0M755.0 617.2h0M758.5 625.7h0M751.6 617.0h0M750.6 617.7h0M746.1 623.8h0M755.6 622.7h0M762.3 619.1h0M751.0 579.9h0M756.2 584.9h0M753.5 593.7h0M754.5 595.6h0M749.4 591.6h0M750.9 586.3h0M753.4 584.4h0M757.2 586.3h0M748.8 590.7h0M756.3 588.9h0M761.0 597.3h0M758.3 589.2h0M749.2 581.2h0M747.9 587.7h0M744.2 594.3h0M759.9 592.5h0M754.2 588.8h0M753.2 584.8h0M762.7 584.7h0M756.1 588.4h0M766.9 584.7h0M763.6 584.8h0M751.5 586.3h0M750.8 595.0h0M751.0 593.8h0M755.9 591.4h0M756.8 591.1h0M756.3 595.2h0M750.2 588.3h0M761.6 586.5h0M746.7 587.1h0M752.3 593.2h0M754.9 587.0h0M758.8 584.6h0M753.2 585.1h0M749.3 592.3h0M754.5 589.2h0M759.3 591.4h0M753.7 588.1h0M749.9 587.1h0M748.1 580.4h0M753.1 589.3h0M751.0 591.2h0M762.6 592.1h0M752.5 588.2h0M761.9 591.6h0M755.2 596.4h0M746.3 591.2h0M758.5 590.6h0M749.2 583.4h0M755.5 587.0h0M749.3 588.3h0M757.5 600.0h0M748.4 586.3h0M751.8 587.7h0M754.0 586.0h0M749.5 588.0h0M756.0 588.6h0M747.5 594.8h0M742.7 581.4h0M770.5 595.0h0M751.3 584.5h0M758.1 589.9h0M756.2 591.9h0M749.3 588.5h0M757.5 593.6h0M756.8 594.0h0M752.3 586.9h0M753.3 559.7h0M752.7 551.7h0M755.1 552.3h0M757.1 557.4h0M757.8 548.9h0M752.4 555.8h0M752.9 563.2h0M757.8 560.7h0M759.2 557.4h0M751.2 565.3h0M757.5 556.0h0M752.6 559.5h0M756.5 555.1h0M755.1 556.1h0M752.2 553.5h0M757.2 567.0h0M752.3 556.7h0M749.9 556.5h0M760.4 563.3h0M752.4 555.0h0M756.5 552.4h0M757.0 552.5h0M753.1 563.5h0M752.9 560.4h0M757.5 562.9h0M752.7 549.5h0M754.7 554.0h0M751.9 563.8h0M757.3 548.2h0M754.6 560.1h0M756.1 554.7h0M753.5 552.6h0M753.0 555.5h0M758.4 557.9h0M755.8 561.2h0M762.0 548.9h0M757.4 552.6h0M757.3 557.2h0M751.5 551.6h0M752.9 561.2h0M761.3 558.6h0M756.4 564.1h0M746.0 557.8h0M753.4 557.8h0M759.0 553.3h0M749.7 550.7h0M759.1 547.7h0M755.8 563.7h0M754.0 556.9h0M756.2 553.3h0M748.2 558.5h0M760.3 556.1h0M757.0 560.7h0M749.2 551.4h0M755.9 557.1h0M754.4 553.8h0M757.9 563.3h0M758.1 552.3h0M750.4 562.1h0M759.0 555.2h0M752.6 549.0h0M757.3 553.1h0M752.5 553.9h0M761.3 558.6h0M759.1 558.4h0M752.3 550.4h0M753.7 562.3h0M756.0 560.4h0M748.3 569.8h0M756.2 562.8h0M746.2 523.6h0M753.1 529.4h0M760.9 519.4h0M754.5 526.3h0M757.9 528.8h0M754.3 526.6h0M749.8 529.0h0M756.7 524.9h0M747.3 528.8h0M750.4 523.2h0M761.5 523.2h0M755.5 528.2h0M752.0 523.9h0M755.6 524.4h0M757.2 525.4h0M759.1 527.2h0M754.7 526.6h0M755.9 537.4h0M757.5 526.5h0M754.1 524.7h0M756.4 528.6h0M759.5 525.3h0M756.6 527.1h0M756.0 530.3h0M757.2 528.7h0M752.8 528.5h0M760.9 522.7h0M756.6 522.2h0M756.4 529.0h0M753.0 522.2h0M753.6 526.7h0M756.3 526.8h0M752.2 528.3h0M751.4 528.6h0M755.8 531.3h0M752.6 523.2h0M760.7 526.1h0M752.1 514.8h0M756.8 528.6h0M756.4 526.3h0M759.2 521.4h0M755.7 521.9h0M760.1 528.9h0M748.3 533.8h0M757.6 524.4h0M756.6 524.6h0M762.7 523.7h0M754.6 531.9h0M756.8 523.0h0M752.9 525.0h0M755.0 523.4h0M752.5 528.2h0M755.8 527.8h0M755.9 522.5h0M741.8 514.3h0M752.9 527.1h0M754.3 525.1h0M748.0 524.4h0M752.6 526.7h0M757.4 521.4h0M754.9 527.5h0M759.6 521.9h0M783.6 749.4h0M783.5 755.6h0M777.0 746.2h0M784.5 751.6h0M789.3 743.7h0M785.4 750.1h0M787.2 743.8h0M792.3 752.9h0M786.6 749.2h0M787.7 750.0h0M789.8 746.6h0M787.0 745.1h0M792.2 751.3h0M785.0 749.2h0M781.9 751.7h0M786.3 746.4h0M783.2 757.9h0M784.0 749.7h0M791.4 755.3h0M787.9 754.0h0M785.0 747.0h0M790.6 752.1h0M787.3 748.7h0M787.2 747.0h0M788.4 749.8h0M790.6 747.4h0M787.5 755.4h0M787.7 753.2h0M787.5 741.8h0M779.6 740.9h0M788.2 751.3h0M783.8 746.4h0M788.9 742.9h0M788.9 748.7h0M788.3 748.1h0M785.6 746.2h0M787.0 745.1h0M789.2 749.0h0M785.5 751.5h0M786.6 749.5h0M790.3 748.9h0M787.6 750.6h0M781.7 751.2h0M783.8 747.5h0M785.8 752.8h0M787.9 747.6h0M790.3 758.3h0M790.1 750.3h0M790.0 746.3h0M781.7 753.1h0M792.8 747.8h0M788.8 750.8h0M788.2 746.3h0M790.3 746.7h0M776.5 741.1h0M782.4 752.0h0M787.2 745.8h0M788.1 747.2h0M789.0 756.5h0M790.7 748.1h0M790.0 748.8h0M788.1 749.9h0M787.0 753.9h0M782.7 751.3h0M783.7 716.5h0M785.2 716.3h0M792.1 717.1h0M789.0 716.8h0M785.8 719.6h0M788.9 720.6h0M790.9 718.9h0M791.2 715.5h0M786.1 716.3h0M787.3 723.1h0M791.2 718.9h0M782.4 717.4h0M775.6 718.9h0M785.9 721.6h0M783.9 719.1h0M787.4 714.1h0M787.6 720.1h0M785.5 718.0h0M788.4 720.6h0M788.1 724.4h0M788.2 717.0h0M784.3 716.5h0M780.4 713.3h0M785.1 719.3h0M788.7 719.9h0M793.2 717.0h0M785.4 723.3h0M786.0 717.0h0M785.8 718.2h0M787.8 714.1h0M800.8 717.2h0M790.1 718.2h0M791.3 717.5h0M789.2 711.2h0M782.7 725.7h0M788.3 722.4h0M779.5 720.2h0M783.3 717.3h0M791.6 722.1h0M784.6 715.1h0M785.4 716.5h0M793.6 721.3h0M788.6 714.6h0M786.5 722.5h0M783.0 718.1h0M788.8 715.8h0M788.6 718.0h0M796.4 707.8h0M782.8 720.3h0M789.3 716.6h0M787.4 719.8h0M777.7 709.1h0M798.9 709.8h0M786.0 719.5h0M781.9 718.7h0M785.5 718.6h0M787.3 711.1h0M780.4 719.1h0M787.8 719.2h0M782.4 715.8h0M783.8 711.2h0M787.0 716.5h0M787.3 715.5h0M778.5 713.8h0M789.9 712.9h0M790.2 721.6h0M785.1 717.1h0M783.9 716.5h0M788.9 686.0h0M783.1 676.6h0M785.3 687.2h0M787.1 682.9h0M784.9 687.1h0M783.6 683.3h0M790.6 677.9h0M787.8 681.2h0M784.8 686.2h0M785.2 689.9h0M787.7 682.6h0M788.1 682.3h0M784.8 679.8h0M794.2 687.9h0M788.2 681.3h0M791.1 685.9h0M791.8 684.7h0M783.8 685.9h0M788.7 690.5h0M789.8 687.9h0M788.9 686.7h0M785.7 684.8h0M782.5 684.2h0M793.5 676.7h0M784.9 690.5h0M786.3 689.9h0M788.7 680.2h0M792.3 681.4h0M782.1 682.3h0M785.4 683.8h0M781.3 690.0h0M787.2 688.2h0M784.5 689.8h0M784.1 677.5h0M781.9 692.8h0M788.1 681.8h0M783.6 675.0h0M788.3 679.9h0M788.0 685.0h0M780.9 682.1h0M781.0 681.5h0M784.9 686.1h0M787.9 688.0h0M787.8 687.7h0M790.2 688.1h0M790.6 685.6h0M785.2 686.5h0M788.7 682.0h0M785.0 687.3h0M787.1 681.7h0M782.3 683.9h0M785.7 682.4h0M784.6 684.7h0M786.0 682.3h0M786.3 675.1h0M788.0 687.3h0M791.2 688.8h0M784.6 682.9h0M782.1 683.6h0M785.8 683.4h0M789.9 685.7h0M781.9 682.9h0M788.8 679.3h0M787.4 682.3h0M780.4 685.8h0M790.5 684.3h0M790.3 651.8h0M787.8 655.8h0M788.2 651.7h0M785.4 653.8h0M792.8 653.4h0M790.5 652.6h0M787.6 653.6h0M789.5 654.6h0M785.5 657.6h0M786.1 650.5h0M789.7 656.1h0M790.9 650.0h0M781.8 646.8h0M780.3 650.0h0M784.7 653.6h0M778.8 654.4h0M791.1 652.9h0M786.0 657.0h0M786.4 651.7h0M789.7 652.0h0M785.1 659.6h0M784.5 657.7h0M789.2 654.5h0M786.3 648.9h0M786.2 655.2h0M786.0 653.3h0M795.4 649.6h0M783.1 655.7h0M785.3 649.7h0M790.6 648.6h0M785.9 654.7h0M788.2 647.6h0M787.7 657.0h0M790.5 656.9h0M784.9 649.9h0M791.4 659.6h0M784.9 658.6h0M787.5 655.9h0M779.3 649.6h0M789.0 651.8h0M783.9 649.4h0M788.6 652.0h0M787.1 653.0h0M785.6 654.5h0M786.0 656.0h0M790.0 648.6h0M783.6 654.0h0M779.5 647.1h0M790.2 649.4h0M785.3 654.0h0M789.2 651.3h0M786.0 648.3h0M791.3 642.4h0M789.4 653.7h0M782.1 656.3h0M792.7 653.2h0M787.6 658.1h0M783.1 660.7h0M782.9 648.6h0M790.4 656.1h0M783.3 654.7h0M787.3 651.0h0M786.1 650.3h0M784.7 651.8h0M787.3 647.0h0M790.9 646.7h0M782.0 653.4h0M788.1 654.7h0M782.8 649.4h0M790.1 658.2h0M787.3 651.3h0M782.6 656.5h0M786.9 619.7h0M785.5 625.2h0M787.5 615.5h0M792.8 618.4h0M788.7 620.5h0M788.9 619.6h0M791.3 619.4h0M782.4 615.9h0M782.9 628.2h0M799.5 615.3h0M785.8 624.6h0M787.3 625.4h0M787.4 616.3h0M784.3 618.0h0M792.5 620.9h0M783.2 622.5h0M785.0 624.0h0M780.9 615.5h0M789.6 626.4h0M791.9 619.4h0M787.9 626.2h0M781.9 617.1h0M782.0 623.6h0M792.2 619.7h0M781.2 617.3h0M787.7 617.2h0M783.4 617.6h0M778.6 615.6h0M786.2 623.5h0M783.8 630.2h0M789.6 618.0h0M785.5 618.7h0M789.2 620.9h0M783.4 624.6h0M786.2 616.5h0M788.1 625.1h0M781.6 627.4h0M785.1 623.1h0M786.9 618.7h0M783.8 623.5h0M785.2 619.1h0M783.8 618.0h0M787.8 612.6h0M788.8 622.2h0M785.6 623.2h0M785.3 615.4h0M782.0 621.5h0M782.9 616.0h0M784.3 617.9h0M791.2 618.6h0M790.6 618.2h0M789.8 624.6h0M785.6 620.5h0M801.1 634.7h0M791.3 620.5h0M788.3 622.8h0M786.3 618.8h0M786.5 614.6h0M787.3 618.5h0M789.8 621.3h0M784.6 613.0h0M784.8 620.2h0M783.6 625.7h0M790.5 621.8h0M781.3 624.3h0M786.9 627.0h0M781.3 630.7h0M781.3 620.9h0M784.4 596.4h0M786.2 593.4h0M789.9 583.2h0M785.8 589.6h0M787.3 582.7h0M789.0 588.6h0M790.2 583.0h0M779.4 590.0h0M780.3 583.1h0M787.2 588.2h0M785.1 590.5h0M786.7 585.1h0M783.2 587.1h0M791.8 585.8h0M784.7 582.9h0M786.2 587.3h0M786.8 585.7h0M786.7 581.3h0M782.2 595.9h0M786.8 589.2h0M786.0 588.3h0M778.1 587.9h0M777.7 594.4h0M787.1 588.6h0M786.3 590.4h0M782.6 588.3h0M789.3 586.9h0M785.0 594.3h0M783.6 583.8h0M784.5 601.5h0M789.6 592.5h0M786.5 587.9h0M789.3 589.1h0M790.0 585.2h0M788.3 585.6h0M787.2 592.8h0M781.6 589.0h0M784.8 591.6h0M787.8 591.7h0M792.0 587.8h0M782.4 591.7h0M787.1 596.3h0M787.3 588.8h0M774.4 584.8h0M787.3 593.1h0M786.1 592.2h0M787.0 586.1h0M788.0 591.2h0M793.9 591.5h0M789.2 584.9h0M783.6 593.1h0M785.6 592.0h0M783.9 594.5h0M788.7 588.9h0M783.7 591.2h0M783.9 592.5h0M790.6 559.3h0M780.3 557.5h0M783.6 556.6h0M787.1 552.6h0M784.0 561.9h0M796.8 570.2h0M780.7 567.3h0M787.0 554.8h0M791.2 554.5h0M792.7 558.8h0M787.2 558.1h0M789.2 554.1h0M784.0 563.4h0M789.3 553.9h0M783.8 556.6h0M786.1 555.9h0M784.4 554.5h0M789.3 557.3h0M784.8 558.1h0M788.5 547.2h0M784.7 550.5h0M785.0 562.3h0M783.2 552.7h0M786.7 550.3h0M788.8 562.2h0M785.4 560.5h0M785.3 550.4h0M791.1 541.5h0M789.4 556.4h0M787.6 554.3h0M779.0 551.5h0M793.1 553.1h0M801.9 567.4h0M784.9 558.2h0M790.0 555.5h0M787.1 560.2h0M789.8 558.3h0M786.9 560.5h0M779.7 554.6h0M780.0 554.7h0M791.7 568.4h0M787.6 557.6h0M781.5 557.9h0M798.2 562.0h0M795.2 553.5h0M780.9 564.5h0M784.5 562.9h0M786.9 552.1h0M784.8 556.4h0M787.2 563.0h0M792.5 560.5h0M789.9 556.5h0M782.7 555.9h0M786.0 550.7h0M788.8 553.0h0M800.1 546.0h0M792.1 550.9h0M784.8 547.8h0M784.2 556.6h0M789.2 557.7h0M790.3 551.8h0M788.6 531.1h0M785.9 525.3h0M791.6 525.4h0M784.9 523.1h0M786.5 515.9h0M784.1 525.1h0M786.2 525.6h0M789.1 524.7h0M783.0 522.2h0M789.3 524.1h0M787.2 522.5h0M787.0 530.5h0M790.0 523.2h0M786.4 525.0h0M788.2 527.4h0M783.8 526.3h0M789.5 521.6h0M781.8 525.5h0M790.0 527.3h0M782.7 526.8h0M784.4 512.9h0M790.8 518.0h0M787.3 526.5h0M785.5 522.3h0M786.4 524.2h0M789.2 520.9h0M793.4 527.7h0M787.1 526.4h0M796.1 517.4h0M785.7 527.0h0M785.1 523.1h0M785.4 525.2h0M785.6 529.5h0M786.4 520.5h0M788.2 526.3h0M785.5 519.8h0M782.2 523.6h0M784.3 522.9h0M785.4 524.9h0M787.8 521.9h0M785.2 533.7h0M789.9 525.8h0M789.1 525.3h0M790.1 525.9h0M787.6 524.3h0M785.6 518.9h0M789.7 529.7h0M789.9 533.1h0M786.1 522.8h0M787.3 523.3h0M790.2 528.9h0M785.9 525.1h0M784.9 528.2h0M790.6 523.3h0M786.9 525.5h0M783.2 526.9h0M778.7 525.6h0M784.9 526.2h0M816.3 750.1h0M811.2 745.9h0M818.7 743.5h0M824.9 745.9h0M826.9 751.5h0M817.7 745.6h0M818.4 747.6h0M819.2 751.4h0M827.5 745.3h0M811.7 754.1h0M816.3 756.0h0M821.5 747.5h0M818.2 750.4h0M815.2 753.1h0M823.0 746.7h0M811.1 751.2h0M821.8 748.8h0M815.0 754.0h0M824.3 738.4h0M817.2 751.4h0M819.0 743.7h0M821.9 739.9h0M816.1 750.9h0M813.4 752.7h0M814.8 744.0h0M814.3 747.9h0M819.0 745.7h0M819.1 752.4h0M828.0 753.1h0M816.6 748.1h0M814.4 752.0h0M811.5 749.6h0M814.6 747.9h0M819.4 749.8h0M819.2 749.8h0M812.9 739.7h0M818.3 742.2h0M828.5 746.2h0M820.3 742.0h0M819.1 746.8h0M822.3 749.2h0M814.2 747.2h0M817.7 742.2h0M813.2 754.3h0M818.3 751.1h0M822.9 752.8h0M809.9 745.0h0M824.6 751.8h0M819.6 751.0h0M819.1 746.0h0M825.4 743.4h0M815.9 750.4h0M819.5 751.9h0M821.1 750.3h0M820.0 749.5h0M817.7 748.2h0M814.2 747.6h0M827.2 753.8h0M819.5 739.9h0M813.7 753.2h0M818.9 742.7h0M823.9 747.1h0M819.5 745.4h0M814.3 747.5h0M813.3 754.0h0M809.4 750.4h0M827.0 748.2h0M821.3 715.3h0M817.3 713.0h0M817.2 707.8h0M817.9 718.3h0M825.0 715.0h0M826.1 720.9h0M818.6 718.7h0M818.3 712.3h0M819.0 715.2h0M815.9 714.8h0M822.2 718.0h0M821.2 721.1h0M819.8 717.3h0M821.6 716.3h0M819.0 717.7h0M814.8 721.3h0M817.6 712.1h0M821.6 714.7h0M826.9 718.2h0M825.5 721.4h0M813.8 717.9h0M810.5 724.0h0M815.5 716.4h0M817.0 718.9h0M821.4 723.7h0M818.7 711.2h0M820.0 714.9h0M824.2 717.4h0M816.4 711.6h0M823.0 719.0h0M821.3 714.2h0M815.6 711.2h0M820.1 717.4h0M817.2 722.8h0M824.5 731.9h0M820.6 715.7h0M821.6 719.0h0M802.9 702.5h0M814.9 711.6h0M817.2 721.4h0M820.9 713.8h0M818.5 724.5h0M812.7 715.0h0M820.8 715.9h0M813.8 712.2h0M816.1 708.9h0M823.1 720.1h0M822.5 715.9h0M813.4 708.6h0M821.7 723.5h0M822.6 716.9h0M816.7 728.8h0M822.5 717.6h0M820.2 717.4h0M815.8 714.1h0M815.0 709.9h0M816.4 714.9h0M820.4 723.7h0M819.7 721.0h0M826.4 721.4h0M815.5 716.6h0M821.3 715.3h0M818.6 714.1h0M823.8 717.0h0M827.6 714.4h0M823.2 716.1h0M815.5 721.5h0M820.4 711.5h0M817.1 680.5h0M815.9 679.2h0M817.8 691.3h0M815.1 680.8h0M819.0 676.7h0M818.3 679.6h0M819.9 692.3h0M819.9 688.0h0M819.5 685.2h0M825.0 682.9h0M816.7 686.6h0M812.5 685.5h0M818.6 683.4h0M819.7 692.2h0M819.3 687.9h0M818.8 687.9h0M815.8 687.8h0M817.1 691.7h0M816.1 685.9h0M820.0 679.1h0M819.6 683.1h0M817.1 683.3h0M815.5 683.2h0M822.0 685.9h0M816.6 685.7h0M817.2 691.0h0M819.9 674.7h0M824.5 687.3h0M819.0 680.0h0M813.4 682.4h0M816.3 682.6h0M819.1 684.5h0M813.7 690.0h0M823.5 687.5h0M816.7 685.7h0M816.6 690.7h0M814.0 683.7h0M823.4 683.1h0M814.3 693.4h0M817.0 681.1h0M812.0 684.0h0M816.6 681.2h0M817.1 679.5h0M819.8 686.6h0M821.8 688.5h0M823.8 682.9h0M821.6 681.3h0M811.2 689.2h0M818.2 675.2h0M820.2 692.2h0M820.2 687.8h0M816.1 687.5h0M816.6 695.0h0M813.1 680.1h0M819.7 682.6h0M816.4 686.5h0M817.9 686.5h0M826.2 668.7h0M815.0 686.6h0M811.3 692.3h0M815.1 676.6h0M817.7 686.9h0M826.4 681.6h0M818.3 681.1h0M823.0 682.7h0M814.2 648.4h0M817.4 649.6h0M817.9 656.8h0M824.8 655.5h0M824.6 651.8h0M816.2 655.1h0M815.1 654.3h0M817.5 644.6h0M819.7 649.4h0M816.7 656.8h0M821.2 657.5h0M813.9 646.3h0M809.0 660.7h0M815.8 654.4h0M820.6 653.8h0M819.6 654.8h0M815.8 649.7h0M819.6 656.5h0M818.8 653.3h0M824.9 657.6h0M815.6 661.2h0M823.1 653.2h0M816.5 651.7h0M815.3 655.8h0M817.3 652.0h0M818.1 644.1h0M818.6 658.0h0M820.2 656.7h0M813.8 652.7h0M819.0 656.5h0M815.0 646.6h0M816.3 651.2h0M822.3 649.1h0M823.4 654.2h0M817.4 651.1h0M813.5 657.0h0M818.6 650.5h0M817.3 648.7h0M820.8 655.1h0M818.7 663.4h0M818.4 651.1h0M817.9 650.1h0M820.4 645.5h0M816.3 654.4h0M826.3 655.5h0M817.4 649.2h0M820.1 652.2h0M801.7 657.7h0M816.3 647.6h0M815.8 660.7h0M819.9 652.1h0M823.1 649.6h0M818.0 654.8h0M817.6 647.9h0M818.1 650.0h0M824.9 656.4h0M810.2 653.1h0M824.6 658.7h0M822.2 648.5h0M814.2 657.4h0M820.7 649.7h0M821.2 645.3h0M818.7 654.5h0M816.6 659.0h0M818.0 642.5h0M821.9 653.0h0M817.0 662.0h0M820.2 620.3h0M820.2 618.4h0M816.6 625.0h0M817.0 623.1h0M818.0 616.3h0M823.9 626.9h0M810.8 619.4h0M818.6 626.4h0M816.8 623.4h0M821.9 621.1h0M823.3 625.7h0M815.7 624.3h0M815.0 621.7h0M821.0 618.5h0M822.2 619.8h0M817.1 623.1h0M816.7 621.2h0M819.7 615.6h0M822.6 620.7h0M818.9 617.8h0M820.7 620.5h0M824.5 612.4h0M818.4 618.0h0M815.8 611.4h0M817.2 620.8h0M822.4 623.3h0M816.9 617.5h0M822.1 624.9h0M816.6 617.3h0M821.2 617.9h0M814.3 613.5h0M820.6 623.7h0M814.7 619.4h0M820.7 622.3h0M822.3 619.3h0M819.2 623.2h0M819.2 619.4h0M818.0 624.9h0M821.1 620.5h0M822.9 618.4h0M817.7 617.6h0M812.8 619.0h0M823.0 617.6h0M819.7 622.8h0M817.3 626.7h0M821.0 615.6h0M820.9 617.9h0M807.6 619.9h0M821.4 624.0h0M820.6 615.7h0M822.1 621.0h0M814.5 625.9h0M817.1 621.5h0M817.2 622.2h0M816.3 617.6h0M815.4 624.8h0M824.2 623.2h0M819.9 616.5h0M816.7 624.5h0M817.9 615.4h0M822.5 619.1h0M818.6 616.2h0M814.6 619.4h0M819.4 620.8h0M825.3 623.8h0M823.0 590.4h0M817.9 592.1h0M816.2 592.2h0M816.2 588.7h0M822.3 588.0h0M822.2 588.4h0M821.3 592.8h0M822.5 588.4h0M819.7 595.8h0M816.1 593.2h0M822.0 596.0h0M815.8 583.7h0M817.6 595.5h0M819.8 594.1h0M815.4 593.3h0M820.9 588.5h0M819.3 584.7h0M825.9 591.8h0M820.8 595.2h0M817.0 588.6h0M816.5 584.0h0M817.5 587.5h0M816.8 583.2h0M820.1 587.2h0M822.2 592.1h0M807.2 586.7h0M812.5 591.0h0M817.3 583.3h0M818.8 588.0h0M820.4 587.6h0M820.8 586.3h0M821.2 589.1h0M816.7 592.3h0M812.9 596.3h0M822.5 592.4h0M812.7 588.7h0M818.9 588.9h0M820.1 590.5h0M819.7 588.4h0M821.5 588.3h0M825.5 588.9h0M818.1 591.2h0M827.5 586.4h0M815.6 592.8h0M817.3 588.1h0M823.3 589.8h0M810.2 591.0h0M816.8 589.8h0M817.6 589.2h0M823.2 590.3h0M813.9 592.3h0M822.3 591.5h0M819.0 588.7h0M821.4 588.7h0M827.3 587.5h0M816.6 585.1h0M804.3 598.7h0M818.9 591.4h0M819.2 582.0h0M818.2 593.1h0M822.9 591.9h0M823.0 591.3h0M817.9 586.1h0M820.4 582.8h0M815.9 592.5h0M821.1 591.0h0M812.2 604.8h0M822.1 586.2h0M820.5 557.8h0M817.2 553.7h0M815.4 557.9h0M817.0 559.9h0M813.9 557.3h0M819.4 562.4h0M815.3 555.2h0M822.3 558.0h0M816.3 552.2h0M822.6 559.4h0M812.7 554.6h0M808.6 553.2h0M822.8 557.8h0M820.4 555.3h0M811.0 556.7h0M817.6 559.7h0M822.8 560.0h0M822.8 562.5h0M808.9 553.9h0M812.8 561.1h0M816.8 563.4h0M822.1 559.4h0M819.9 565.3h0M825.5 558.1h0M816.1 558.5h0M820.0 560.4h0M823.9 551.8h0M819.4 560.9h0M816.2 558.1h0M826.3 556.1h0M813.5 557.5h0M818.2 557.5h0M822.4 555.5h0M817.8 550.2h0M819.8 554.8h0M811.0 557.3h0M817.9 555.8h0M819.4 559.9h0M820.4 564.6h0M818.4 552.6h0M819.2 557.3h0M820.4 552.9h0M811.6 560.4h0M810.7 561.9h0M816.3 565.3h0M819.2 549.9h0M821.8 561.0h0M818.6 556.6h0M816.9 552.0h0M820.4 558.8h0M825.0 555.3h0M811.3 547.5h0M817.8 557.2h0M816.3 554.3h0M816.5 555.7h0M819.8 559.0h0M813.4 562.4h0M817.3 560.1h0M831.0 544.4h0M817.9 552.6h0M814.2 553.2h0M814.7 560.5h0M814.8 558.6h0M812.4 553.3h0M819.0 561.4h0M813.9 559.7h0M824.2 559.1h0M821.0 554.4h0M823.5 559.8h0M824.0 530.6h0M819.4 523.3h0M819.6 525.4h0M822.1 526.8h0M824.6 524.1h0M816.6 525.4h0M823.0 519.5h0M818.8 524.9h0M813.7 528.2h0M817.9 525.6h0M813.0 529.0h0M820.6 527.2h0M819.0 525.8h0M833.5 532.4h0M822.1 531.3h0M824.1 527.7h0M818.9 523.8h0M820.9 520.1h0M822.9 526.0h0M817.6 522.5h0M825.6 523.2h0M818.9 527.0h0M822.2 525.0h0M820.8 522.3h0M822.1 522.7h0M823.2 520.9h0M821.5 526.2h0M816.8 528.3h0M817.7 523.7h0M817.4 524.5h0M822.6 527.2h0M818.5 528.4h0M816.8 522.6h0M816.4 523.0h0M817.4 522.5h0M814.6 521.3h0M819.8 529.8h0M816.6 532.6h0M821.5 525.4h0M826.0 525.1h0M816.2 519.6h0M818.5 535.2h0M810.4 529.0h0M817.0 524.7h0M818.4 525.2h0M822.1 522.8h0M823.4 522.6h0M815.8 527.9h0M820.7 529.5h0M824.5 524.5h0M816.5 523.9h0M815.2 527.1h0M823.2 522.1h0M825.1 522.7h0M823.9 522.5h0M822.2 528.1h0M818.8 523.4h0M817.5 525.4h0M852.4 750.9h0M851.9 743.4h0M852.1 747.3h0M850.7 753.2h0M854.5 748.4h0M851.7 749.8h0M850.0 749.9h0M848.1 747.5h0M848.4 743.7h0M851.9 748.2h0M851.1 749.1h0M851.8 749.5h0M853.1 749.8h0M849.3 740.1h0M847.0 741.2h0M847.8 748.5h0M845.0 742.6h0M850.6 747.6h0M851.4 748.1h0M846.4 752.7h0M847.6 750.0h0M857.1 752.6h0M847.9 747.6h0M849.6 743.9h0M853.5 748.2h0M856.7 743.7h0M849.7 748.1h0M850.2 753.6h0M851.0 746.8h0M848.9 742.0h0M851.6 749.3h0M848.8 754.6h0M852.9 748.9h0M846.5 749.8h0M851.9 744.9h0M850.2 753.6h0M854.3 746.0h0M848.2 746.8h0M846.3 749.6h0M849.7 750.4h0M858.9 750.6h0M849.8 750.9h0M845.7 752.8h0M847.7 751.9h0M847.9 744.9h0M852.5 755.0h0M850.6 751.9h0M854.4 748.2h0M848.2 747.7h0M851.6 747.0h0M848.8 750.8h0M850.6 745.0h0M852.7 746.7h0M849.9 753.1h0M851.0 753.1h0M851.5 752.3h0M854.2 748.8h0M847.4 748.7h0M851.5 750.3h0M847.6 745.6h0M854.5 719.1h0M849.9 715.6h0M851.8 714.2h0M850.0 713.9h0M848.7 713.0h0M855.5 716.6h0M848.3 712.6h0M841.0 718.2h0M842.8 715.5h0M847.6 712.0h0M845.5 715.9h0M844.3 705.4h0M850.9 713.6h0M856.4 721.6h0M859.2 713.8h0M851.0 715.6h0M851.9 717.4h0M844.2 722.5h0M852.2 719.4h0M848.6 719.0h0M849.1 714.7h0M852.8 708.0h0M846.0 715.0h0M846.8 719.1h0M847.8 714.3h0M851.5 715.2h0M854.1 718.9h0M849.1 713.0h0M847.3 717.7h0M855.4 713.0h0M850.2 717.4h0M851.8 717.3h0M857.3 717.5h0M849.1 717.1h0M846.1 719.2h0M853.9 716.0h0M847.0 719.3h0M850.1 721.2h0M844.4 719.3h0M855.9 717.7h0M862.3 721.0h0M852.5 720.0h0M850.6 710.2h0M855.1 716.9h0M855.7 715.5h0M858.5 718.1h0M854.9 716.1h0M850.9 718.3h0M853.2 719.2h0M850.2 715.2h0M847.2 709.6h0M846.2 712.5h0M850.8 716.4h0M842.4 713.4h0M849.9 717.6h0M849.8 708.1h0M850.5 711.3h0M850.4 722.6h0M848.8 685.2h0M853.7 677.0h0M849.2 685.6h0M849.3 685.4h0M848.9 678.5h0M847.7 687.3h0M847.5 687.0h0M853.1 679.2h0M851.6 684.5h0M858.2 687.4h0M856.6 678.1h0M851.0 682.2h0M847.9 687.4h0M852.4 680.0h0M845.9 678.2h0M836.3 692.7h0M853.9 689.0h0M847.8 684.0h0M851.0 680.5h0M848.5 682.9h0M850.0 683.7h0M849.8 684.7h0M852.3 688.7h0M854.3 686.8h0M850.4 686.4h0M851.8 684.9h0M848.4 684.0h0M850.6 682.3h0M852.3 688.3h0M849.4 690.2h0M855.5 683.6h0M849.3 684.7h0M853.7 688.9h0M846.2 687.1h0M847.9 686.5h0M850.4 680.6h0M849.6 686.2h0M846.9 690.3h0M848.6 680.3h0M843.7 687.0h0M853.1 686.0h0M843.9 686.8h0M853.4 687.9h0M852.5 692.7h0M847.8 689.7h0M854.4 679.3h0M849.8 687.4h0M853.9 682.5h0M854.5 682.9h0M839.3 681.9h0M848.1 683.1h0M855.8 684.4h0M849.8 687.5h0M850.5 683.6h0M845.6 684.1h0M843.3 676.8h0M853.9 683.3h0M852.7 689.3h0M850.6 685.5h0M848.1 685.5h0M855.3 682.8h0M853.8 676.4h0M849.6 685.5h0M854.0 682.5h0M851.2 683.1h0M849.5 686.5h0M861.4 678.3h0M849.2 684.9h0M857.9 683.1h0M854.0 679.8h0M853.8 654.1h0M855.6 648.3h0M846.2 648.4h0M845.1 653.7h0M856.9 652.7h0M846.0 654.5h0M854.1 655.9h0M847.4 653.8h0M854.0 653.2h0M854.9 651.4h0M844.3 670.8h0M860.1 646.5h0M847.9 655.6h0M864.1 656.4h0M842.1 655.5h0M854.8 652.1h0M852.7 652.7h0M846.1 647.3h0M845.4 649.7h0M854.9 657.9h0M849.0 658.6h0M843.4 657.5h0M856.6 652.8h0M850.0 653.5h0M855.5 651.8h0M854.2 658.7h0M854.8 653.6h0M849.2 654.7h0M851.0 652.8h0M854.3 650.7h0M853.2 649.4h0M849.0 647.1h0M849.6 652.3h0M850.9 648.1h0M851.0 652.9h0M852.1 646.4h0M849.4 649.2h0M845.3 659.4h0M851.7 649.8h0M846.5 653.5h0M848.2 652.1h0M852.9 648.5h0M856.8 653.6h0M850.4 656.9h0M855.1 651.2h0M853.6 646.5h0M849.7 646.5h0M848.0 647.5h0M852.5 648.0h0M855.2 654.1h0M851.4 655.1h0M848.9 651.0h0M854.7 649.4h0M844.2 646.2h0M853.5 648.9h0M853.8 648.2h0M849.3 653.3h0M853.3 650.5h0M844.6 651.8h0M836.3 664.4h0M844.6 653.6h0M856.0 661.1h0M855.2 659.5h0M847.3 619.8h0M853.3 624.1h0M852.2 616.3h0M855.2 619.6h0M849.8 617.6h0M857.6 630.9h0M853.5 618.6h0M850.9 623.3h0M849.0 623.1h0M852.0 624.0h0M853.0 624.4h0M850.6 620.8h0M848.9 623.8h0M853.4 616.9h0M851.5 624.8h0M847.4 618.0h0M853.3 621.5h0M848.3 616.3h0M843.5 627.6h0M852.9 616.7h0M849.4 617.1h0M850.4 616.2h0M853.2 623.3h0M858.1 615.9h0M842.4 629.5h0M848.2 621.3h0M849.6 628.3h0M854.4 622.4h0M850.6 626.5h0M854.3 617.7h0M847.6 625.4h0M851.2 625.8h0M851.3 628.1h0M848.0 622.8h0M850.0 612.6h0M841.7 620.6h0M852.1 625.1h0M853.5 620.7h0M849.7 615.6h0M853.1 622.2h0M844.9 622.4h0M846.8 622.7h0M845.5 615.1h0M846.7 624.4h0M853.6 609.1h0M849.7 615.5h0M854.8 618.9h0M849.5 618.0h0M851.2 628.8h0M854.3 620.5h0M852.4 622.4h0M851.5 622.2h0M856.7 619.6h0M855.2 610.9h0M851.8 618.6h0M845.2 623.7h0M849.3 618.9h0M850.3 618.9h0M856.4 617.4h0M853.0 623.1h0M853.1 619.1h0M854.8 620.8h0M850.2 619.8h0M851.3 617.6h0M848.2 590.6h0M851.6 590.9h0M843.5 589.8h0M845.8 590.5h0M850.0 597.7h0M850.2 589.5h0M853.2 591.9h0M853.6 588.5h0M851.7 593.0h0M849.0 586.2h0M864.2 586.5h0M848.5 588.6h0M849.8 585.0h0M855.4 591.3h0M847.9 587.7h0M847.0 597.4h0M849.9 590.2h0M848.3 593.9h0M852.5 587.8h0M854.7 588.3h0M850.8 597.5h0M847.4 590.5h0M851.1 588.2h0M850.9 597.3h0M851.9 590.1h0M851.8 590.9h0M847.1 583.9h0M847.3 591.3h0M850.5 582.4h0M852.7 589.5h0M850.3 592.0h0M847.6 590.1h0M852.6 592.1h0M854.3 587.0h0M852.0 591.3h0M856.9 583.7h0M850.0 585.6h0M852.8 589.5h0M847.4 591.0h0M851.3 588.1h0M845.5 588.6h0M849.8 587.6h0M855.8 588.8h0M843.9 589.4h0M851.1 593.3h0M846.9 586.5h0M853.7 589.7h0M855.0 588.8h0M847.8 593.4h0M850.2 588.3h0M852.9 591.5h0M852.0 587.8h0M860.3 596.7h0M848.3 584.1h0M850.1 593.1h0M852.3 585.1h0M849.6 597.6h0M847.9 590.8h0M848.5 589.4h0M855.7 589.0h0M847.8 584.8h0M852.2 587.1h0M847.5 591.1h0M853.4 594.8h0M848.4 588.4h0M847.0 590.9h0M846.0 594.4h0M853.6 599.0h0M847.6 592.7h0M852.1 590.2h0M851.8 589.3h0M854.8 558.9h0M849.4 562.0h0M856.0 557.2h0M852.2 559.9h0M853.4 560.6h0M841.1 561.8h0M851.1 554.4h0M849.5 553.7h0M850.2 555.3h0M851.1 559.9h0M851.3 561.0h0M845.4 566.7h0M847.5 559.6h0M851.3 557.1h0M843.8 551.2h0M853.7 555.1h0M850.8 555.6h0M846.6 556.4h0M851.9 550.9h0M852.7 550.6h0M844.8 561.5h0M845.7 559.8h0M844.7 555.9h0M848.8 565.9h0M850.7 562.9h0M844.0 557.5h0M851.1 558.6h0M846.8 560.4h0M861.8 548.5h0M852.2 563.3h0M848.3 551.6h0M854.4 559.9h0M850.3 562.6h0M855.1 560.7h0M850.5 567.9h0M858.5 559.0h0M853.5 557.0h0M845.5 552.2h0M848.8 557.1h0M846.5 567.8h0M854.9 544.1h0M846.6 562.6h0M847.9 551.6h0M853.8 555.3h0M847.8 556.6h0M853.1 561.0h0M845.0 553.0h0M854.5 560.8h0M852.7 554.8h0M853.6 554.3h0M849.6 559.2h0M849.7 558.6h0M853.0 564.5h0M852.8 564.0h0M856.5 555.9h0M850.5 571.6h0M851.2 552.5h0M851.8 555.1h0M848.3 562.0h0M853.1 558.4h0M847.7 560.3h0M848.0 557.1h0M856.5 554.0h0M855.0 563.7h0M851.9 566.5h0M847.2 556.4h0M854.2 549.1h0M851.7 553.2h0M850.6 554.9h0M851.7 561.6h0M852.4 529.5h0M851.6 520.7h0M848.2 526.0h0M856.9 521.9h0M851.4 519.2h0M852.9 532.7h0M847.2 529.1h0M850.9 529.3h0M851.6 521.6h0M853.0 520.5h0M849.1 525.3h0M850.5 520.9h0M850.5 533.6h0M849.5 517.6h0M842.9 531.4h0M847.9 528.7h0M851.3 527.6h0M853.7 522.6h0M854.5 522.5h0M854.1 533.0h0M846.2 530.6h0M852.4 525.1h0M849.1 522.2h0M851.4 531.0h0M853.6 528.9h0M849.8 520.2h0M851.8 529.1h0M850.5 524.2h0M850.4 527.0h0M847.3 522.3h0M851.0 517.2h0M851.0 522.6h0M846.0 522.2h0M852.7 524.8h0M853.2 524.5h0M847.4 522.2h0M846.6 529.0h0M850.5 527.9h0M850.6 531.1h0M850.9 519.0h0M851.8 526.0h0M849.6 528.3h0M846.4 524.9h0M848.3 526.5h0M853.9 530.9h0M848.9 521.9h0M847.4 531.3h0M847.8 519.2h0M837.4 533.2h0M844.3 535.2h0M848.6 531.9h0M849.2 525.6h0M850.7 524.9h0M849.7 533.4h0M848.0 525.1h0M848.1 520.0h0" stroke="#8a8a8a" stroke-width="3.4" stroke-linecap="round"/>
<rect x="877.5" y="509.5" width="20" height="255.0" fill="#ececec" stroke="#d0d0d0"/>
<rect x="878.0" y="648.5" width="19" height="32" fill="#e2edf8"/>
<rect x="878.0" y="527.5" width="19" height="8" fill="#e6eff8"/>
<rect x="880.0" y="653.5" width="16" height="18" fill="#7fa7d6"/>
<rect x="880.0" y="659.0" width="16" height="6" fill="#3f7fc3"/>
<path d="M897.5 509.5h7M897.5 522.2h5M897.5 535.0h5M897.5 547.8h5M897.5 560.5h5M897.5 573.2h7M897.5 586.0h5M897.5 598.8h5M897.5 611.5h5M897.5 624.2h5M897.5 637.0h7M897.5 649.8h5M897.5 662.5h5M897.5 675.2h5M897.5 688.0h5M897.5 700.8h7M897.5 713.5h5M897.5 726.2h5M897.5 739.0h5M897.5 751.8h5M897.5 764.5h7" stroke="#c8c8c8"/>
<text x="906.0" y="513.5" font-size="11.5" fill="#777">0</text>
<text x="906.0" y="577.25" font-size="11.5" fill="#777">10</text>
<text x="906.0" y="641.0" font-size="11.5" fill="#777">20</text>
<text x="906.0" y="704.75" font-size="11.5" fill="#777">30</text>
<text x="906.0" y="768.5" font-size="11.5" fill="#777">40</text>
<text transform="translate(20.8,25.5) scale(0.86,1)" font-size="22.5" font-style="italic" font-weight="bold" fill="#fff" letter-spacing="-0.8">aır</text>
<text transform="translate(43.6,25.6) scale(0.655,1)" font-size="28.5" font-weight="bold" fill="#fff" letter-spacing="-0.3">OS</text>
<g fill="none" stroke="#fff" stroke-width="1.2"><path d="M34.4 9.8 A2.4 2.4 0 0 1 36.8 12.2"/><path d="M34.4 7.5 A4.7 4.7 0 0 1 39.1 12.2"/><path d="M34.4 5.2 A7 7 0 0 1 41.4 12.2"/></g><circle cx="72" cy="8" r="1" fill="none" stroke="#fff" stroke-width="0.4" opacity="0.7"/>
<rect x="74" y="12" width="12" height="13.5" fill="#fff"/>
<text x="80" y="24" font-size="12" fill="#222" font-weight="bold" text-anchor="middle">7</text>
<g stroke="#3aa6e6" fill="none"><circle cx="20.8" cy="79.2" r="8.9" stroke-width="2.3"/><path d="M20.8 72.6 V80" stroke-width="1.9"/><path d="M18.16 75.43L17.01 73.79M23.44 75.43L24.59 73.79M16.43 77.78L14.52 77.16M25.17 77.78L27.08 77.16M16.36 80.39L14.42 80.91M25.24 80.39L27.18 80.91" stroke-width="1.4"/></g>
<g fill="none" stroke="#17a6f2" stroke-width="2.5"><path d="M12.9 116.6 A11.4 11.4 0 0 1 29.5 116.6"/><path d="M16.5 119.6 A6.6 6.6 0 0 1 25.9 119.6"/></g><path d="M21.2 124.2 L18.3 121.2 A4.1 4.1 0 0 1 24.1 121.2 Z" fill="#17a6f2"/>
<g fill="#17a6f2"><rect x="18.3" y="149.8" width="5.8" height="5.2" rx="1.6"/><circle cx="14.6" cy="161.8" r="2.6"/><circle cx="21.2" cy="161.8" r="2.6"/><circle cx="27.8" cy="161.8" r="2.6"/></g><path d="M21.2 154 V161 M14.6 161 V157.8 H27.8 V161" stroke="#17a6f2" stroke-width="1.2" fill="none"/>
<g fill="#17a6f2"><rect x="12.8" y="188.6" width="7.6" height="7.4" rx="1.4"/><rect x="21.5" y="188.6" width="7.6" height="7.4" rx="1.4"/><rect x="12.8" y="196.8" width="7.6" height="7.4" rx="1.4"/><rect x="21.5" y="196.8" width="7.6" height="7.4" rx="1.4"/></g><path d="M23 191.3 l2.3 2.4 l2.4 -2.4 M14.3 199.5 l2.3 2.4 l2.4 -2.4" stroke="#2b2f36" stroke-width="1.3" fill="none"/>
<g fill="#17a6f2"><rect x="11.8" y="229.2" width="17.6" height="12" rx="2"/></g><path d="M14.8 226.3 v3.5 M18.6 226.3 v3.5 M22.4 226.3 v3.5 M26.2 226.3 v3.5 M14.8 240.5 v3.6 M18.6 240.5 v3.6 M22.4 240.5 v3.6 M26.2 240.5 v3.6" stroke="#17a6f2" stroke-width="2"/>
<path d="M1409.3 11.3 H1403.3 V23 H1409.3" fill="none" stroke="#111" stroke-width="2.4"/><path d="M1406.5 16.9 H1412" stroke="#111" stroke-width="2.2"/><path d="M1410.8 13 L1415.4 16.9 L1410.8 20.8 Z" fill="#111"/>
</svg>
</body></html>
